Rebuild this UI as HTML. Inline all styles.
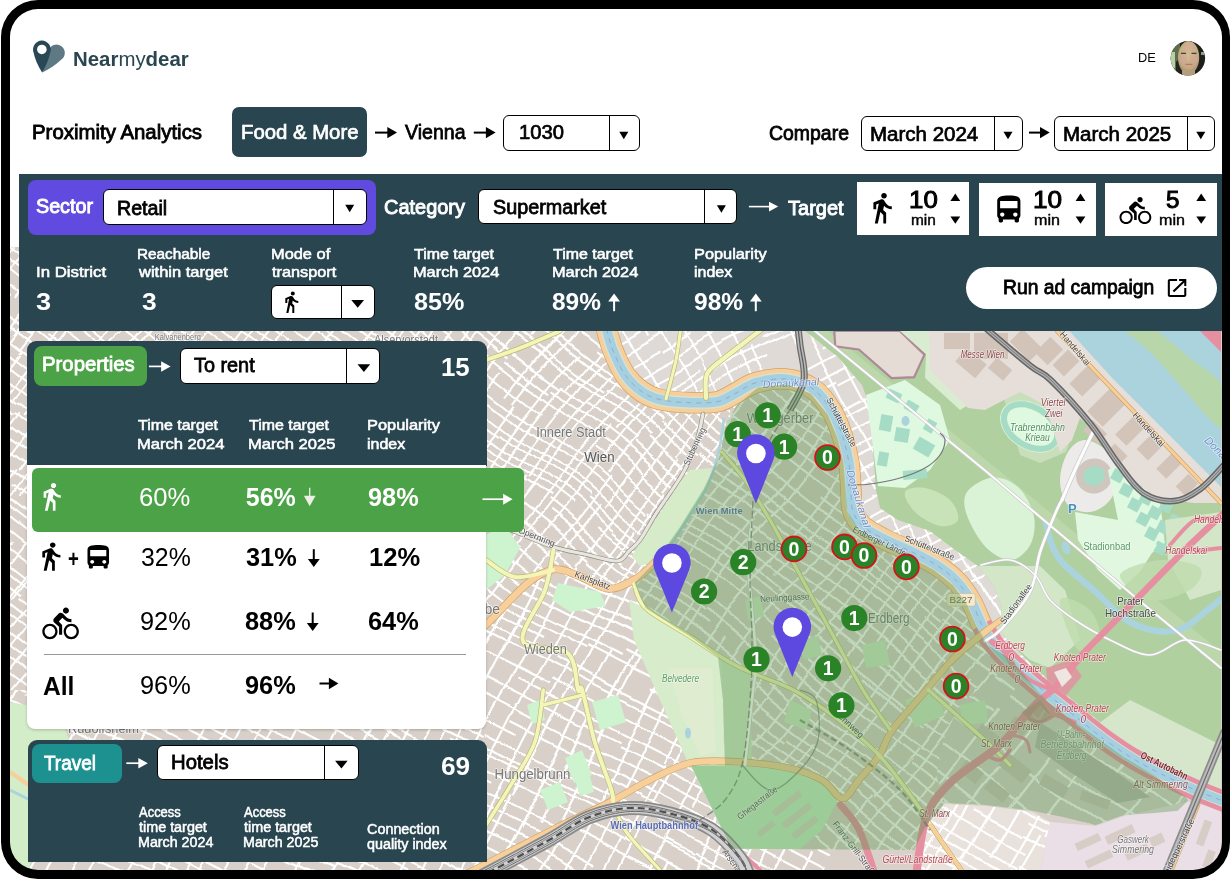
<!DOCTYPE html>
<html lang="en"><head><meta charset="utf-8"><title>Nearmydear – Proximity Analytics</title>
<style>
html,body{margin:0;padding:0;background:#fff}
body{width:1231px;height:879px;overflow:hidden;position:relative;font-family:"Liberation Sans",sans-serif}
#frame{position:absolute;left:0;top:0;width:1231px;height:879px;overflow:hidden;background:#fff}
#bezel{position:absolute;left:1.2px;top:-0.3px;width:1228.7px;height:879.1px;box-sizing:border-box;border:solid #000;border-width:9.1px 8.8px 9.3px 9.1px;border-radius:37px;box-shadow:0 0 0 60px #fff;pointer-events:none}
#map{position:absolute;left:10px;top:247px;width:1215px;height:626px;overflow:hidden;background:#e6e1dc}
#map svg{position:absolute;left:0;top:0}
.t{position:absolute;line-height:1;white-space:nowrap;transform-origin:0 0;margin:0;padding:0}
.b{position:absolute;box-sizing:border-box}
.sel{position:absolute;box-sizing:border-box;background:#fff;border:1px solid #000;border-radius:6px}
.sel i{position:absolute;top:0;bottom:0;width:1px;background:#000}
svg.ic{position:absolute;overflow:visible}
#txt{position:absolute;left:0;top:0;width:1231px;height:879px;will-change:transform}
#map svg{will-change:transform}

</style></head>
<body>
<div id="frame">
<div id="map">
<svg width="1215" height="626" viewBox="10 247 1215 626" font-family="'Liberation Sans', sans-serif">
<defs><filter id="warp" x="-5%" y="-5%" width="110%" height="110%"><feTurbulence type="fractalNoise" baseFrequency="0.009" numOctaves="1" seed="4" result="n"/><feDisplacementMap in="SourceGraphic" in2="n" scale="30" xChannelSelector="R" yChannelSelector="G"/></filter>
<filter id="soft" x="0" y="0" width="100%" height="100%"><feGaussianBlur stdDeviation="0.45"/></filter>
<clipPath id="c1"><path d="M10 247L1225 247L1225 873L10 873Z"/></clipPath>
<clipPath id="c2"><path d="M10 247L612 247L606.8 330L613 350.5L625.2 375L641.6 391.4L660 399.6L690.7 402.7L717.4 401.7L736 393L728 418L722 452L704 489L680 526L656 561L637.5 577.6L608.9 588.8L578 575.5L553.6 569.4L527 583.7L486 624.7L420 690L10 690Z"/></clipPath>
<clipPath id="c3"><path d="M598 300L606.8 330L613 350.5L625.2 375L641.6 391.4L660 399.6L690.7 402.7L717.4 401.7L736 393L756.5 382.5L787.2 379.1L813.8 389.4L832.2 411.9L842.5 436.5L848.6 461L850.7 485.6L852.5 510L863 526.4L883.4 538.7L910 551L936.7 565.3L957.1 581.7L971.5 602L981.7 624.7L992 642L1010 661.7L1042.4 690L1073.1 714.6L1103.9 739.1L1134.6 759.6L1165.3 776L1196 790.3L1228 803L1221 803L1221 247L598 247Z"/></clipPath>
<clipPath id="c4"><path d="M634.5 583L656 561.2L680 527L703.6 489L720 455L726 424L737 405L757.9 387.5L786.6 384.3L810.7 393.6L827.8 414.6L837.6 438.1L843.5 461.9L845.5 486L847.5 511.5L859.5 530.2L881 543.3L907.7 555.7L933.9 569.7L953.3 585.3L967 604.6L977.1 627.1L987.9 645.2L1012 660L1036.3 690L1048.6 702.3L1073.1 720.7L1095.7 737.1L1124.3 757.6L1155 776L1185.7 796.5L1187.8 801L1177.6 810.8L1155 812.9L1124.3 814.9L1095.7 825.1L1062.9 817L1032.2 810.8L986 805L944.8 803L926.4 825L914 850L731.7 848.7L691 765.4L725 765.4L723 700L718 657L690.7 637L645.7 608.3Z"/></clipPath>
<clipPath id="c5"><path d="M962 702L1012 664L1036.3 690L1073 720.7L1124 757.6L1185.7 796.5L1177 810.8L1124 814.9L1095.7 825.1L1032 810.8L986 805L944.8 803L936 775L945 735Z"/></clipPath>
<clipPath id="c6"><path d="M926 826L944.8 804L986 806L1032.2 811.8L1050 822L1040 870L916 870Z"/></clipPath></defs>
<g filter="url(#soft)">
<rect x="5" y="242" width="1225" height="636" fill="#d9d1c9"/>
<g clip-path="url(#c1)"><path filter="url(#warp)" d="M798.2 239.8L870.1 276.5M748.8 223.9L807.9 254M733.6 230.7L781.5 255.1M714.6 232.9L752.4 252.2M751.7 253.5L779.4 267.6M779.4 267.6L817.9 287.3M705.7 243.1L779.3 280.6M779.3 280.6L860.8 322.2M740.6 279.9L812.8 316.7M585.8 213.5L667.8 255.3M725.2 283.8L780 311.7M780.5 310.8L827 334.4M599.1 234.5L644.4 257.6M644.4 257.6L687.4 279.5M687.4 279.5L748.9 310.8M750.8 307L790.5 327.2M790.5 327.2L831 347.8M581.7 235.1L659.9 275M701.3 298.2L770.5 333.5M770.5 333.5L837.6 367.7M551.2 231.7L599 256.1M599 256.1L638.1 276M638.1 276L696.3 305.7M696.3 305.7L742.5 329.2M741.8 330.5L816 368.3M609.4 280.4L686.8 319.8M687.9 317.6L718.5 333.2M718.5 333.2L791.9 370.6M791.9 370.6L835.6 392.9M515.8 250.6L562.9 274.6M562.9 274.6L651.2 319.6M652.8 316.6L710.6 346M710.6 346L751.9 367.1M751.9 367.1L820.7 402.2M466.5 235.6L516.5 261.1M516.5 261.1L559.4 283M559.4 283L592.8 299.9M592.8 299.9L633.1 320.5M633 320.6L675.6 342.3M715.1 362.4L784.1 397.6M784.1 397.6L823.5 417.6M459.1 244.8L491.4 261.2M491.4 261.2L549.6 290.9M549.6 290.9L608.8 321M607.2 324.2L684.2 363.4M685.4 361L770.9 404.6M770.9 404.6L801 419.9M389.3 226.2L430.7 247.3M430.7 247.3L486.1 275.5M486.1 275.5L519.5 292.5M519.5 292.5L551.9 309.1M551.9 309.1L581.2 324M580.7 324.9L656 363.2M656.7 361.7L707 387.3M705.8 389.7L794.7 434.9M794.7 434.9L833.5 454.7M367.5 226.9L450 269M450 269L483.9 286.3M483.9 286.3L533.1 311.3M533.1 311.3L596 343.4M593.3 348.8L659.3 382.4M659.3 382.4L702.5 404.4M702.5 404.4L751.7 429.5M751.7 429.5L789.5 448.7M790.1 447.6L832.6 469.3M347.3 228L395.9 252.7M395.9 252.7L481.1 296.1M478.5 301.2L508 316.2M549.6 337.4L577.1 351.4M577.1 351.4L612.7 369.5M612.7 369.5L671 399.3M671 399.3L708.6 418.4M708.6 418.4L738.4 433.6M297.5 220.4L383.1 264.1M383.1 264.1L464.8 305.7M464.2 306.8L530.3 340.4M530.3 340.4L618.1 385.2M618.1 385.2L688.3 420.9M688.3 420.9L760.2 457.6M760.2 457.6L800.2 477.9M282.1 220.6L348.3 254.4M390.8 281.4L430.3 301.6M430.3 301.6L458.4 315.9M458.4 315.9L529.7 352.2M529.7 352.2L616.6 396.5M681.9 429.7L735.8 457.2M735.8 457.2L806.5 493.2M264.9 228.4L340.7 267M340.7 267L392.5 293.4M392.5 293.4L424.6 309.8M425.6 307.8L468.8 329.8M468.8 329.8L519.1 355.4M518.3 357.1L578.2 387.7M578.2 387.7L645.2 421.8M645.2 421.8L681.6 440.4M681.6 440.4L754.6 477.6M754.6 477.6L829.6 515.8M254.4 234.8L308.2 262.2M308.2 262.2L341.6 279.2M341.6 279.2L370.4 293.9M370.4 293.9L440.4 329.6M440.4 329.6L496.1 357.9M496.1 357.9L548 384.4M548 384.4L601.6 411.7M601.6 411.7L654.6 438.7M654.6 438.7L736.2 480.3M736.2 480.3L816.1 521M327.9 288.2L364.6 306.9M423.7 337L484.2 367.8M484.2 367.8L550.8 401.8M550.8 401.8L603.1 428.4M603 428.6L654.2 454.7M753.8 507.9L806.7 534.9M209 241.9L264.9 270.4M264.9 270.4L299.5 288M299.5 288L379.3 328.6M379.3 328.6L421.8 350.3M423.5 347L495.2 383.6M494.2 385.5L550.9 414.4M550.9 414.4L618.7 449M698.7 489.8L782 532.2M176.8 241.1L259.3 283.1M259.3 283.1L298.3 303M298.3 303L371.3 340.2M371.3 340.2L432.7 371.4M492.7 395.7L528.5 413.9M528.5 413.9L588.9 444.7M586.5 449.4L642.4 477.9M642.4 477.9L721.5 518.2M156.9 243.6L196.8 264M196.8 264L258.1 295.2M258.1 295.2L336.4 335.1M336.4 335.1L380.1 357.4M380.1 357.4L447.6 391.8M447.6 391.8L494.1 415.5M494.1 415.5L560.5 449.3M559.7 450.8L641.7 492.5M643.1 489.7L670.2 503.5M670.2 503.5L734.9 536.5M734.9 536.5L818.4 579M94.2 221.6L169.2 259.8M169.2 259.8L218.9 285.2M218.9 285.2L280.7 316.7M280.7 316.7L333.8 343.7M333.8 343.7L400.5 377.7M427.9 396.1L490.5 428M490.5 428L518.1 442.1M518.1 442.1L603.3 485.5M655.8 512.2L695.8 532.6M697.7 528.8L767.1 564.2M767.1 564.2L799.3 580.6M799.2 580.7L870.8 617.2M79.4 229.9L164.3 273.2M312.9 350.2L385.2 387M442.2 416L504.8 447.9M504.8 447.9L540.6 466.2M540.6 466.2L607.5 500.3M607.5 500.3L658.3 526.2M658.3 526.2L734 564.7M734 564.7L764.5 580.3M764.5 580.3L842.8 620.2M61.6 233.9L131.1 269.3M131.1 269.3L208.2 308.6M209 307L262.1 334M344.1 375.9L421.5 415.3M421.5 415.3L465.3 437.6M465.3 437.6L534.7 473M534.7 473L566.8 489.3M566.8 489.3L606 509.3M606 509.3L647.3 530.4M647.3 530.4L703.1 558.8M703.1 558.8L776.7 596.3M776.7 596.3L808.9 612.7M40.2 239.2L89.5 264.3M89.5 264.3L148.5 294.4M197.6 321.8L273.4 360.5M273.4 360.5L321.6 385.1M324.9 378.6L413.4 423.7M413.4 423.7L475.5 455.4M475.5 455.4L528.8 482.5M528.8 482.5L606.6 522.2M606.6 522.2L635.7 537M635.5 537.3L665.5 552.6M665.5 552.6L720.8 580.7M720.8 580.7L751.5 596.4M751.5 596.4L785.7 613.8M785.7 613.8L847.7 645.4M26.4 243L109.4 285.4M109.4 285.4L139 300.5M139 300.5L206.1 334.6M207.3 332.3L281.1 369.9M281.1 369.9L326.5 393M326.5 393L359.8 410M359.8 410L394.3 427.5M394 428.2L429.6 446.3M466.9 469.3L507.4 490M507.4 490L589.5 531.8M589.5 531.8L622.3 548.5M622.3 548.5L688.2 582.1M688.2 582.1L766.3 621.9M766.3 621.9L801.9 640.1M75 280.9L105.2 296.4M105.2 296.4L145.1 316.7M145.1 316.7L188 338.5M188 338.5L276.5 383.6M276.5 383.6L309.3 400.3M309.3 400.3L339.6 415.8M427.4 460.5L475.4 485M474.3 487.2L533.8 517.5M533.8 517.5L617.4 560.1M617.4 560.1L652.8 578.1M652.8 578.1L723.9 614.4M726.4 609.4L791.1 642.4M791.1 642.4L830.7 662.5M-12.9 248L64.4 287.3M64.4 287.3L145.1 328.4M143.7 331.2L200.1 359.9M200.1 359.9L238.5 379.5M238.5 379.5L275.4 398.3M275.4 398.3L302.4 412.1M302.4 412.1L361.3 442.1M361.3 442.1L439 481.6M439 481.6L510.1 517.9M510.1 517.9L540.6 533.4M540.6 533.4L598.2 562.8M658.4 593.5L699.1 614.2M-17.6 257.3L16.8 274.8M16.8 274.8L61 297.3M61 297.3L96.2 315.3M96.2 315.3L132.2 333.6M132.2 333.6L169.1 352.4M169.1 352.4L220.1 378.4M220.1 378.4L279.6 408.7M279.6 408.7L354.8 447M355.4 445.9L409.3 473.4M409.3 473.4L492.9 516M492.9 516L523 531.3M523 531.3L608 574.6M608 574.6L674.2 608.4M674.2 608.4L705.2 624.2M705.2 624.2L733.3 638.5M733.3 638.5L808.4 676.8M-23.6 269.1L20.1 291.4M20.1 291.4L85.6 324.8M85.6 324.8L139.4 352.2M139.4 352.2L185.2 375.5M184.9 376.2L271.2 420.2M271.2 420.2L327 448.6M328.6 445.5L363.6 463.3M363.6 463.3L408.3 486M406.8 488.9L485.9 529.2M485.9 529.2L553.2 563.5M553.2 563.5L608.7 591.7M608.7 591.7L664.7 620.2M665.8 618.1L724.5 648M724.5 648L752 662M752 662L793.6 683.2M793.6 683.2L838.1 705.8M72.4 335.7L145.2 372.8M145.2 372.8L193.9 397.6M193.9 397.6L273.7 438.2M273.7 438.2L346.5 475.3M346.5 475.3L402.9 504M402.9 504L486.7 546.7M486.7 546.7L513.7 560.5M513.7 560.5L571.4 589.9M571.4 589.9L624.2 616.8M624.2 616.8L688.8 649.7M688.8 649.7L744.1 677.9M744.1 677.9L795.2 704M795.2 704L842 727.8M-34.1 289.7L28.5 321.6M27 324.5L74 348.4M74 348.4L160.5 392.5M245.2 432.6L303 462.1M303 462.1L363.3 492.8M363.3 492.8L422.3 522.9M422.3 522.9L471.3 547.8M471.3 547.8L557.2 591.6M557.2 591.6L590.1 608.3M590.1 608.3L651.8 639.8M651.8 639.8L738.7 684.1M738.7 684.1L804.4 717.5M-39 299.3L43.5 341.4M43.5 341.4L132 386.5M132 386.5L168.5 405M168.5 405L226.7 434.7M226.3 435.6L290.6 468.4M357 502.2L432.9 540.9M432.9 540.9L459.9 554.6M459.9 554.6L523.1 586.9M523.6 586L584.8 617.2M584.8 617.2L644.7 647.7M644.7 647.7L697.1 674.4M730.4 691.5L808.5 731.3M-0.7 331.2L62.4 363.3M113.2 389.2L176.2 421.4M176.2 421.4L241.6 454.7M240.2 457.6L320.2 498.3M320.2 498.3L397.8 537.9M397.8 537.9L484.4 582M484.4 582L526.3 603.4M526.3 603.4L566.9 624M566.9 624L623.8 653M626.4 648L675.5 673M675.5 673L720.3 695.8M719.1 698.2L769.9 724.1M771.3 721.4L849.5 761.2M-12.1 336.7L66.7 376.8M66.7 376.8L145.6 417M145.3 417.6L217.1 454.2M217.1 454.2L256.8 474.4M256.8 474.4L297.7 495.2M296.5 497.6L339.5 519.5M339.5 519.5L389.2 544.8M389.2 544.8L429.1 565.2M429.8 563.9L490.4 594.8M490.4 594.8L541.1 620.6M541.1 620.6L587.2 644.1M588.4 641.9L668.2 682.5M668.2 682.5L701.7 699.6M701.7 699.6L759.6 729.1M759.2 730L800 750.8M-10.3 351.7L57.8 386.4M57.8 386.4L125.6 421M124.5 423.3L173.1 448.1M175.6 443.2L259.3 485.8M288.3 501.3L333.9 524.5M333.5 525.3L400.1 559.2M400.1 559.2L462.3 590.9M462.3 590.9L516.2 618.4M516.2 618.4L543 632M652.9 686.3L729 725.1M-59.8 340.1L24.9 383.3M24.9 383.3L103.4 423.3M103.4 423.3L133.5 438.6M133.5 438.6L192.2 468.5M191.3 470.3L220.8 485.3M220.8 485.3L263.8 507.2M263.8 507.2L330.3 541.1M332.7 536.4L381.7 561.4M380.9 563.1L416.1 581M416.1 581L457.7 602.2M457.7 602.2L512.2 630M512.2 630L557.6 653.1M556.7 654.8L604.2 679M604.2 679L678.4 716.8M678.4 716.8L742.5 749.4M6.2 384.8L62.2 413.3M63 411.6L90.4 425.6M90.4 425.6L122.4 441.9M184.3 473.4L238.1 500.8M238.1 500.8L265.4 514.7M265.4 514.7L331.2 548.3M331.2 548.3L373.6 569.9M373.8 569.6L448.8 607.8M448.8 607.8L487.1 627.3M487.1 627.3L571.7 670.4M571.7 670.4L650.2 710.4M650.2 710.4L688.4 729.9M688.4 729.9L738.2 755.2M738.2 755.2L816.7 795.3M-71.4 362.8L14.3 406.5M14.3 406.5L50.8 425.1M50.8 425.1L82.6 441.3M170 485.3L208.6 505M207.3 507.7L287.3 548.5M287.3 548.5L331.7 571.1M331.7 571.1L384.7 598.1M384.7 598.1L453 632.9M453 632.9L490 651.7M490 651.7L551.9 683.2M554.4 678.2L601.4 702.1M601.4 702.1L684.8 744.6M684.8 744.6L771.5 788.8M771.5 788.8L802 804.3M126.1 478.8L176 504.3M176 504.3L235.8 534.7M235.8 534.7L269.6 552M373.1 604.7L415.5 626.3M415.5 626.3L456.4 647.1M520.4 678.4L551.7 694.3M551.7 694.3L612.7 725.4M612.7 725.4L646.6 742.7M646.6 742.7L679.7 759.6M679.7 759.6L717.1 778.6M717.1 778.6L792.2 816.9M792.2 816.9L822.5 832.3M-29.8 413L51.3 454.3M51.3 454.3L132.4 495.6M132.4 495.6L180.4 520.1M180.4 520.1L258.6 560M258.6 560L331.3 597M331.3 597L360.8 612M437.4 651.5L506.2 686.5M506.6 685.9L585.6 726.1M587.1 723.3L620.7 740.4M618.9 744L663.7 766.8M663.7 766.8L699.4 785M699.4 785L769.1 820.5M769.1 820.5L796.7 834.6M796.9 834.2L832.8 852.5M-20.3 433.5L16.3 452.1M16.3 452.1L97.5 493.5M98 492.3L138.3 512.8M138.3 512.8L167.7 527.8M167.7 527.8L223.6 556.3M407 652.7L450.8 674.9M450.8 674.9L493.9 696.9M493.9 696.9L580.3 740.9M580.6 740.2L655.5 778.3M655.5 778.3L721.7 812M721.7 812L766 834.6M766 834.6L826.3 865.3M-22.8 447.6L25.8 472.3M25.8 472.3L56.3 487.9M56.3 487.9L144.7 532.9M144.7 532.9L186.6 554.3M221.8 572.2L276.8 600.2M276.8 600.2L322.4 623.4M323 622.1L369 645.5M369 645.5L454.2 688.9M516.4 723L604.7 768M604.7 768L658.1 795.2M658.5 794.5L741.3 836.7M741.3 836.7L769.4 851.1M769.4 851.1L820.3 877M66.8 505.8L148.2 547.2M149.2 545.1L209.5 575.8M209.5 575.8L293.7 618.7M293.7 618.7L367.2 656.2M367.2 656.2L436.3 691.4M435.5 692.9L465.1 707.9M465.1 707.9L522.6 737.3M578.3 765.6L640.2 797.2M639.5 798.5L711.4 835.1M713 832.1L748.6 850.2M746.4 854.6L799.5 881.7M-33.1 468L41.2 505.9M41.2 505.9L116.2 544.1M116.2 544.1L160.3 566.5M195.2 584.3L262.8 618.8M262.8 618.8L351.3 663.8M385.1 677.4L443.1 707M440.1 712.8L489.7 738.1M490.4 736.7L574.6 779.6M574.4 779.9L616.3 801.2M616.3 801.2L682.7 835.1M682.7 835.1L738.1 863.3M738.1 863.3L771.6 880.3M-27.5 484.4L13.2 505.2M13.2 505.2L67 532.6M66.1 534.3L133 568.4M133 568.4L173.2 588.9M172.8 589.6L253.8 630.8M253.8 630.8L331.8 670.6M331.8 670.6L388.8 699.6M389.5 698.4L453.5 731M453.5 731L535.3 772.7M535.3 772.7L584.5 797.8M584.5 797.8L622.6 817.2M666.9 842.2L694.2 856.1M695 854.6L727.8 871.3M727.8 871.3L760.2 887.8M-12.3 503.3L34.2 526.9M34 527.3L69.2 545.3M68.5 546.6L104.5 564.9M104.5 564.9L138.2 582.1M138.2 582.1L222.2 624.9M221.3 626.8L303.1 668.5M303.1 668.5L340.9 687.7M344 681.6L402.5 711.3M451.8 736.5L519.3 770.9M519.3 770.9L589.1 806.4M589.1 806.4L660.6 842.9M660.6 842.9L713.4 869.8M713.4 869.8L764.2 895.7M-7.3 520.7L39.6 544.7M39.6 544.7L86 568.3M85.9 568.7L165.8 609.4M165.8 609.4L254.6 654.6M254.6 654.6L327.7 691.9M327.7 691.9L379 718M379 718L447.9 753.1M447.9 753.1L508.5 784M508.5 784L551.8 806.1M551.8 806.1L623.5 842.6M623.5 842.6L664.1 863.3M664.1 863.3L723.8 893.7M20.5 547.1L99.2 587.2M142.8 606.5L219.6 645.6M219.6 645.6L251.8 662.1M251.8 662.1L321.9 697.8M321.9 697.8L398.4 736.8M396.6 740.3L446.2 765.5M447.3 763.5L495.2 787.9M556.4 822L600.2 844.3M599.8 845.1L632.2 861.6M632.2 861.6L671.6 881.7M7 553.5L38.2 569.4M38.2 569.4L97.7 599.7M171.7 637.4L227.2 665.7M227.2 665.7L279.8 692.5M279.8 692.5L334 720.1M334 720.1L412.2 760M463.9 786.3L525.2 817.6M525.2 817.6L559.3 834.9M-67.9 529.5L12.4 570.4M65.4 597.4L146.2 638.5M146.2 638.5L188.9 660.3M188.8 660.6L238.8 686.1M238.8 686.1L302 718.2M302 718.2L341.2 738.2M341.2 738.2L371.1 753.5M371.1 753.5L423.4 780.1M423.4 780.1L467.1 802.4M467.1 802.4L538.2 838.6M538.2 838.6L593.3 866.7M-5.4 572.9L47.2 599.6M47.2 599.6L130.4 642.1M200.7 677.5L245.7 700.4M245.7 700.4L292.3 724.2M289.4 729.9L336.4 753.8M336.8 753.1L424.6 797.8M426 795L492.7 829M492.7 829L525.3 845.6M525.3 845.6L578.8 872.9M-2.3 594.5L84.8 638.9M152.4 673.3L207.2 701.3M207.2 701.3L245.1 720.6M245.1 720.6L276.2 736.4M276.3 736.1L352.2 774.7M352.2 774.7L381 789.4M380.7 790.1L415.7 807.9M415.7 807.9L465.8 833.4M467.4 830.2L552.8 873.8M68.9 639.2L126.1 668.3M126.1 668.3L195.8 703.8M195.8 703.8L232.1 722.3M231.2 724.1L290.3 754.2M290.3 754.2L322.2 770.5M321.6 771.8L397.2 810.4M398.4 808L462.5 840.7M461.2 843.2L531.1 878.8M-15.5 615.7L58.1 653.2M57.7 654.1L137.2 694.6M136.9 695.2L185.4 719.9M185.4 719.9L254.1 754.9M253.7 755.6L338.9 799M338.9 799L417.5 839.1M417.5 839.1L471.4 866.6M471.4 866.6L552.4 907.9M-20.9 627.9L57.3 667.8M56.8 668.8L135.7 709M135.7 709L214.5 749.2M242.9 762.2L295.7 789.1M295.7 789.1L343.3 813.4M343.3 813.4L422.7 853.9M422.7 853.9L455 870.3M455 870.3L509.3 898M-5.9 652.3L74.6 693.3M74.6 693.3L159.3 736.4M159.3 736.4L190.7 752.5M190.7 752.5L277.2 796.5M277.2 796.5L343.3 830.2M343.3 830.2L412.3 865.4M412.3 865.4L461.7 890.5M-23.5 654.8L43.7 689.1M43.7 689.1L94.1 714.8M94.1 714.8L164 750.4M163.7 750.9L241.9 790.7M241.9 790.7L277.4 808.8M277.4 808.8L314.2 827.6M315.1 825.8L345.2 841.1M345.2 841.1L432.2 885.5M-20 670.5L22.9 692.4M21.8 694.5L83.9 726.2M83.9 726.2L127.1 748.2M128.1 746.4L201.8 783.9M278.9 823.2L345.9 857.3M345.9 857.3L415.8 893M-23.6 683.1L34.4 712.6M34.4 712.6L107.4 749.8M107.4 749.8L189 791.4M189 791.4L259.6 827.4M259.6 827.4L290.5 843.1M290.5 843.1L334.3 865.4M335.7 862.7L404.5 897.8M-8.3 705.6L80.6 750.9M80.6 750.9L127.9 775M129.2 772.4L164.3 790.3M164.3 790.3L235.2 826.4M235.2 826.4L273.7 846.1M273.7 846.1L312.6 865.8M312.6 865.8L366.7 893.4M-41.7 704.3L14.4 732.9M14.4 732.9L90.7 771.8M125.4 789.5L183.8 819.3M183.8 819.3L211.9 833.6M211.9 833.6L297.6 877.2M33.7 755.2L63.8 770.5M63.8 770.5L132.5 805.5M132 806.5L201.9 842.1M-19.2 740.7L42.2 772M42.2 772L107.6 805.3M139.2 821.4L184 844.2M183.2 845.9L211.4 860.3M211.4 860.3L266.7 888.4M8 769.7L45.9 789M45.9 789L116.7 825.1M116.7 825.1L165.2 849.8M165.4 849.4L253.3 894.2M34 797.8L105.4 834.1M105.6 833.7L175.2 869.2M175.2 869.2L248.9 906.7M-10 787.9L73.2 830.3M73.2 830.3L136.5 862.6M136.7 862.3L169.5 879M81.4 847.9L140.9 878.2M-22.7 811.5L40.4 843.6M70.2 869.1L115 891.9M-21.4 841.2L65.3 885.4M-29.6 845.4L13.6 867.4M-46.1 853L20.6 887M814.2 849.3L784.2 908.3M804.2 813.4L759.8 900.4M821.5 743.4L779.4 826M779.4 826L736.3 910.7M815.5 726.3L779.4 797.2M777.9 796.5L758.6 834.5M758.6 834.5L714.1 921.7M822.4 645.6L795.7 698.1M795.7 698.1L758.9 770.3M758.9 770.3L714.9 856.6M714.9 856.6L691.2 903.1M809.5 643.1L772.9 714.9M772.9 714.9L750.5 758.9M750.5 758.9L706.9 844.5M706.9 844.5L675.1 906.9M805.6 594.8L763 678.5M763 678.5L729.9 743.4M729.9 743.4L696.2 809.5M668.5 863.9L629.3 940.9M806.5 567.2L762.8 653M762.8 653L719 739M719 739L678 819.5M678 819.5L645.1 884M742.3 630.1L720.1 673.7M720.1 673.7L685.4 741.7M685.4 741.7L640.2 830.4M640.2 830.4L621.5 867.2M621.5 867.2L596.5 916.3M840.8 405.4L797.8 489.7M803.9 492.9L787.7 524.7M781.8 521.7L754.7 574.9M754.7 574.9L711.3 660M714.8 661.8L690.9 708.7M690.9 708.7L663.6 762.2M665.5 763.2L624.9 842.8M619.8 840.2L604.4 870.5M604.4 870.5L587.5 903.6M812.4 420.9L783.3 478.1M783.3 478.1L753.9 535.7M753.9 535.7L710.6 620.7M710.6 620.7L692.5 656.2M690.6 655.3L654.8 725.5M654.8 725.5L639.8 755.1M639.8 755.1L622.6 788.9M623.6 789.4L587 861.2M587 861.2L561.7 910.8M802.4 393L758 480.2M758 480.2L726.4 542.2M726.4 542.2L697.4 599.1M697.4 599.1L667.6 657.7M669.9 658.8L640.3 716.9M640.3 716.9L605.5 785.1M605.5 785.1L583.1 829M583.1 829L544.7 904.4M833.2 286.4L797.6 356.4M799 357.1L784.3 385.9M784.3 385.9L749.4 454.4M749.4 454.4L728.5 495.5M724.1 493.2L687.1 565.9M687.1 565.9L664.9 609.5M664.9 609.5L622.8 692M622.8 692L595.2 746.2M595.2 746.2L550.6 833.7M555.9 836.3L512.9 920.6M828.3 261.7L793.1 330.8M797.9 333.3L762.9 402.1M762.9 402.1L742.9 441.3M742.9 441.3L721.9 482.6M698 529.4L663.9 596.3M663.9 596.3L646.4 630.7M646.4 630.7L619.5 683.4M619.5 683.4L602.2 717.3M593.7 713L572.4 754.9M572.4 754.9L557.6 784M557.6 784L535.4 827.6M815.1 262.1L798.6 294.5M798.6 294.5L768.8 352.9M768.8 352.9L738.8 411.8M734.6 409.6L705.3 467.1M705.3 467.1L685 506.9M685 506.9L660.7 554.6M612.7 648.8L582.2 708.7M582.2 708.7L541.7 788.2M541.7 788.2L497.7 874.6M802.6 234.9L766.9 304.9M766.9 304.9L749 340.2M748.9 340.1L725.3 386.4M725.6 386.6L692.4 451.7M692.4 451.7L657.2 520.8M657.2 520.8L618.8 596.2M619.2 596.4L579.2 674.9M579.2 674.9L554 724.3M554 724.3L514.2 802.3M512.5 801.5L497.8 830.3M497.8 830.3L461.1 902.4M796.5 218.3L763 284M760.8 282.8L738.3 327M738.3 327L697 408M697 408L658.1 484.3M658.1 484.3L618.7 561.6M620.8 562.7L577.7 647.1M577.7 647.1L536.7 727.6M536.7 727.6L508.4 783.2M508.4 783.2L488.5 822.2M488.5 822.2L451.2 895.4M753.7 246.2L735.2 282.5M735.2 282.5L705.4 340.9M703.2 339.7L678.3 388.5M682.9 390.8L649.1 457.2M649.1 457.2L617 520M617 520L603.4 546.8M603.4 546.8L563.3 625.4M563.3 625.4L529.8 691.1M529.8 691.1L506.9 736.1M506.9 736.1L471.8 805.1M471.8 805.1L436.7 873.8M759.8 198.9L721.8 273.5M721.8 273.5L701.2 313.8M701.2 313.8L664.5 385.9M664.5 385.9L630.3 453M630.3 453L614.6 483.8M614.6 483.8L596.1 520.1M596.1 520.1L579.3 553.2M579.3 553.2L564 583M561.9 581.9L545.5 614M545.5 614L522.3 659.5M522.3 659.5L483.7 735.4M484 735.6L470.1 762.8M465.3 760.3L426.9 835.7M433.6 839.2L395.9 913.1M727.7 213.2L693.1 281.1M693.1 281.1L661.2 343.7M620.1 424.4L578.5 506M577.2 505.4L543.5 571.5M543.5 571.5L525.7 606.4M525.7 606.4L489 678.6M489 678.6L454.5 746.3M456.4 747.2L432.4 794.2M432.4 794.2L414.7 829M414.7 829L376 905M694.2 240.2L673.3 281.1M673.3 281.1L639.2 348.2M639.2 348.2L601.6 422M606.2 424.4L578.3 479.1M574.3 477L536.4 551.3M535.6 550.9L508.5 604.2M508.5 604.2L487.3 645.8M487.3 645.8L472.6 674.6M472.6 674.6L449.3 720.2M449.3 720.2L433.7 750.9M399.6 823.4L381.9 858M708.4 176.4L671.9 248.1M671.9 248.1L652.3 286.5M652.3 286.5L620.1 349.8M586.1 416.6L556.7 474.2M556.6 474.2L527 532.3M527 532.3L500.2 584.8M500.2 584.8L455.4 672.7M455.4 672.7L411.8 758.3M411.8 758.3L378.8 823.2M378.8 823.2L344.6 890.3M665 217.1L629.2 287.2M629.2 287.2L602.8 339M602.8 339L583.2 377.5M583.2 377.5L544.9 452.7M544.9 452.7L504.6 531.8M504.6 531.8L468.3 603.1M468.3 603.1L426.7 684.7M426.7 684.7L398 741M398 741L359 817.6M359 817.6L324.1 886.1M650.3 212.1L618.1 275.1M617.8 274.9L573.3 362.1M573.3 362.1L531.6 444.2M531.6 444.2L517.3 472.2M517.3 472.2L481.5 542.3M481.5 542.3L463 578.7M463 578.7L436.7 630.3M436.7 630.3L404.9 692.8M404.9 692.8L372.2 756.9M372.2 756.9L340.6 819M315.2 868.8L279.1 939.6M617.7 230.7L593.4 278.3M593.4 278.3L565.7 332.8M565.7 332.8L546.5 370.3M522.8 427.5L496.1 479.9M496.1 479.9L455.5 559.6M455.5 559.6L434.3 601.2M434.3 601.2L408.1 652.6M408.1 652.6L384.3 699.5M384.3 699.5L364.2 738.8M364 738.7L348.6 768.9M348.6 768.9L312.8 839.2M312.8 839.2L280.6 902.4M606 196.7L571.2 264.9M571.2 264.9L531.3 343.2M534.4 344.7L508.7 395.1M508.7 395.1L475.5 460.3M475.5 460.3L432.4 544.9M432.4 544.9L400.8 607M402 607.6L370.8 668.7M370.8 668.7L337.4 734.3M337.4 734.3L306.8 794.3M306.8 794.3L292.8 821.9M292.8 821.9L277.2 852.4M275.3 851.4L236.3 928.1M570.7 226.4L551.5 264.1M508.1 349.1L478.8 406.6M475.5 404.9L449.3 456.4M449.3 456.4L433.6 487.2M440.8 490.8L417.6 536.5M417.6 536.5L400.1 570.8M400.1 570.8L381.9 606.5M381.9 606.5L361.4 646.7M300.6 766L262.4 841M262.4 841L217.5 929.1M552.4 215.2L517.4 283.9M517.4 283.9L479.4 358.5M485.3 361.4L447.1 436.3M428.4 473L386.8 554.6M382.1 552.2L365.5 584.6M370.7 587.2L336 655.3M308.1 710.1L286.8 751.9M286.8 751.9L248.2 827.6M248.2 827.6L230.5 862.2M230.5 862.2L208 906.6M540.6 200.1L495.5 288.6M495.5 288.6L455.2 367.7M455.2 367.7L437.6 402.1M437.6 402.1L394.7 486.4M394.7 486.4L364.7 545.3M364.7 545.3L336.2 601.2M336.2 601.2L293.1 685.7M293.1 685.7L275.1 721.1M275.1 721.1L233.7 802.3M233.7 802.3L219.3 830.5M219.3 830.5L193.8 880.6M492.3 256.8L460.1 319.9M460.1 319.9L433.4 372.4M433.4 372.4L414.3 409.8M414.3 409.8L383.4 470.4M383.4 470.4L359.8 516.8M359.8 516.8L315 604.6M319.7 607L301.1 643.7M301.1 643.7L259.2 725.9M259.2 725.9L231.5 780.2M216.6 809.6L181 879.3M509.5 196.6L469.9 274.2M469.9 274.2L445.3 322.6M445.3 322.6L410.9 390.2M410.9 390.2L391.2 428.8M391.2 428.8L360.7 488.7M359.1 487.9L338.2 529M337 528.5L295.8 609.4M295.8 609.4L272.6 654.9M272.6 654.9L249.5 700.3M249.5 700.3L211.7 774.4M211.7 774.4L166.8 862.6M166.8 862.6L152.8 890M464.8 238.8L444.6 278.4M444.6 278.4L407.8 350.6M383.3 398.7L346.5 470.9M344.1 469.7L326.8 503.7M333.3 507L311.6 549.4M311.6 549.4L269.9 631.3M269.9 631.3L232.5 704.8M232.5 704.8L210.8 747.4M210.8 747.4L196.7 775M196.7 775L176.8 814.1M176.8 814.1L162.4 842.3M162.4 842.3L148.4 869.9M457.8 210.3L429 266.7M350.3 411.4L329.2 453M329.2 453L304.4 501.6M304.4 501.6L284.7 540.3M284.7 540.3L239.8 628.3M239.8 628.3L224.9 657.6M232.4 661.5L202 721.1M202 721.1L185.3 753.9M185.3 753.9L167.6 788.5M167.6 788.5L139.1 844.6M139.1 844.6L112.8 896.1M381.7 299.7L355.8 350.4M355.8 350.4L316.4 427.8M316.4 427.8L302 456.1M303 456.6L267.8 525.5M267.8 525.5L224.1 611.3M225.7 612.1L189 684.2M186.7 683.1L159.2 737.2M113.9 824.3L76.7 897.2M402.6 221.3L363.4 298M363.4 298L336.5 350.9M337 351.2L302.8 418.3M302.8 418.3L272.9 476.9M252.5 517.1L228.9 563.4M228.9 563.4L214.2 592.3M214.2 592.3L172.6 673.8M172.6 673.8L134.9 747.8M134.9 747.8L114.8 787.4M114.8 787.4L76.5 862.5M76.5 862.5L36.7 940.7M380.9 218.5L343.2 292.4M344 292.8L317 345.8M317 345.8L291.9 395.1M291.9 395.1L266.4 445M270.6 447.1L234 518.9M234 518.9L201.6 582.5M201.6 582.5L160.2 663.7M160.2 663.7L131.8 719.5M122.9 715L82.7 793.9M82.7 793.9L46.9 864.1M46.9 864.1L21 915M357.7 226L314.4 310.9M309 308.2L282 361.2M282 361.2L245.2 433.4M247.7 434.7L215.9 497.2M215.9 497.2L176.4 574.6M176.4 574.6L152.3 622M152.3 622L128.3 669.1M127.6 668.8L94.1 734.4M94.1 734.4L79.4 763.2M79.4 763.2L60.4 800.6M60.4 800.6L18.1 883.6M357.8 185.2L319.6 260.2M319.6 260.2L276.7 344.4M276.7 344.4L246.4 403.9M246.4 403.9L224.1 447.6M224.1 447.6L199.1 496.7M199.1 496.7L168.7 556.3M167.5 555.7L132.2 624.9M101 676.7L80.7 716.6M80.7 716.6L56.7 763.7M56.7 763.7L34.1 807.9M34.1 807.9L-4.5 883.9M312.3 225.2L287.4 274.1M287.4 274.1L270.6 307.2M270.6 307.2L225.9 394.9M225.9 394.9L203.3 439.3M199.9 437.5L184.9 467M184.9 467L165.3 505.3M165.3 505.3L143.9 547.5M143.9 547.5L109.4 615.2M110.5 615.8L93.3 649.5M97 651.3L68.2 707.8M68.2 707.8L26.2 790.3M23 788.6L8.8 816.5M11.1 817.7L-27.4 893.2M297.6 214.2L256.5 294.8M256.5 294.8L225.8 355M225.8 355L208.5 389M203.7 386.6L179.8 433.4M179.8 433.4L163 466.4M163 466.4L124.1 542.8M124.1 542.8L105.8 578.6M105.8 578.6L80.4 628.5M80.9 628.7L52.6 684.2M52.6 684.2L28.8 731M28.8 731L-12.9 812.7M282.2 201.8L255.6 254.2M248.2 250.4L231.3 283.6M231.3 283.6L197.3 350.2M161.1 438.6L122.7 513.9M122.7 513.9L84.6 588.6M84.6 588.6L42.4 671.6M42.4 671.6L13.5 728.2M13.5 728.2L-25 803.7M246 224.2L206.2 302.3M176.3 371.7L144.5 434M116.7 488.6L76.4 567.6M76.4 567.6L53 613.6M53 613.6L8.4 701.2M220.6 240.2L187.4 305.3M187.4 305.3L145.9 386.9M145.9 386.9L116.7 444.1M116.7 444.1L79.7 516.8M84.3 519.2L59.5 568M59.5 568L42.3 601.7M42.3 601.7L-0.2 685.1M201.1 224.1L186.9 252M186.9 252L165.2 294.6M165.2 294.6L144 336.1M144 336.1L127.4 368.7M129.9 370L105.2 418.5M102.2 416.9L63.1 493.5M63.1 493.5L18.7 580.8M18.7 580.8L-3.7 624.6M188.9 213.8L144.1 301.7M143 301.2L126 334.6M126 334.6L81 422.9M81 422.9L52.3 479.2M52.3 479.2L16.4 549.6M117.1 312.9L88.4 369.4M88.4 369.4L45.2 454.1M48 455.5L33.2 484.5M28.6 482.2L-5.2 548.4M144.3 227.1L120.8 273.3M65.5 381.7L23.2 464.8M19.3 462.8L2.2 496.5M104.1 244.1L72.3 306.6M38.7 372.6L1.8 444.9M107.9 209.7L65.6 292.6M59.7 289.6L17.7 371.9M83.3 223.9L66.9 256.1M47.5 246.8L16.9 306.7M16.8 306.6L0.9 337.8M40.9 206L11.8 263.1M12.2 219.5L-3.6 250.6" fill="none" stroke="#ffffff" stroke-width="2.1"/></g>
<path d="M10 247L612 247L606.8 330L613 350.5L625.2 375L641.6 391.4L660 399.6L690.7 402.7L717.4 401.7L736 393L728 418L722 452L704 489L680 526L656 561L637.5 577.6L608.9 588.8L578 575.5L553.6 569.4L527 583.7L486 624.7L420 690L10 690Z" fill="#d9d1c9" />
<g clip-path="url(#c2)"><path filter="url(#warp)" d="M700.8 237.7L722.3 254.5M722.3 254.5L756.3 281.1M676.4 238L705.4 260.7M704.4 261.9L738.4 288.5M738.4 288.5L760.1 305.4M665.5 244.7L688.4 262.5M688.4 262.5L725.5 291.5M725.5 291.5L758.7 317.5M633 232.8L672.2 263.4M672.2 263.4L707.1 290.7M600.6 219.2L638.9 249.1M638.9 249.1L669.7 273.1M670.4 272.2L694.3 290.9M694.3 290.9L716.6 308.3M716.6 308.3L743.8 329.6M613.4 238.9L630.2 252.1M630.2 252.1L673.3 285.8M673.3 285.8L700.8 307.2M700.8 307.2L733.7 332.9M735.7 330.5L759.8 349.3M604.5 245.9L637.2 271.4M637.2 271.4L661.8 290.7M663.7 288.3L706.2 321.5M705.3 322.7L749.5 357.3M556.3 223.6L590.5 250.3M590.5 250.3L622.3 275.1M622.3 275.1L654.3 300.2M654.3 300.2L673.8 315.4M673.8 315.4L700.8 336.4M700.8 336.4L748 373.3M564.2 242.6L588.9 262M589.1 261.7L616.9 283.4M614.4 286.7L647.3 312.4M647.3 312.4L664.4 325.7M664.4 325.7L696.1 350.5M698.1 348L720.5 365.5M720.5 365.5L741.2 381.6M529.4 235.4L563.5 262M567 257.5L605 287.2M605 287.2L628.8 305.8M628.8 305.8L664.7 333.9M662.1 337.3L678.3 349.9M678.3 349.9L696.4 364M696.4 364L739.5 397.7M739.5 397.7L780.3 429.6M531.2 243L559.5 265.1M559.5 265.1L600.9 297.4M600.9 297.4L639.1 327.3M639.1 327.3L655.3 340M693.7 371.3L712.3 385.9M712.3 385.9L747.5 413.3M487.3 226L533.3 261.9M533.3 261.9L566.8 288.1M566.8 288.1L597.9 312.3M597.9 312.3L633.3 340M633.3 340L653.2 355.5M654.4 354L701.1 390.4M700.1 391.7L717.7 405.5M718.6 404.4L754.4 432.4M462.4 218.8L506.1 252.9M506.1 252.9L523.4 266.5M525.9 263.3L549.3 281.6M549.3 281.6L569.2 297.2M566 301.2L605.6 332M605.6 332L652.2 368.4M652.2 368.4L674 385.5M674 385.5L706.1 410.5M706.1 410.5L731.7 430.6M731.7 430.6L749.1 444.1M473.2 238L520.3 274.9M520.3 274.9L560 305.9M556.5 310.4L586 333.4M586 333.4L618.4 358.7M618.4 358.7L636 372.5M636 372.5L673.7 402M673.7 402L690 414.7M691.4 412.9L723.7 438.1M459.2 242.9L495.5 271.3M495.5 271.3L527.1 296M527.1 296L543.8 309M543.8 309L562.4 323.5M593.2 346.3L629.5 374.7M629.5 374.7L653.7 393.6M653.7 393.6L685.8 418.7M685.8 418.7L704.2 433.1M704.2 433.1L743.9 464.1M408.5 214.4L452.1 248.5M450.3 250.8L488.1 280.3M489.2 278.9L505.6 291.8M531.6 312L578.8 348.9M578.8 348.9L604.9 369.3M604.9 369.3L632.2 390.6M632.2 390.6L661.4 413.5M661.4 413.5L700 443.6M700 443.6L742.7 477M430 240L467 268.9M467 268.9L512.4 304.4M512.4 304.4L539.2 325.3M539.2 325.3L556.1 338.5M556.1 338.5L573.9 352.4M573.9 352.4L621.1 389.2M621.1 389.2L660.6 420.1M658.6 422.6L702 456.5M703.4 454.7L735.4 479.7M735.4 479.7L765.6 503.3M417.6 246.8L451 272.9M451 272.9L490.8 304.1M490.8 304.1L522.3 328.7M522.3 328.7L564.9 362M564.9 362L600.9 390M603 387.4L636.8 413.8M636.8 413.8L662.9 434.2M662.9 434.2L690 455.4M717.6 476.9L750.7 502.8M389.8 231.3L416.6 252.3M416.6 252.3L456.1 283.1M456.1 283.1L488 308M488 308L516.3 330.1M516.3 330.1L544.9 352.4M544.9 352.4L571.5 373.2M571.5 373.2L593.9 390.7M593.9 390.7L615.5 407.7M615.5 407.7L649.5 434.2M648 436.2L669.6 453.1M669.6 453.1L692.4 470.9M692.4 470.9L718.5 491.3M718.5 491.3L759.2 523.1M364.4 231.5L405.9 264M405.9 264L429.7 282.5M463.8 309.2L493.7 332.5M493.7 332.5L527 358.6M527 358.6L562.4 386.2M563.8 384.5L584.7 400.8M585.9 399.3L605.9 415M605.9 415L636 438.5M634.1 441L657.8 459.5M659.3 457.6L687.7 479.8M687.7 479.8L708.6 496.2M708.6 496.2L734.6 516.5M734.6 516.5L753 530.8M360.2 236.3L384.9 255.6M384.9 255.6L431.7 292.1M431.7 292.1L476.8 327.3M476.8 327.3L515.5 357.6M513.4 360.3L553.1 391.4M555.6 388.3L588.5 414M588.5 414L617.3 436.5M617.3 436.5L646.6 459.4M646.6 459.4L681.5 486.7M707.5 507L744.9 536.2M330.8 230.6L370.2 261.3M370.2 261.3L417 297.9M417 297.9L435.2 312.1M437.3 309.5L473.8 338M473.8 338L511.2 367.3M511.2 367.3L558.5 404.2M558.5 404.2L599.5 436.2M599.5 436.2L644.8 471.6M643.8 472.9L681.8 502.5M681.4 503L701.6 518.7M700.6 520.1L723.1 537.6M723.4 537.2L759.5 565.3M312.3 234L359.5 270.9M362.3 267.4L399.2 296.3M416.7 309.9L445.3 332.2M445.3 332.2L464.8 347.5M464.8 347.5L503.8 378M503.8 378L525.3 394.7M525.3 394.7L546.5 411.3M593.7 448.2L624 471.8M624 471.8L642.7 486.5M642.7 486.5L682.3 517.4M682.3 517.4L702.9 533.5M702.9 533.5L736.4 559.7M736.4 559.7L759.9 578M298.6 237L335.9 266.1M335.9 266.1L352.4 279M352.4 279L372.4 294.6M372.4 294.6L409.4 323.5M409.4 323.5L455.5 359.6M455.5 359.6L502.4 396.2M502.4 396.2L528.6 416.6M528.6 416.6L547.4 431.4M547.4 431.4L581.9 458.3M581.9 458.3L610.4 480.6M610.4 480.6L648.7 510.5M650.6 508.1L696 543.6M696 543.6L724.5 565.9M292.4 244.1L336 278.2M337.4 276.4L380.8 310.4M380.8 310.4L408.9 332.3M408.9 332.3L442.5 358.6M442 359.3L479.5 388.6M479.5 388.6L520.1 420.4M520.1 420.4L546.2 440.8M546.2 440.8L567.9 457.7M567.9 457.7L606.1 487.5M606.1 487.5L623.9 501.5M623.9 501.5L662.3 531.5M662.3 531.5L679 544.5M679 544.5L709.3 568.2M709.3 568.2L741.9 593.6M271.1 241.5L289 255.6M289 255.6L318.5 278.6M318.5 278.6L335.5 291.9M335.5 291.9L354.8 307M354.8 307L378.9 325.7M378.9 325.7L412 351.7M412 351.7L456.9 386.7M456.9 386.7L483.3 407.3M483.3 407.3L526.3 441M526.3 441L547.7 457.6M547.7 457.6L592.2 492.4M592.2 492.4L625.9 518.7M625.9 518.7L671 554M671 554L704.6 580.2M705.1 579.5L741.1 607.6M292 270.2L315.7 288.7M315.7 288.7L350.6 315.9M370 331.1L400.5 354.9M402.1 352.9L417.8 365.3M417 366.4L447.7 390.3M446.4 391.9L482.3 420M483.7 418.3L502.7 433.1M503.7 431.8L544.9 464M544.9 464L586.3 496.3M584.2 499.1L626.7 532.4M626.7 532.4L655.9 555.2M655.9 555.2L682.8 576.1M682.8 576.1L704.4 593.1M227.3 230.8L255.9 253.2M255.9 253.2L286.4 277M285.7 277.9L312 298.4M314.9 294.5L349.3 321.4M349.3 321.4L371.4 338.6M371.4 338.6L408.8 367.8M407 370.1L425.3 384.4M425.3 384.4L470.5 419.7M470.5 419.7L512.3 452.4M512.3 452.4L530 466.2M530 466.2L565.7 494.1M565.7 494.1L610.4 529.1M609 530.9L648.8 561.9M648.8 561.9L678.3 585M678.3 585L709.5 609.4M709.5 609.4L733.1 627.9M735.7 624.6L777.6 657.3M262.3 267.7L301.7 298.5M301.6 298.7L345.6 333.1M346 332.5L369 350.5M369 350.5L398.7 373.7M398.7 373.7L428.6 397.1M428.6 397.1L461.4 422.7M461.4 422.7L497 450.5M497 450.5L530.3 476.5M530.3 476.5L568 506M594.3 526L626.6 551.2M626.6 551.2L644.4 565.2M644.4 565.2L661.5 578.5M661.5 578.5L707.7 614.6M707.7 614.6L734.3 635.4M734.3 635.4L764.6 659.1M202.3 234.1L240.6 264M280.7 295.4L313 320.6M313 320.6L346.2 346.6M347.9 344.4L371 362.4M371 362.4L410.8 393.5M410.8 393.5L445.1 420.4M445.1 420.4L481.3 448.6M481.3 448.6L501.4 464.3M501.4 464.3L546.2 499.4M543.7 502.7L578.8 530.1M578.8 530.1L618.5 561.1M617.6 562.3L662 597M662 597L709.1 633.8M711.9 630.2L743.1 654.6M191.1 236.4L235.7 271.2M237.1 269.4L273.4 297.7M273.4 297.7L311.6 327.5M311.6 327.5L340.5 350.1M340.5 350.1L362.1 367M362.1 367L391.6 390.1M391.6 390.1L429.3 419.6M429.3 419.6L456.6 440.9M454.2 444L483.6 467M483.6 467L504.2 483.1M545.3 513.6L583.2 543.2M583.2 543.2L612.7 566.3M612.7 566.3L655.9 600M655.9 600L698 632.9M698.5 632.2L740.5 665M174.4 239.5L219.1 274.4M219.1 274.4L241.8 292.1M241.8 292.1L267.2 312M267.2 312L284.3 325.4M284.3 325.4L304.7 341.3M304.7 341.3L340.2 369M340.2 369L380.3 400.3M380.3 400.3L425.3 435.5M425.3 435.5L458.4 461.4M459.4 460.2L497.6 490.1M497.6 490.1L529.7 515.1M529.7 515.1L546 527.9M546 527.9L586.2 559.3M585.2 560.5L607 577.5M607 577.5L627.1 593.1M627.1 593.1L649.9 611M652.1 608.1L686.6 635.1M686.6 635.1L731.5 670.1M729.9 672.1L755.1 691.7M133.4 222L171 251.4M170.6 251.9L197 272.5M212.8 284.9L255.9 318.5M256.6 317.7L298.6 350.5M298.6 350.5L317.2 365.1M316.5 366L362.9 402.2M362.9 402.2L389.8 423.2M389.8 423.2L414.2 442.2M414.2 442.2L436.7 459.8M436.7 459.8L470.5 486.2M470.5 486.2L500.4 509.6M500.4 509.6L543.7 543.5M543.7 543.5L584.8 575.5M584.8 575.5L600.6 587.9M600.6 587.9L646.6 623.8M646.6 623.8L691.9 659.2M691.9 659.2L736.3 693.9M131.3 231.1L166.6 258.6M165.2 260.5L211.6 296.7M211.6 296.7L258 333M258 333L286.8 355.5M289.1 352.4L319.1 375.8M345.5 396.4L388.9 430.3M388.9 430.3L423.5 457.4M423.5 457.4L458.4 484.7M458.4 484.7L492 510.9M492 510.9L530.8 541.2M530.8 541.2L558.7 563M558.7 563L581.8 581M581.8 581L602.9 597.5M602.9 597.5L630.4 619M630.4 619L662.7 644.3M662.7 644.3L695.7 670.1M695.7 670.1L727.7 695M101.4 221.9L138.6 250.9M138.6 250.9L162.7 269.7M185.5 287.6L205.1 302.8M205.1 302.8L222.4 316.4M222.4 316.4L259.6 345.5M259.6 345.5L285.4 365.6M287.4 363.2L311.6 382.1M311.6 382.1L330.5 396.9M330.5 396.9L364.8 423.6M364.6 423.9L387.2 441.5M427 476.2L455.8 498.7M455.8 498.7L492.9 527.7M492.9 527.7L528.4 555.5M528.4 555.5L560.9 580.8M560.9 580.8L591.8 605M591.8 605L626.5 632.1M626.5 632.1L657.8 656.6M657.8 656.6L691.1 682.5M691.4 682.1L720.6 704.9M133.1 261.7L178 296.8M178 296.8L202 315.5M202 315.5L241.8 346.6M242.7 345.5L280.8 375.2M280.8 375.2L324.5 409.4M324.8 409L368.6 443.2M368.3 443.6L396.5 465.7M394 468.8L426.5 494.2M427.9 492.5L473 527.8M473 527.8L516.3 561.6M517.4 560.3L551.5 586.9M552.4 585.7L595.4 619.4M595.4 619.4L626 643.3M623.8 646L646.9 664.1M646.9 664.1L692.6 699.8M69.5 225.2L114.2 260.1M114.2 260.1L141.3 281.3M142.3 280.1L164.1 297.1M164.1 297.1L211.4 334M211.4 334L250.6 364.7M250.6 364.7L282.8 389.8M282.5 390.3L309.5 411.4M309.9 410.9L353.2 444.7M353.2 444.7L393.5 476.2M393.5 476.2L435.6 509.1M467.9 538.4L504.7 567.1M504.7 567.1L537.1 592.4M537.1 592.4L577.2 623.8M577.2 623.8L619.1 656.4M61.2 234.5L82.8 251.4M82.8 251.4L122.7 282.5M122.7 282.5L160.4 312M160.4 312L194 338.3M194 338.3L235 370.2M235 370.2L272.4 399.5M272.4 399.5L310.4 429.1M310.4 429.1L349.7 459.9M349.7 459.9L366.9 473.3M395 495.3L439.1 529.7M439.1 529.7L478.8 560.7M478.8 560.7L502.4 579.2M502.4 579.2L548.7 615.3M548.7 615.3L593 649.9M593 649.9L629.2 678.3M627.7 680.2L658.1 703.9M19 214.4L65.9 251.1M65.9 251.1L112.3 287.3M112.3 287.3L140.6 309.5M140.7 309.3L176.7 337.4M176.7 337.4L197.9 354M197.9 354L234.6 382.7M234.6 382.7L262.4 404.4M261.9 405.2L303.1 437.4M303.1 437.4L347.6 472.2M347.6 472.2L384.6 501.1M384.6 501.1L423.1 531.1M423.1 531.1L456.6 557.3M456.6 557.3L481.7 576.9M481.7 576.9L519.5 606.5M519.5 606.5L556.4 635.3M578.9 652.9L616.6 682.3M616.6 682.3L643.2 703.1M12.4 222.9L59.4 259.6M59.4 259.6L83.4 278.3M83.4 278.3L102.6 293.3M101.8 294.3L119.2 308M119.2 308L151.2 333M151.2 333L191.7 364.6M191.7 364.6L219.6 386.4M219.6 386.4L242.6 404.3M242.6 404.3L264.3 421.3M264.3 421.3L297.7 447.4M297.7 447.4L318.4 463.6M318.4 463.6L360.6 496.6M396.6 524.7L434.4 554.2M434.4 554.2L475 586M475 586L501.6 606.7M501.3 607.2L519.8 621.7M519.8 621.7L537.8 635.7M537.8 635.7L560.6 653.6M593 678.9L638.5 714.5M27.8 247.7L52.6 267.1M52.6 267.1L77.4 286.4M77.4 286.4L111.4 313M111.4 313L127.2 325.3M125.3 327.7L147 344.6M147 344.6L183 372.7M183 372.7L229.5 409M229.5 409L256.3 430M302.7 466.3L328.7 486.6M328.7 486.6L367.1 516.6M395.6 541.7L414 556M414 556L430.9 569.2M430.7 569.5L460.1 592.5M460.1 592.5L478.6 607M478.6 607L519.3 638.7M519.3 638.7L539.1 654.2M539.1 654.2L556.1 667.5M557.7 665.5L581.9 684.4M581.9 684.4L617.2 712M-3.5 243.2L35 273.3M35 273.3L73.9 303.7M73.9 303.7L96.8 321.6M138.1 357.2L179.7 389.7M179.7 389.7L213.7 416.3M213.7 416.3L242.5 438.8M242.5 438.8L280.9 468.8M280.9 468.8L318.2 497.9M318.2 497.9L350.6 523.2M353.1 519.9L384.1 544.1M384.1 544.1L400.1 556.6M400.3 556.4L420.4 572.1M420.4 572.1L466.6 608.2M466.6 608.2L504 637.4M504 637.4L528.4 656.5M525.7 659.9L557.7 684.9M559.2 682.8L598.9 713.8M-9.5 250.9L33 284M33 284L49.2 296.7M49.2 296.7L72.5 314.9M71.1 316.6L112 348.5M112 348.5L132.9 364.8M132.9 364.8L148.7 377.2M151.3 373.8L175.7 392.9M173 396.4L202.3 419.3M203.6 417.6L230.4 438.5M231.1 437.7L262.8 462.4M262.8 462.4L305 495.4M304 496.8L322.3 511.2M322.7 510.7L344.1 527.3M342.7 529.2L363 545M363 545L392.9 568.4M392.9 568.4L434.5 600.9M435.2 599.9L455.4 615.7M456.3 614.6L492.7 643.1M492.7 643.1L510.2 656.7M510.2 656.7L543.3 682.7M543.3 682.7L579.2 710.7M-14.4 257.2L16.9 281.7M16.9 281.7L53.3 310.1M53.3 310.1L71 324M71 324L115.3 358.6M115.3 358.6L159.1 392.8M176.1 406.1L218.6 439.3M218.8 439L261.1 472M262 470.8L284.3 488.2M284.3 488.2L328.1 522.4M327.2 523.5L347.4 539.3M372.9 563.7L415.7 597.2M415.7 597.2L460.1 631.9M460.1 631.9L493.7 658.2M493.7 658.2L528.5 685.3M528.8 684.8L568.4 715.8M-21.5 266.3L22.2 300.5M22.2 300.5L64.5 333.5M64.5 333.5L86.3 350.5M131.9 386.2L155.2 404.4M154.1 405.7L176.1 422.8M176.1 422.8L195.8 438.2M235.4 469.2L259.3 487.8M296.1 516.6L331.9 544.5M331.9 544.5L349.5 558.3M349.5 558.3L371.6 575.6M371.6 575.6L398.4 596.5M398.4 596.5L416 610.3M418.3 607.3L457.6 638.1M457.6 638.1L482.2 657.2M482.2 657.2L518.2 685.4M515.7 688.7L560.5 723.7M44.5 334.7L60.7 347.3M61.5 346.3L81.6 362M81.6 362L122 393.6M122 393.6L143.8 410.6M143.8 410.6L170 431.1M170 431.1L205.6 458.8M205.6 458.8L230.3 478.1M230.3 478.1L272.1 510.8M273.6 509L313.5 540.2M313.5 540.2L354.7 572.4M354.7 572.4L370.6 584.9M370.6 584.9L394.6 603.6M393.7 604.7L431 633.9M458.6 657.1L500.3 689.7M500.3 689.7L537 718.4M-12.9 301L30.1 334.7M33.2 330.8L75.9 364.2M75.9 364.2L113.8 393.8M113.8 393.8L134.3 409.8M176.6 446.9L200.8 465.8M200.8 465.8L224.9 484.6M224.9 484.6L266.2 516.9M266.2 516.9L307.5 549.1M307.5 549.1L352.5 584.3M352.5 584.3L377.7 604M377.7 604L420 637M420 637L452 662M452 662L471.9 677.5M473.5 675.4L520.1 711.8M0.7 320.6L26 340.4M26 340.4L66.2 371.7M66.2 371.7L87.4 388.4M87.4 388.4L127.9 420M149 436.5L165.4 449.3M165.4 449.3L203.2 478.8M203.2 478.8L248.3 514M249.7 512.2L275.9 532.6M275.9 532.6L309.8 559.1M306.7 563L330.2 581.3M332.7 578.1L352.8 593.8M352.8 593.8L386.5 620.2M387.1 619.5L419.1 644.5M419.1 644.5L446.5 665.9M444.1 668.9L479.9 696.8M-26.7 315.4L14.1 347.3M14.1 347.3L58 381.6M58 381.6L90.3 406.8M90.3 406.8L129.4 437.3M129.4 437.3L154.5 457M154.5 457L198.3 491.2M198.3 491.2L243.9 526.8M245.2 525.2L270.5 545M332.5 593.4L376.8 628.1M376.8 628.1L419.7 661.5M420.1 661L454 687.5M454 687.5L474 703M-7.3 344.2L30.3 373.6M31.6 371.8L72.4 403.7M72.4 403.7L93.3 420M93.3 420L116.9 438.4M116.9 438.4L139.2 455.9M139.2 455.9L184.2 491M184.2 491L206.5 508.5M206.5 508.5L229.8 526.6M229.3 527.2L258.3 549.9M259 549L274.9 561.4M273.4 563.4L317.1 597.6M317.1 597.6L345.6 619.8M345.6 619.8L363 633.4M364.1 632.1L390.3 652.5M390.3 652.5L412.3 669.8M412.3 669.8L443.8 694.3M1.4 363.6L45 397.7M41.4 402.3L65.8 421.3M65.8 421.3L112.9 458.1M112.9 458.1L143.9 482.3M143.9 482.3L187.9 516.7M189.7 514.5L234.9 549.8M234.9 549.8L256.8 566.9M256.8 566.9L290.6 593.3M290.6 593.3L320.3 616.5M320.3 616.5L349.9 639.7M349.9 639.7L393.5 673.7M393.5 673.7L430.5 702.6M2 378.9L20.9 393.7M20.9 393.7L59.3 423.7M59.3 423.7L79.7 439.6M80.5 438.5L114.4 464.9M114.4 464.9L158.4 499.3M158.4 499.3L184.3 519.5M184.3 519.5L200.5 532.2M234.4 562.7L256 579.6M256 579.6L293 608.5M293 608.5L337.6 643.3M337.6 643.3L374.9 672.5M374.9 672.5L419.9 707.7M-28.8 371.3L13.2 404.1M14.1 403L32.5 417.3M79.5 454L120.2 485.8M159.1 519.9L180.3 536.4M182.5 533.6L213.5 557.8M213.5 557.8L229.4 570.2M227.6 572.5L248.6 588.9M248.6 588.9L284.8 617.2M284.8 617.2L306.9 634.5M306.9 634.5L325.5 649M325.5 649L347.6 666.3M347.6 666.3L368.6 682.7M368.6 682.7L390.8 700M-18.8 392L10.9 415.1M11.9 413.9L59.1 450.7M59.1 450.7L91.7 476.2M91.7 476.2L120.6 498.8M120.6 498.8L164.5 533.1M164.5 533.1L187.2 550.9M186.3 552.1L202.5 564.7M202.5 564.7L218.7 577.3M218.7 577.3L249.4 601.3M250 600.5L276.7 621.4M276.7 621.4L299.4 639.2M299.4 639.2L315.6 651.8M315.6 651.8L359.5 686.1M359.5 686.1L396.2 714.8M3.3 424.6L33.5 448.1M33.5 448.1L68.7 475.7M68.7 475.7L94.4 495.8M94.4 495.8L131.7 524.9M131.7 524.9L156.9 544.6M156.9 544.6L184.9 566.5M221.9 593.8L241.3 609M241.7 608.4L274.6 634.1M274.6 634.1L308.5 660.5M308.5 660.5L329.1 676.6M330.8 674.5L362.2 699M0.2 434.6L17.9 448.5M18.1 448.3L60.8 481.6M60.8 481.6L83.2 499.2M83.2 499.2L127.4 533.7M127.4 533.7L157.3 557.1M157.6 556.7L190.5 582.4M190.5 582.4L222.8 607.7M249.5 628.5L276.1 649.3M276.1 649.3L311.3 676.8M-6.6 443.8L28.2 470.9M28.2 470.9L65 499.7M65 499.7L99.8 526.9M99.8 526.9L118.9 541.8M117.1 544.2L139.8 561.9M139.8 561.9L161.6 579M161.6 579L208.7 615.7M211.3 612.5L230.6 627.5M230.6 627.5L256.3 647.6M256.3 647.6L297.9 680.1M4.6 469.9L32.6 491.8M32.6 491.8L69.1 520.3M69.1 520.3L104.4 547.9M104.4 547.9L148.5 582.3M148.5 582.3L178.7 606M180 604.3L201.6 621.2M199.5 623.9L246.7 660.7M246.7 660.7L269 678.2M269 678.2L311.7 711.6M9.8 487.7L41.9 512.9M41.9 512.9L80 542.6M80 542.6L118.9 573M118.9 573L146.7 594.7M146.7 594.7L176.6 618M176.6 618L201.5 637.5M201.5 637.5L223.4 654.6M223.4 654.6L259.2 682.6M259.2 682.6L275.3 695.2M2 497.6L35.9 524M35.9 524L59.1 542.1M59.1 542.1L84.9 562.3M86.3 560.4L118.1 585.2M118.1 585.2L140.4 602.6M138.9 604.5L164.5 624.5M167.1 621.1L187.1 636.7M187.1 636.7L214.6 658.2M214.6 658.2L232.7 672.4M232.7 672.4L258.8 692.7M-10.7 495.2L18.4 517.8M18.4 517.8L65.3 554.5M65.3 554.5L90.7 574.3M90.8 574.2L130.7 605.3M130.7 605.3L171 636.8M171 636.7L197.2 657.2M197.2 657.2L229.9 682.7M229.9 682.7L262.1 707.8M-4 509.8L28.8 535.4M28.8 535.4L49.1 551.3M49.1 551.3L68.2 566.2M67.4 567.2L83.6 579.9M83.1 580.5L104.9 597.6M104.9 597.6L150.3 633M150.7 632.4L180 655.3M-23.5 507.4L18.5 540.3M18.5 540.3L52.6 566.9M52.6 566.9L85.1 592.3M85.1 592.3L126.5 624.6M126.4 624.6L165.8 655.4M165.8 655.4L211 690.7M-19.8 526.4L21.7 558.8M21.7 558.8L42.5 575.1M73.6 599.4L102 621.6M102 621.6L126.4 640.7M126.4 640.7L158.5 665.7M158.5 665.7L190.2 690.4M-15.3 546.5L17 571.7M17 571.7L38.7 588.6M38.7 588.6L78.2 619.5M78.2 619.5L124.5 655.7M125.4 654.5L149 672.9M149 672.9L168.3 688M-12.9 556.3L21.5 583.2M21.5 583.2L42 599.2M40.6 600.9L74.6 627.5M74.6 627.5L96.3 644.4M96.3 644.4L124.8 666.7M124.8 666.7L155.3 690.5M-8.1 572.6L19.8 594.4M17.8 596.9L58.9 629M58.9 629L101 661.9M102 660.6L145.2 694.4M-14 584.7L30.1 619.1M30.1 619.1L65.2 646.6M65.3 646.5L82.5 660M82.5 660L128.9 696.2M-0 606.5L34.1 633.2M34.1 633.2L71.7 662.6M71.7 662.6L92.8 679.1M92.8 679.1L112.1 694.1M3 628.6L41.3 658.5M41.8 657.9L67.2 677.8M67.2 677.8L100.8 704M2.4 641.3L34.4 666.3M35.8 664.5L58.8 682.4M58 683.4L91.4 709.5M-10 643L36.7 679.5M36.7 679.5L64.5 701.2M2.9 669.5L37.7 696.7M-19.3 672.6L26.2 708.1M-25.8 681.9L14.4 713.3M756.3 664.5L721.9 708.5M756.9 651.5L722.8 695.2M752.9 632.6L725.4 667.9M725.4 667.9L706 692.6M765.7 587.5L732.1 630.5M732.1 630.5L702.7 668.2M702.7 668.2L678 699.8M764.2 568.4L734.9 605.9M734.9 605.9L711.4 636M690.9 668.6L668.4 697.5M758.3 550.8L733.8 582.2M735.1 583.1L704.1 622.7M674.7 660.3L661.4 677.4M661.4 677.4L636.8 708.9M771.1 510.5L739.6 550.8M739.6 550.8L710.5 588.1M708.1 586.3L683 618.5M683 618.5L665.4 641M665.4 641L652.7 657.2M652.7 657.2L629.3 687.1M629.3 687.1L614.2 706.5M749.9 510.1L723.8 543.5M723.8 543.5L702.8 570.4M705.4 572.5L690.4 591.7M690.4 591.7L661.1 629.2M657.1 626L628.9 662M628.9 662L597.9 701.7M742.5 495.7L714.5 531.5M714.5 531.5L696.1 555M696.1 555L661.2 599.7M661.2 599.7L646.8 618.2M646.8 618.2L631.9 637.2M630.4 636.1L615 655.8M615 655.8L588.9 689.2M589.3 689.5L556 732.1M742.1 479L725.9 499.7M725.9 499.7L689.3 546.6M687.1 544.9L651.6 590.2M651.6 590.2L623.8 625.8M623.8 625.8L595 662.7M595 662.7L571.5 692.9M761.1 435L735.9 467.3M735.9 467.3L719.2 488.7M719.2 488.7L705.3 506.5M705.3 506.5L678.1 541.2M659.5 559.9L629.2 598.7M629.2 598.7L597.9 638.8M597.9 638.8L584.7 655.6M584.7 655.6L561.6 685.2M563.8 686.9L551 703.4M749.4 434.2L717.6 474.9M690.1 510.1L663 544.8M657.6 540.6L637.3 566.5M637.3 566.5L600.6 613.5M602.8 615.2L573.4 652.8M576.5 655.2L552.5 685.9M552.7 686.1L539.3 703.2M744.7 418.8L712.6 460M710.5 458.4L688.9 486.1M688.9 486.1L665.8 515.7M665.8 515.7L632.1 558.8M632.1 558.8L617.3 577.8M615.6 576.5L586.8 613.4M586.8 613.4L552.9 656.7M552.9 656.7L531.6 684M531.6 684L495.3 730.5M752 379.6L722.8 417M722.8 417L701.4 444.4M701.4 444.4L668 487.2M670 488.7L637.4 530.4M634.5 528.2L597.9 575.1M597.9 575.1L568.5 612.7M573.7 616.7L540 659.9M540 659.9L506.7 702.6M753.4 360.6L736.8 381.8M736.8 381.8L701.2 427.4M701.2 427.4L678.7 456.1M680.6 457.6L660.6 483.2M660.6 483.2L634.2 516.9M634.2 516.9L598 563.3M598 563.3L572.7 595.7M572.7 595.7L552.7 621.2M552.7 621.2L529.5 651M529.5 651L492.9 697.9M757.6 330.2L739.3 353.6M739.3 353.6L717.9 381M717.9 381L686.8 420.8M686.8 420.8L658.4 457.2M658.4 457.2L630.6 492.8M630.6 492.8L609.7 519.6M609.7 519.6L575.2 563.6M576.7 564.7L558.6 587.9M558.6 587.9L542.2 608.9M542.2 608.9L509.8 650.4M509.8 650.4L491 674.3M489.6 673.2L469.8 698.6M760.3 304.8L724.7 350.4M724.7 350.4L691.2 393.3M691.2 393.3L678.7 409.3M678.7 409.3L646.7 450.2M646.7 450.2L615.9 489.7M615.9 489.7L601.4 508.3M596.9 504.8L570.6 538.4M570.8 538.5L539.8 578.2M539.8 578.2L517.3 607.1M503.8 632.7L478.8 664.7M473.9 660.9L445.9 696.7M751.4 293.5L735.2 314.2M732 311.7L713 336.1M715.1 337.7L687.4 373.1M686.4 372.3L667.2 397M665.5 395.7L636.6 432.7M637.3 433.2L622.3 452.4M622.3 452.4L605.7 473.7M608.9 476.2L595.8 493M595.8 493L576.8 517.3M576.8 517.3L548.9 553M548.9 553L520.5 589.3M488.2 622.5L455 665M455 665L418.7 711.5M721.6 303L703.8 325.8M670.3 368.7L649.6 395.2M649.6 395.2L616.8 437.2M616.8 437.2L601.6 456.7M601.6 456.7L586.2 476.4M586.2 476.4L560.3 509.5M560.3 509.5L538.4 537.6M536.8 536.3L502.3 580.4M502.3 580.4L474.7 615.8M473.7 615L445.5 651M445.5 651L413.6 691.9M744.8 261.3L719.5 293.7M719.5 293.7L691.5 329.5M691.5 329.5L657.3 373.3M657.3 373.3L626.8 412.3M626.8 412.3L613.3 429.6M608.4 425.7L577.9 464.8M577.9 464.8L553 496.7M553 496.7L526.7 530.3M526.7 530.3L505.4 557.6M505.4 557.6L472.9 599.2M472.9 599.2L450.9 627.3M456 631.2L425.4 670.4M425.4 670.4L400.5 702.2M762 216.4L731.4 255.5M731.4 255.5L700 295.7M700 295.7L669.3 335M669.3 335L642.1 369.9M642.1 369.9L620.4 397.7M620.4 397.7L585.2 442.7M585.2 442.7L553.4 483.5M553.4 483.5L534.3 507.9M534.3 507.9L510.6 538.2M508.6 536.7L491.6 558.5M491.6 558.5L477.9 575.9M477.6 575.7L451.6 608.9M451.6 608.9L438.9 625.3M438.9 625.3L426.4 641.3M426.4 641.3L393.2 683.7M393.2 683.7L359.1 727.4M727.1 239.2L700.4 273.3M700.4 273.3L684.1 294.2M682.4 292.9L647.5 337.6M651.6 340.7L620.3 380.8M614.7 376.5L583.9 416M583.9 416L552.3 456.5M552.3 456.5L536 477.3M536 477.3L508 513.1M508 513.1L476.7 553.2M476.7 553.2L441.4 598.4M441.4 598.4L424.4 620.1M424.4 620.1L392.1 661.5M394.1 663L381.2 679.6M382.2 680.4L366.8 700.2M710.5 245.4L687.7 274.7M687.7 274.7L657.5 313.4M654.8 311.3L622 353.3M622 353.3L600.7 380.5M600.7 380.5L584.1 401.8M584.1 401.8L562.2 429.7M562.2 429.7L538.1 460.7M538.1 460.7L525.2 477.2M522.9 475.5L510.4 491.4M510.4 491.4L481.2 528.8M481.2 528.8L448.7 570.4M453 573.7L428.8 604.8M428.8 604.8L411.4 627.1M411.4 627.1L397.1 645.3M397.1 645.3L364 687.6M364 687.6L348.8 707.1M712.2 219.4L675.3 266.6M673.6 265.3L643.3 304M643.3 304L611 345.5M611 345.5L581.6 383.1M581.6 383.1L557.9 413.5M557.9 413.5L530.6 448.4M530.6 448.4L504.6 481.7M504.9 482L492.5 497.9M495.9 500.6L465.2 539.9M465.2 539.9L440.9 571M440.9 571L419.7 598.1M420.1 598.5L389.8 637.4M389.8 637.4L367.7 665.7M366.6 664.8L331 710.3M683.7 239.1L654.8 276.2M654.8 276.2L634.9 301.6M634.9 301.6L616.3 325.3M616.3 325.3L587.7 362M587.7 362L568.5 386.5M565.4 384.1L549.5 404.4M549.5 404.4L514.8 448.9M514.8 448.9L489.9 480.7M489.9 480.7L471.9 503.8M471.9 503.8L439 545.8M439 545.8L410.1 582.9M410.1 582.9L377.1 625M377.1 625L341.2 671.1M343.6 673L317.8 705.9M661.1 245.4L626.8 289.4M626.8 289.4L610.6 310.1M577.9 351.9L561.8 372.5M561.8 372.5L528.5 415.2M528.5 415.2L502.9 447.9M502.9 447.9L471.2 488.6M471.2 488.6L453.2 511.6M453.2 511.6L422.7 550.6M422.9 550.8L403.5 575.7M376.4 610.4L357 635.1M357 635.1L340 657M340 657L305.9 700.5M642.9 246.4L612.6 285.2M612.6 285.2L580.9 325.7M578.9 324.2L547.5 364.4M547.5 364.4L519.6 400.1M521.7 401.7L500 429.4M500 429.4L466.8 472M468.3 473.1L435.4 515.3M435.4 515.3L401.5 558.6M401.5 558.6L385.8 578.8M381.8 575.7L352 613.8M352 613.8L318.8 656.3M321.4 658.4L293.2 694.5M630.4 243.2L598.1 284.6M598.1 284.6L580.4 307.2M580.4 307.2L558.2 335.7M558.2 335.7L544.9 352.7M544.9 352.7L513 393.5M485.3 429L456.6 465.7M455.8 465.1L436.1 490.2M436.1 490.2L419.9 511M421.7 512.4L395.6 545.8M395.6 545.8L382.1 563M382.1 563L362 588.8M362 588.8L348.9 605.6M347.5 604.5L310.8 651.6M310.8 651.6L282.6 687.6M282.6 687.6L249.8 729.6M627.1 218.5L599.7 253.5M599.7 253.5L568.3 293.7M568.3 293.7L535 336.3M508.7 370L494.4 388.4M494.4 388.4L479.1 408M479.1 408L453.4 440.9M453.4 440.9L435.5 463.7M419.3 488.4L398.2 515.4M398.2 515.4L368.6 553.3M368.6 553.3L337.5 593.1M336.4 592.3L320.9 612.1M320.9 612.1L297.9 641.6M297.9 641.6L278.8 666.1M278.8 666.1L258.6 691.9M608.7 223.2L581.8 257.7M581.8 257.7L561.4 283.8M561.4 283.8L529.9 324.1M529.9 324.1L495.6 368M474.7 394.7L457.6 416.7M455.8 415.3L426.1 453.2M426.1 453.2L405 480.2M408.2 482.7L372.3 528.7M372.3 528.7L344.7 563.9M344.7 563.9L315.3 601.6M315.3 601.6L295.5 626.9M295.5 626.9L263.8 667.5M262.7 666.6L228.3 710.6M592 219.5L560.9 259.3M562.1 260.3L539.4 289.3M539.4 289.3L515.5 319.9M515.5 319.9L479.8 365.7M479.8 365.7L460 391M460 391L424.7 436.2M421.2 433.4L408.6 449.6M382.2 483.4L351.4 522.8M353.9 524.7L329.7 555.7M330.7 556.4L308.5 584.8M258.2 649.1L228.8 686.8M228.8 686.8L198.5 725.5M573.7 212.2L540.2 255M503.4 302.2L487.2 322.9M487.2 322.9L468.4 346.9M468.4 346.9L444.3 377.8M445.8 379.1L409 426.1M409 426.1L376.3 468M376.3 468L354.5 495.9M354.5 495.9L321 538.8M321 538.8L302.2 562.9M302.2 562.9L269.9 604.3M269.9 604.3L247.9 632.4M247.9 632.4L216.2 673M216.2 673L185 712.9M569.9 204.9L534.5 250.2M534.5 250.2L504.9 288.1M504.9 288.1L482.5 316.8M482.5 316.8L446.4 362.9M446.4 362.9L423.2 392.6M423.2 392.6L393.1 431.2M393.1 431.2L367.1 464.4M367.1 464.4L334.4 506.2M332.4 504.6L300.5 545.3M300.5 545.3L281.7 569.4M281.7 569.4L252.9 606.3M253.1 606.4L219.8 649.1M219.3 648.7L200.6 672.7M200.6 672.7L183.5 694.6M518.3 246.6L504.8 263.7M504.8 263.7L474.1 303.1M474.1 303.1L453.2 329.8M453.2 329.8L427.8 362.4M429 363.3L405.5 393.4M405.5 393.4L375 432.4M373.6 431.3L358.8 450.3M358.8 450.3L326.1 492.2M326.1 492.2L297.5 528.7M297.6 528.8L281.7 549.1M281.7 549.1L263.7 572.1M263.7 572.1L241.8 600.2M241.8 600.2L221.1 626.6M221.1 626.6L187.8 669.3M187.8 669.3L167.7 695M519.9 218.7L485.2 263.1M485.2 263.1L471.5 280.6M471.7 280.8L444.6 315.5M444.4 315.4L415.3 352.6M415.3 352.6L378.4 399.8M378.4 399.8L355.1 429.7M352.2 427.5L321 467.5M321 467.5L296.3 499.1M300.7 502.5L272.2 538.9M271.7 538.6L246.8 570.4M246.8 570.4L230.3 591.5M230.6 591.8L216.8 609.6M216.8 609.6L192.2 641M192.2 641L171.5 667.5M171.5 667.5L153.4 690.7M494.4 232.9L459.8 277.2M459.8 277.2L424 323.1M424 323.1L396.5 358.3M396.5 358.3L381 378.1M381.2 378.2L347.1 421.9M347.1 421.9L323.4 452.1M323.4 452.1L302.2 479.3M302.1 479.2L284.4 501.8M284.4 501.8L269.1 521.4M269.1 521.4L243.3 554.4M225 577.9L203.2 605.7M203.2 605.7L169.4 649M169.4 649L152.7 670.4M150.4 668.5L125.6 700.2M456.6 258.7L423.4 301.1M423.5 301.2L396.1 336.2M396.1 336.2L360.8 381.4M360.8 381.4L344.2 402.6M344.2 402.6L309.6 446.9M309.6 446.9L295.1 465.4M295.1 465.4L277.2 488.4M274.9 486.7L256.8 509.9M256.8 509.9L227.9 546.9M227.2 546.4L206.4 572.9M206.4 572.9L184.6 600.9M184.6 600.9L165.9 624.8M169.1 627.3L133.9 672.4M133.9 672.4L114.1 697.7M464 233.5L443.1 260.3M443.1 260.3L416.6 294.2M419 296L404.3 314.9M404.3 314.9L383.3 341.7M383.3 341.7L353.9 379.4M353.9 379.4L340.8 396.1M340.8 396.1L320.4 422.2M320.4 422.2L296.3 453.1M296.3 453.1L274 481.7M274 481.7L239.9 525.3M227 541.8L203.4 572M203 571.6L168.7 615.4M168.7 615.4L142.4 649.1M142.4 649.1L128.3 667.2M128.3 667.2L98.1 705.8M441.4 238.3L421.2 264.1M424.2 266.5L406.5 289.2M406.5 289.2L389.2 311.3M386 308.8L362.4 339.1M362.4 339.1L344.6 361.9M344.6 361.9L321.9 390.9M321.9 390.9L305.1 412.4M307.3 414.2L293.1 432.3M292.3 431.6L273.6 455.5M273.6 455.5L252.6 482.5M255.3 484.6L222.8 526.2M222.8 526.2L204.6 549.4M203.6 548.6L168.3 593.8M168.3 593.8L150.1 617.1M150.1 617.1L125.2 648.9M125.2 648.9L90.8 692.9M433.7 231L399.5 274.8M398.5 274L384.9 291.3M384.9 291.3L362.9 319.4M332.9 357.9L319.9 374.5M319.9 374.5L287.5 416M287 415.5L255.1 456.3M255.1 456.3L239.5 476.2M239.5 476.2L215.1 507.5M215.1 507.5L185.8 545.1M156.8 578.9L133.9 608.2M135.1 609.2L116.6 632.9M116.6 632.9L101.8 651.8M101.8 651.8L71.3 690.9M69 689L45.5 719M413.6 234.6L384.5 271.8M384.5 271.8L364.5 297.5M361.2 294.9L344.7 315.9M344.7 315.9L312.4 357.3M311.8 356.9L299.2 373M299.2 373L270.2 410.2M272.1 411.7L252.7 436.5M250.1 434.5L230.4 459.7M230.4 459.7L200.2 498.4M200.2 498.4L176.7 528.5M176.7 528.5L152.2 559.8M152.2 559.8L129.1 589.4M74 660L61.5 676M66.1 679.6L32.5 722.6M397.4 225.1L370.9 259M370.9 259L346.2 290.7M346.2 290.7L325.4 317.3M327.4 319L306.5 345.7M306.5 345.7L284.4 374.1M280.4 371L266.2 389.1M266.2 389.1L239 423.9M239 423.9L220.1 448M220.1 448L205.4 466.9M176.5 503.8L152.1 535.1M154.5 536.9L133.6 563.7M133.6 563.7L113.4 589.5M113.4 589.5L100.1 606.6M100.1 606.6L81 631.1M81 631.1L59.6 658.4M56.3 655.8L42 674M42 674L13.6 710.4M370.4 235.4L350 261.5M350 261.5L328.8 288.6M326.1 286.5L302 317.3M301.9 317.2L280 345.3M280 345.3L259.8 371.1M259.8 371.1L237 400.3M237 400.3L214.9 428.6M218.5 431.5L201.7 453M201.7 453L173.5 489.1M173.5 489.1L141.3 530.3M141 530L123.7 552.1M123.7 552.1L109.9 569.9M107.1 567.7L84.2 597M84.2 597L64.9 621.8M64.9 621.8L42.6 650.3M41.1 649.1L14.3 683.5M14.3 683.5L-6.6 710.2M349.6 237.4L325 268.8M325 268.8L309.4 288.8M309.4 288.8L292.3 310.8M292.3 310.8L256.2 356.9M253.1 354.5L218.6 398.6M218.6 398.6L186.4 439.8M186.4 439.8L156.6 478M156.6 478L130.6 511.3M131.9 512.3L97.4 556.6M97.4 556.6L72 589.1M73.2 590.1L56.8 611.1M56.8 611.1L39.8 632.9M37.7 631.3L8 669.4M331.3 241.5L298.6 283.3M299.2 283.7L267 325M264.1 322.7L234.6 360.4M234.6 360.4L207.6 395M207.6 395L188.7 419.2M188.8 419.2L159.5 456.6M159.5 456.6L146.1 473.8M144.9 472.9L117.4 508.1M117.4 508.1L86.4 547.9M86.4 547.9L59.6 582.1M59.6 582.1L26.5 624.5M26.5 624.5L-0.9 659.5M326.3 218.6L301 251M306.6 255.4L281.3 287.8M279.9 286.7L262.9 308.4M262.9 308.4L243.8 332.9M243.8 332.9L230.9 349.3M230.9 349.3L210.9 375M210.9 375L192.1 399.1M192.1 399.1L172.2 424.5M172.2 424.5L135.8 471.1M133.1 469L112.3 495.6M112.3 495.6L96.1 516.4M96.1 516.4L78 539.6M49.9 576.3L14.6 621.6M14.6 621.6L-5.4 647.1M298.4 241.4L285.5 257.9M285.5 257.9L267.2 281.2M267.2 281.2L251.5 301.4M247.3 298.1L233.7 315.4M204.4 352.8L182.6 380.8M146.4 427.2L125.7 453.7M125.7 453.7L99 487.8M99 487.8L75.7 517.6M75.7 517.6L55.4 543.6M53.9 542.4L23.3 581.6M23.3 581.6L10 598.6M286.8 236.1L263.4 266M259.1 262.7L226.1 305M226.1 305L202 335.9M202 335.9L166.3 381.5M166.3 381.5L131.2 426.4M131.2 426.4L104.9 460.1M104.9 460.1L78.2 494.3M78.2 494.3L55.9 522.9M61.9 527.6L48.9 544.2M48.9 544.2L17.9 583.8M17.9 583.8L1.9 604.3M282.3 209.2L251.9 248.1M253.5 249.3L217.6 295.2M217.6 295.2L202.6 314.4M202.6 314.4L177 347.1M178.2 348L159.8 371.6M160.4 372L123.9 418.8M122.7 417.8L96.7 451.1M61.8 495.8L44.1 518.5M44.1 518.5L28.8 538M28.8 538L6.4 566.7M244.2 233.3L215.3 270.3M215.3 270.3L192.2 299.9M192.2 299.9L169.8 328.6M169.8 328.6L155.2 347.3M155.2 347.3L126 384.6M127.3 385.5L107.1 411.4M105.5 410.1L80.8 441.7M60.3 473.1L35.4 504.9M11.3 543.1L-10.6 571.1M217.1 243L192.6 274.3M192.6 274.3L165.8 308.6M165.8 308.6L141.3 340.1M141.3 340.1L106.5 384.8M106.5 384.8L73.5 427M73.5 427L41.8 467.5M41.8 467.5L16.5 499.9M217.8 226.4L195.9 254.4M195.9 254.4L166.9 291.5M168.7 292.9L139.5 330.3M139.5 330.3L114.4 362.4M114.4 362.4L85.5 399.4M65.2 425.4L36.2 462.6M36.2 462.6L12.5 493M12.9 493.3L-19.3 534.5M193.1 237.9L159.7 280.7M141 304.6L118.8 333M117.7 332.1L93.3 363.3M93.3 363.3L75.3 386.4M75.3 386.4L54.8 412.6M60.4 417L44.5 437.4M44.5 437.4L15.8 474.1M13.9 472.6L-21.8 518.4M175.5 243.5L146.2 281M146.2 281L115.8 319.9M115.8 319.9L93.7 348.2M93.7 348.2L80.7 364.9M80.7 364.9L65.7 384.1M65.7 384.1L31.6 427.7M31.6 427.7L-1.8 470.5M157.5 238.5L142.1 258.2M142.1 258.2L110.4 298.8M110.4 298.8L94.4 319.3M69.3 355.4L36.9 396.8M36.9 396.8L21.3 416.8M17 413.4L-10.2 448.2M105.3 277.9L78.3 312.5M78.3 312.5L56.7 340.1M56.7 340.1L33.7 369.4M33.7 369.4L9.9 399.9M129.8 232.6L101.7 268.5M102.4 269L81.4 295.9M81.4 295.9L56.8 327.4M56.8 327.4L25.3 367.7M25.3 367.7L-0.4 400.6M104.1 242.3L77.4 276.5M77.4 276.5L47.3 315M45.4 313.5L17.5 349.2M19.1 350.4L-15.5 394.7M85.5 243.5L72.7 259.9M72.7 259.9L43.6 297.1M43.6 297.1L29.1 315.8M29.1 315.8L13.4 335.8M13.4 335.8L-10.2 366.1M86.4 219.3L58.1 255.6M63.9 260.1L39.4 291.6M39.4 291.6L21.2 314.7M21.2 314.7L7.7 332M72.6 229L40.7 269.8M40.7 269.8L14.8 302.9M10.5 299.5L-22.1 341.1M39.9 235.9L27 252.4M27 252.4L-2.7 290.4M31 228.5L12.4 252.3M12.4 252.3L0 268.1M19.9 223.7L-7.5 258.8" fill="none" stroke="#ffffff" stroke-width="2.0"/></g>
<path d="M598 300L606.8 330L613 350.5L625.2 375L641.6 391.4L660 399.6L690.7 402.7L717.4 401.7L736 393L756.5 382.5L787.2 379.1L813.8 389.4L832.2 411.9L842.5 436.5L848.6 461L850.7 485.6L852.5 510L863 526.4L883.4 538.7L910 551L936.7 565.3L957.1 581.7L971.5 602L981.7 624.7L992 642L1010 661.7L1042.4 690L1073.1 714.6L1103.9 739.1L1134.6 759.6L1165.3 776L1196 790.3L1228 803L1221 803L1221 247L598 247Z" fill="#dfdad5" />
<g clip-path="url(#c3)"><path filter="url(#warp)" d="M570.8 262.4L600.3 246.7M505.7 326.6L601.7 275.6M601.6 275.4L650.6 249.3M640.8 268L728 221.6M579.2 320.2L622.1 297.5M665.8 274.2L705.4 253.1M705.4 253.1L747.6 230.7M549.4 353.3L611.3 320.3M610.7 319.2L649.2 298.7M649.2 298.7L724 258.9M724 258.9L807.6 214.5M587.7 342L622.3 323.6M622.3 323.6L664.1 301.4M664.1 301.4L714.7 274.5M714.7 274.5L779.1 240.3M543.5 380.5L609.3 345.5M608.6 344.2L668.1 312.6M668.1 312.6L744.5 272M576.6 375.8L664.1 329.2M665 330.9L693.4 315.8M693.4 315.8L757.5 281.7M757.5 281.7L825 245.8M582.6 389.1L657.4 349.4M658.8 352.1L691.5 334.7M689.4 330.8L778.3 283.6M778.3 283.6L808.3 267.6M556.4 415.1L617.5 382.6M619.6 386.5L651.6 369.5M651.6 369.5L704.4 341.4M704.4 341.4L780.7 300.8M779.5 298.6L827.1 273.3M827.1 273.3L908.8 229.9M594.2 414.7L638 391.4M638 391.4L696.5 360.3M696.5 360.3L752.5 330.5M754.1 333.6L786.1 316.6M786.1 316.6L819.6 298.8M819.6 298.8L856.6 279.1M856.6 279.1L937 236.4M595.4 428.4L621.9 414.3M621.9 414.3L669.5 389.1M669.5 389.1L699.1 373.3M764.5 338.5L817.7 310.2M817.7 310.2L878.1 278.1M879.5 280.7L963.2 236.2M542.9 464.5L609.6 429M609.6 429L640.7 412.5M640.7 412.5L735.4 362.2M735.4 362.2L769.2 344.2M769.2 344.2L821 316.6M822.4 319.1L865.2 296.4M865.2 296.4L948.3 252.2M569.2 464.1L644.1 424.3M644.1 424.3L687.9 401M687.9 401L724.8 381.4M724.8 381.4L771.1 356.8M854.8 315L949.9 264.5M949.9 264.5L1031.6 221M564.5 485.4L626.3 452.5M625.8 451.7L675.3 425.4M675.3 425.4L757.5 381.7M824.7 346.8L890.9 311.7M970.9 269.1L1016.6 244.8M566.4 497.9L634.9 461.5M669.6 443L753.6 398.4M753.6 398.4L829.1 358.2M829.1 358.2L911.2 314.6M954.5 297.6L1050.9 246.4M538.7 531.4L615.3 490.7M615.3 490.7L679.3 456.7M679.3 456.7L727.9 430.8M729.4 433.6L780.1 406.7M778.5 403.7L809.9 387M809.9 387L845.6 368M845.6 368L875.4 352.2M875.4 352.2L955.8 309.4M955.8 309.4L1022.2 274.1M1022.2 274.1L1086.7 239.8M584.2 517L644.3 485M644.3 485L693.1 459.1M757.8 424.7L841 380.5M842.6 383.6L878.9 364.3M877.3 361.1L940.1 327.7M940.1 327.7L1018 286.3M1018 286.3L1106.5 239.3M620.1 519.3L714.7 469.1M714.7 469.1L795.3 426.2M884.3 378.3L938.3 349.6M938.9 350.7L1031.8 301.3M1031.8 301.3L1105.6 262M1105.6 262L1166 229.9M562.8 561.1L609.2 536.3M609.2 536.3L665.5 506.4M665.5 506.4L743.9 464.7M743.9 464.7L829.1 419.4M829.1 419.4L916.2 373.2M916.2 373.2L973.6 342.6M973.1 341.6L1043.9 304M1043.9 304L1120 263.5M579.7 565.1L665.3 519.5M665.3 519.5L733.3 483.4M731.3 479.6L805.9 440M805.9 440L884.8 398M884.8 398L978.3 348.3M1041.4 314.7L1111.3 277.6M1111.3 277.6L1169.6 246.6M593.6 569.8L639.9 545.3M639.9 545.3L680.8 523.5M680.8 523.5L747.4 488M747.4 488L838.6 439.5M838.6 439.5L866.4 424.8M866.4 424.8L900.7 406.5M900.1 405.5L960.3 373.5M960.3 373.5L987.8 358.9M987.8 358.9L1069.7 315.3M1121.2 294.2L1173.4 266.4M1173.4 266.4L1238.6 231.8M589.5 589.7L648 558.6M648 558.6L705.8 527.9M705.8 527.9L765.2 496.3M765.2 496.3L852.7 449.7M852.7 449.7L883.3 433.5M883.3 433.5L911.7 418.4M981.1 381.5L1054.2 342.6M1054.2 342.6L1136.7 298.7M1134.7 294.9L1198.4 261M1198.4 261L1241.8 237.9M671.6 554.2L768.6 502.7M769.4 504.2L866.1 452.8M866.1 452.8L910.5 429.2M910.5 429.2L983.5 390.3M983.5 390.3L1073.4 342.6M1073.4 342.6L1108.6 323.9M1108.1 323L1145.4 303.2M1145.4 303.2L1173.3 288.3M1173.3 288.3L1235.7 255.2M597.9 611.6L693.6 560.7M693.4 560.3L759.7 525M759.7 525L801.3 502.9M801.3 502.9L875 463.7M875 463.7L924 437.7M923.7 437.1L954.2 420.8M956 424.2L1024.9 387.5M1024.9 387.5L1064.2 366.6M1064.2 366.6L1121.5 336.1M1121.5 336.1L1154.7 318.5M1153 315.3L1244.9 266.4M581.1 631.5L644.9 597.5M644.9 597.5L674 582.1M715.9 558.4L775.1 526.9M805.4 512.7L874.1 476.2M874.1 476.2L929.8 446.6M929.8 446.6L968.4 426M968.4 426L1055.7 379.6M1123.5 343.6L1195.9 305M556.6 660.7L626.5 623.6M627.4 625.3L704.2 584.5M704.2 584.5L739.4 565.8M739.4 565.8L825.6 520M825.6 520L872.1 495.2M872.1 495.2L918 470.8M918 470.8L985.8 434.8M985.8 434.8L1030.3 411.1M1029.3 409.2L1099.3 372M1173.1 336.9L1209.4 317.6M550.3 680.7L638 634.1M636.3 630.9L703 595.5M703.3 596.1L762.7 564.5M765.5 569.7L831 534.9M831 534.9L884.1 506.6M884.1 506.6L962.7 464.8M960.9 461.3L991.8 444.9M992.1 445.3L1070.3 403.7M1069.5 402.1L1125.1 372.5M1125.1 372.5L1166.9 350.2M1166.9 350.2L1209.7 327.5M1209.7 327.5L1247.7 307.3M564.6 688.2L645.2 645.3M683.6 626.2L737.5 597.5M820.3 549.1L903.8 504.7M903.8 504.7L949.6 480.4M952.6 486L1045.7 436.5M1045.7 436.5L1104.5 405.2M1104.5 405.2L1193.7 357.7M1193.7 357.7L1233.8 336.5M561.5 705.8L657.8 654.6M657.8 654.6L717.5 622.9M717.5 622.9L773.6 593.1M773.6 593.1L818 569.5M818 569.5L883.4 534.7M883.4 534.7L974.9 486M534 737.9L623.7 690.1M623.2 689.2L703.4 646.6M703.4 646.6L778 606.9M779.4 609.5L839.1 577.8M839.1 577.8L904 543.3M904 543.3L980.1 502.8M980.1 502.8L1060.8 459.9M1061.4 461.2L1119.8 430.2M1119.8 430.2L1158.5 409.6M1157.6 407.8L1239.2 364.4M652.6 689.8L730.5 648.4M730.5 648.4L796.5 613.3M796.5 613.3L890.1 563.5M890.1 563.5L975.1 518.4M975.1 518.4L1008.8 500.4M1089 461.2L1165.1 420.7M1163 416.8L1217.3 387.9M546.3 761L618.2 722.8M679.1 691.3L712.1 673.7M712.1 673.7L756.5 650.1M756.5 650.1L808.2 622.6M808.2 622.6L855.2 597.6M854.8 596.9L910.1 567.5M945 549L998.2 520.7M998.2 520.7L1049.2 493.6M1047.4 490.2L1103.4 460.5M552.7 773.1L620.2 737.2M620.7 738.1L689.9 701.3M689.9 701.3L751.1 668.8M751.1 668.8L794.3 645.8M794.3 645.8L841.8 620.5M841.8 620.5L931.5 572.8M931.5 572.8L983 545.4M983 545.4L1073.7 497.2M1073.7 497.2L1143.5 460.1M1143.1 459.5L1173.9 443.1M587.4 772.9L627.5 751.6M627.5 751.6L659.5 734.6M738.7 689.8L833 639.7M833 639.8L866.9 621.7M866.9 621.7L942.5 581.6M942.5 581.6L1021.4 539.6M1021.4 539.6L1054.1 522.2M1054.1 522.2L1081.6 507.6M1081.6 507.6L1154.2 469M1154.2 469L1226.7 430.4M565.4 796.9L659.9 746.6M658.4 743.8L724.8 708.5M726.4 711.3L818.5 662.3M818.5 662.3L868.6 635.7M868.6 635.7L936.5 599.6M936.5 599.6L1001 565.3M1001 565.3L1034.2 547.6M1034.2 547.6L1065.4 531.1M1066.1 532.5L1094.2 517.6M1094.2 517.6L1127.9 499.6M1127.9 499.6L1196.5 463.2M1195.1 460.6L1263.2 424.4M571.2 807.9L601 792.1M599.7 789.8L647.9 764.2M647.9 764.2L703.6 734.5M703.6 734.5L782.2 692.7M782.2 692.7L811.3 677.3M811.3 677.3L871.5 645.3M871.5 645.3L953.8 601.5M1001.8 581.1L1091.2 533.5M1157.9 498.1L1204.5 473.3M1202.5 469.5L1247.7 445.5M578.2 821L631.1 792.9M631.1 792.9L717 747.2M758.8 725L796 705.2M795.8 704.9L868 666.5M868 666.5L936 630.3M993.5 597.6L1022 582.4M1022 582.4L1051.7 566.6M1051.7 566.6L1141.8 518.7M1141.8 518.7L1234.4 469.4M795.1 720.2L885.5 672.2M885.5 672.2L961.9 631.6M1022.9 599.1L1050.7 584.3M1090.2 566.7L1156.6 531.4M1156.6 531.4L1210.1 503M1210.1 503L1275.2 468.3M636.9 820L716.6 777.6M716.6 777.6L767.7 750.5M767.7 750.5L807.6 729.3M807.6 729.3L861.8 700.4M861.8 700.4L913.1 673.2M913.1 673.2L957.9 649.3M958.5 650.4L989.9 633.7M990.6 635L1072.3 591.6M1072.3 591.6L1125.4 563.4M1125.4 563.4L1151.9 549.3M1151.9 549.3L1200.1 523.7M631.2 835.2L722.7 786.6M722.7 786.6L809.1 740.6M879.8 699.5L961 656.3M963.9 661.7L1000.9 642M1000.9 642L1082.6 598.6M1082.6 598.6L1161.2 556.7M1161.2 556.7L1240.4 514.7M675.3 828.2L731.2 798.5M777.4 772.6L833.5 742.8M835.7 746.9L921.3 701.4M996.2 655.2L1061.1 620.7M1113.2 594.2L1146.2 576.6M1146.2 576.6L1206.7 544.5M1206.7 544.5L1292.5 498.9M703.9 826.5L797.2 776.9M797.2 776.9L827.8 760.6M827.8 760.6L922.1 710.5M922.1 710.5L990.6 674M990.6 674L1050.2 642.4M1050.2 642.4L1110 610.6M1168 579.7L1210.5 557.1M1211.4 558.8L1264.3 530.7M682.1 853.3L772.5 805.2M772.5 805.2L818.2 780.9M818.2 780.9L878.9 748.6M877.2 745.3L966.9 697.6M966.9 697.6L1050.2 653.3M1050.9 654.5L1127.5 613.7M1127.5 613.7L1182.6 584.5M1182.6 584.5L1234.2 557M780.5 815.8L820.2 794.7M820.2 794.7L846.9 780.4M846.9 780.4L892.5 756.2M892.5 756.2L952 724.6M952 724.6L1041 677.3M1041 677.3L1131.6 629.1M1133.1 631.8L1183.1 605.2M1183.1 605.2L1265.5 561.4M802.7 819.3L845.4 796.6M846.1 798L905.4 766.5M905.4 766.5L1000.9 715.7M999.5 713.1L1036.2 693.6M1036.2 693.6L1067 677.2M1067.7 678.6L1153.3 633.1M1153.3 633.1L1208 604M1208 604L1300.7 554.8M825.5 819.4L916.7 770.9M916.7 770.9L974.2 740.3M974.2 740.3L1036.9 706.9M1036.9 706.9L1116.8 664.5M1116.8 664.5L1184.4 628.5M1184.4 628.5L1273.2 581.3M874 810.3L900.9 796M900.9 796L982.3 752.7M1078.6 701.5L1148.3 664.4M1148.3 664.4L1229.8 621.1M962.6 773.5L1014.3 746M1014.3 746L1089.2 706.2M1089.2 706.2L1168.6 664M1199.7 647.4L1249.9 620.8M908.2 815.7L956.2 790.2M956.2 790.2L1024.2 754.1M1024.2 754.1L1055 737.7M1055 737.7L1121 702.6M1121 702.6L1205.9 657.4M1205.9 657.4L1244.6 636.8M918.5 828.8L974.7 799M974.7 799L1046.9 760.6M1046.9 760.6L1114.8 724.4M1114.8 724.4L1171.7 694.2M1171.7 694.2L1205.7 676.1M1205.7 676.1L1294 629.2M934.4 834.2L1015 791.3M1045.6 779.2L1078.6 761.6M1078.6 761.6L1108.7 745.6M1108.7 745.6L1194.7 699.9M1194.7 699.9L1264.2 662.9M996.7 819.2L1054.7 788.3M1054.7 788.3L1087.6 770.8M1087.6 770.8L1119.8 753.7M1119.8 753.7L1196.3 713M1036.1 814.8L1114.9 772.9M1114.9 772.9L1173.5 741.7M1173 740.8L1228.5 711.3M1008.2 841L1102.3 791M1155 761.1L1214.3 729.6M1215.5 731.8L1303.9 684.8M1088.9 814.5L1127.6 793.9M1127.6 793.9L1222.4 743.5M1119.9 811L1204.9 765.8M1204.9 765.8L1277.9 727M1134.9 822.5L1186 795.3M1186 795.3L1231.1 771.3M1203.3 816.7L1252.8 790.4M1193.5 186.6L1244.6 282.7M1196.4 226.7L1219.5 270.2M1219.5 270.2L1255.7 338.1M1157.9 192.6L1201 273.7M1201 273.7L1225.4 319.6M1157 218.7L1177.4 257M1177.4 257L1199.9 299.4M1199.9 299.4L1221 338.9M1221 338.9L1255.3 403.4M1145.7 242.1L1167.3 282.7M1166.5 283.1L1204.8 355.3M1204.8 355.3L1256 451.5M1127.5 238.7L1166.2 311.4M1166.2 311.4L1213 399.4M1209.4 401.3L1230.2 440.5M1097.4 239.3L1142.1 323.3M1142.1 323.3L1169 374M1169 374L1187.9 409.6M1187.9 409.6L1204 439.8M1204 439.8L1226.2 481.6M1038.7 168.1L1084.8 254.9M1084.8 254.9L1122.3 325.2M1122.3 325.2L1163.2 402.3M1163.2 402.3L1179.2 432.3M1179.2 432.3L1227.8 523.8M1024.7 179L1072.1 268.1M1070.3 269L1100.8 326.3M1100.8 326.3L1140 400M1137.7 401.2L1171.5 464.7M1171.5 464.7L1210.6 538.2M1210.6 538.2L1251.8 615.8M993.5 154.5L1045.2 251.6M1040.3 254.1L1064.4 299.4M1064.4 299.4L1114.3 393.4M1114.3 393.4L1157.9 475.3M1166.2 471L1193.8 522.9M1188.9 525.5L1236.7 615.3M1008 224.1L1045 293.7M1045 293.7L1079.1 357.8M1079.1 357.8L1128.3 450.4M1124.8 452.3L1139.7 480.2M1139.7 480.2L1171.4 539.9M1171.4 539.9L1216.5 624.7M1216.5 624.7L1268.1 721.7M963.6 174.7L1003.1 249M1003.1 249L1035.9 310.7M1035.9 310.7L1063.3 362.2M1063.3 362.2L1085.8 404.5M1089.3 402.7L1120.5 461.3M1166.8 546.5L1181.4 574M1181.4 574L1223.5 653.2M1219.3 655.5L1268.8 748.7M971.2 228.8L1000.6 284.2M1000.6 284.2L1015 311.1M1015 311.1L1057.8 391.7M1057.8 391.7L1098.4 468.1M1098.4 468.1L1138.3 543.1M1138.3 543.1L1188.1 636.7M1188.1 636.7L1211.4 680.5M938.2 192.1L984.5 279.1M977.4 282.8L1009.4 342.9M1009.6 342.8L1027.6 376.9M1027.6 376.9L1050.8 420.4M1050.8 420.4L1094.3 502.3M1094.3 502.3L1113.7 538.6M1113.7 538.6L1149.6 606.1M1149.6 606.1L1183.2 669.4M1183.2 669.4L1222.6 743.5M911.6 197.1L955.7 280.1M955.7 280.1L974.4 315.2M974.4 315.2L1003.7 370.3M1003.7 370.3L1031.1 421.8M1031.1 421.8L1058.6 473.5M1058.6 473.5L1096.4 544.6M1096.4 544.6L1122.1 593M1128.9 589.4L1151.2 631.3M1151.2 631.3L1173.7 673.6M1208.9 739.8L1225 770.1M919.3 242.3L964 326.3M964 326.3L988.9 373.3M988.9 373.3L1033.7 457.5M1033.7 457.5L1051.4 490.7M1051.4 490.7L1090.1 563.4M1090.1 563.4L1132.9 643.9M1134.7 642.9L1181.3 730.6M1209.6 783.8L1239.4 839.9M888.9 229.4L927.2 301.5M929.6 300.2L980.3 395.5M996.3 433.7L1028.2 493.7M1028.2 493.7L1076.3 584.1M1080.3 582L1109.6 637M1110.5 636.5L1132.8 678.5M1132.8 678.5L1155.9 721.9M1155.9 721.9L1193.6 792.9M1190.5 794.5L1215.1 840.8M874.1 243.3L890.9 274.8M890.9 274.8L916.9 323.7M916.9 323.7L959.7 404.2M959.7 404.2L1003.6 486.8M1003.6 486.8L1047 568.3M1047 568.3L1097.1 662.7M1097.1 662.7L1114.2 694.8M1114.2 694.8L1143.8 750.4M1143.8 750.4L1160.6 782M1160.6 782L1202 859.8M842.5 229.1L877.7 295.3M875.8 296.3L924.3 387.5M924.9 387.2L945.2 425.4M945.2 425.4L973.5 478.7M973.5 478.7L987.6 505.2M987.6 505.2L1007.5 542.5M1007.5 542.5L1031.4 587.6M1031.4 587.6L1058.9 639.3M1062.4 637.4L1095 698.8M1126.3 758.2L1170.7 841.8M811.7 206.2L839 257.6M839 257.6L868.8 313.7M950 468.3L978.5 522M978.5 522L993.4 550M994.7 549.3L1023.2 602.9M1023.2 602.9L1066.8 685M1066.8 685L1083.3 716M1083.3 716L1113.5 772.8M1108 775.7L1143.1 841.7M815.7 252.3L850.9 318.4M850.9 318.4L873.1 360.2M868.4 362.6L900.5 422.8M899.3 423.5L941.2 502.3M941.2 502.3L980.3 575.8M980.3 575.8L1026 661.9M1026 661.9L1040.2 688.5M1038.9 689.2L1058.4 725.9M1061.9 724L1098.2 792.4M1098.2 792.4L1115 823.9M773.8 220.3L792.9 256.3M792.2 256.7L840.1 346.7M840.1 346.7L884 429.4M884 429.4L925.2 506.7M921.5 508.7L970.2 600.2M975 597.7L1002 648.5M1002 648.5L1039.1 718.3M1039.1 718.3L1060.8 759.2M1060.8 759.2L1084.7 804.1M757 231.1L786.7 287M786.7 287L834.2 376.3M834.2 376.3L878.4 459.4M878.4 459.4L894.7 490.1M894.7 490.1L919.6 536.9M919.6 536.9L958 609M958 609L985 659.8M985 659.8L1004.3 696.1M1004.9 695.7L1024.9 733.3M1021.6 735.1L1068.2 822.7M721.8 200.8L767.8 287.4M767.8 287.4L787.6 324.7M787.6 324.7L805.4 358.2M840.7 424.6L874.4 488M876.7 486.8L913 555.1M913 555.1L955.5 635M955.5 635L988.1 696.3M988.1 696.3L1037.9 790M1037.9 790L1086.2 880.8M719.4 238.3L749.1 294.2M805.2 409L855.4 503.5M855.4 503.5L888.3 565.3M888.3 565.3L927.8 639.5M932.5 636.9L965.6 699.1M986.4 752L1003 783.1M1009.5 779.7L1038.6 834.3M754.4 348.6L776.8 390.7M776.8 390.7L826.9 484.8M862.7 550.8L905.8 631.9M905.8 631.9L934.7 686.2M934.7 686.2L956.7 727.6M956.7 727.6L979.9 771.2M979.9 771.2L1018.5 843.9M679.4 232L706.6 283.2M706.6 283.2L756.1 376.3M756.1 376.3L788.3 436.8M788.3 436.8L834.1 523M834.1 523L851.4 555.4M851.4 555.4L902.6 651.9M897.7 654.5L914.9 686.8M914.9 686.8L956.3 764.6M956.3 764.6L996.4 840.2M654.6 231.6L698.9 314.9M698.9 314.9L747.5 406.2M790 486.2L836.5 573.7M875.4 637.7L906.4 696.1M906.4 696.1L920.8 723.3M913.1 727.4L951.6 799.7M951.6 799.7L976.1 845.9M661.3 286.5L703.2 365.2M702 365.9L734.1 426.2M767.5 489.1L803.3 556.4M809.3 553.3L843.7 617.9M843.7 617.9L866.4 660.6M865.4 661.1L883.3 694.6M883.3 694.6L919.3 762.4M919.3 762.4L936.4 794.6M595.8 208.5L631.3 275.2M631.3 275.2L680 366.8M680 366.8L726 453.4M726 453.4L751.7 501.6M754.9 499.9L778.5 544.3M778.5 544.3L824.3 630.4M817.8 633.8L838 671.9M836.7 672.6L874.8 744.3M579.3 217.2L601.5 258.9M606.3 256.4L647.3 333.5M668.4 390.3L694.7 439.7M692.4 440.9L723.7 499.7M723.8 499.6L746.6 542.5M784.4 613.7L827.9 695.5M827.9 695.5L844 725.8M844 725.8L866.9 768.8M873.7 765.1L894.4 804M595.8 282.2L646.3 377.2M646.3 377.2L670.2 422.1M670.2 422.1L700.3 478.6M700.3 478.6L747.3 567M748.6 566.3L798 659M799.1 658.4L844.9 744.4M844.9 744.4L866.1 784.3M863.6 785.6L879.8 816M590.7 310.1L613.3 352.5M609.5 354.5L652.5 435.4M652.5 435.4L678.9 485M749.4 617.6L795.6 704.4M795.6 704.4L841.7 791.2M841.7 791.2L862.6 830.5M565.9 307.8L608 387.1M608 387.1L636.3 440.3M636.3 440.3L683.7 529.4M683.7 529.4L718.6 595M718.6 595L762 676.7M762 676.7L786.8 723.3M788 722.6L837.1 815.1M578.6 364.2L610 423.3M610 423.3L651.8 502M651.8 502L683.2 560.9M683.2 560.9L720.3 630.8M720.3 630.8L760.4 706.2M760.4 706.2L797.1 775.3M797.1 775.3L846.1 867.3M560.9 382.1L611.2 476.6M614 475.1L651.7 546M651.7 546L694.4 626.3M694.4 626.3L723.7 681.4M740.5 721.2L786.6 807.9M786.6 807.9L815.8 862.9M608.2 509.8L653.2 594.5M653.2 594.5L701.4 685.2M701.4 685.2L745.5 768.1M745.5 768.1L768.4 811.2M583.5 498.4L616.8 561M635 592.7L682.4 681.9M682.4 681.9L731.5 774.3M731.5 774.3L758.3 824.6M570.9 521.1L607 589M654.6 660L706.2 757M706.2 757L735.7 812.6M573.6 558.1L622.9 650.8M622.9 650.8L668.6 736.7M700.6 785.5L748.2 875M581.4 612.1L624 692.3M624 692.3L650.9 742.8M650.9 742.8L668.7 776.3M668.6 776.4L699.4 834.2M564.6 619.7L599.3 684.9M599.3 684.9L625.2 733.7M630 731.1L672.2 810.6M567.9 671.2L608.8 748M608.8 748L651.3 828M597.1 752.9L629.2 813.3M572.5 750.1L615.7 831.4" fill="none" stroke="#ffffff" stroke-width="2.1"/></g>
<path d="M634.5 583L656 561.2L680 527L703.6 489L720 455L726 424L737 405L757.9 387.5L786.6 384.3L810.7 393.6L827.8 414.6L837.6 438.1L843.5 461.9L845.5 486L847.5 511.5L859.5 530.2L881 543.3L907.7 555.7L933.9 569.7L953.3 585.3L967 604.6L977.1 627.1L987.9 645.2L1012 660L1036.3 690L1048.6 702.3L1073.1 720.7L1095.7 737.1L1124.3 757.6L1155 776L1185.7 796.5L1187.8 801L1177.6 810.8L1155 812.9L1124.3 814.9L1095.7 825.1L1062.9 817L1032.2 810.8L986 805L944.8 803L926.4 825L914 850L731.7 848.7L691 765.4L725 765.4L723 700L718 657L690.7 637L645.7 608.3Z" fill="#d8d0c8" />
<g clip-path="url(#c4)"><path filter="url(#warp)" d="M1184.3 364.9L1252.6 418.2M1120.6 334.4L1194.1 391.8M1173.8 384.5L1235.6 432.8M1126.3 365.8L1197 421M1106 362.1L1150.6 397M1150.6 397L1176.2 417M1176.2 417L1201.1 436.4M1104.8 378.1L1130 397.8M1130 397.8L1186.2 441.7M1186.2 441.7L1246.8 489M1088.5 377.7L1125.5 406.6M1125.5 406.6L1206.6 469.9M1065.4 372L1111.9 408.4M1109.6 411.3L1153.5 445.6M1156.5 441.7L1189.3 467.3M1189.3 467.3L1275.1 534.3M1013.2 347.3L1058.2 382.4M1144.6 449.4L1170.3 469.4M1170.3 469.4L1195.5 489.1M984.4 344.4L1052.8 397.9M1083.8 421.3L1126.8 454.9M1173.3 490.2L1213.8 521.8M1060.2 419.9L1093.9 446.2M1095.6 444L1137.6 476.8M1137.6 476.8L1207.9 531.7M985.7 371.1L1014.1 393.3M1014.9 392.4L1040.1 412.1M1040.1 412.1L1092.4 452.9M1092.4 452.9L1129.1 481.7M1129.1 481.7L1177.5 519.5M1177.5 519.5L1241.3 569.3M948.8 354.9L993.1 389.5M1029.1 417.7L1113.1 483.3M1113.1 483.3L1170.1 527.8M1170.7 526.9L1232.2 575M952.4 372.5L979.2 393.5M979.2 393.5L1034.2 436.4M1062.5 458.6L1109.2 495.1M1109.2 495.1L1139.9 519.1M1139.9 519.1L1213.6 576.6M901.4 346.4L960.5 392.6M960.5 392.6L1040.5 455.1M1040.5 455.1L1095.3 497.9M1095.3 497.9L1154.2 544M1154.2 544L1218.7 594.3M962.2 411.9L1036.4 469.8M1038.1 467.6L1114.9 527.6M885.3 364.6L936.6 404.6M936.6 404.6L967.9 429.1M967.9 429.1L999.4 453.7M999.4 453.7L1063.1 503.5M1063.1 503.5L1103.1 534.8M1103.1 534.8L1167.1 584.7M873.5 369.7L900.7 391M900.7 391L939.9 421.6M963.6 440.1L1001.7 469.8M1001.7 469.8L1027.4 490M1025.9 491.9L1076.7 531.6M1076.7 531.6L1144.2 584.3M1146.5 581.4L1211.2 632M844.2 360.8L903.3 407M903.3 407L934.7 431.5M934.7 431.5L988.1 473.3M988.1 473.3L1024.4 501.6M1024.4 501.6L1074.8 541M1074.8 541L1114.5 572M1114.5 572L1141.2 592.8M1141.2 592.8L1200.7 639.4M809.9 346L891.1 409.4M891.1 409.4L961 464.1M1010.4 502.7L1051.6 534.9M1051.6 534.9L1117.4 586.3M1117.4 586.3L1185.9 639.8M1185.9 639.8L1250.4 690.2M874.2 410.8L900.7 431.5M900.7 431.5L958.7 476.8M958.7 476.8L1028.2 531.1M1028.2 531.1L1085.6 576M1085.6 576L1159.1 633.4M1161.6 630.1L1211 668.6M840.2 396.5L916.5 456.1M916.5 456.1L978.6 504.6M978.6 504.6L1058.7 567.3M1090.6 592.2L1120.1 615.3M1120.1 615.3L1203.4 680.4M848.7 418.9L883.7 446.3M881.9 448.6L966.7 514.9M968.7 512.4L1039.1 567.5M1039.1 567.5L1109.5 622.5M1109.5 622.5L1192.3 687.1M752 355.4L822.2 410.2M820.7 412.2L868.1 449.2M869.2 447.9L926.1 492.4M926.1 492.4L1008.6 556.9M1008.6 556.9L1047.4 587.1M1047.4 587.1L1084 615.8M1084 615.8L1154.8 671.1M1156.5 668.9L1214.2 713.9M761.3 377.5L787.3 397.8M787.3 397.8L869 461.6M869 461.6L921.4 502.5M921.4 502.5L945.8 521.6M945.4 522.2L1008.1 571.2M1008.1 571.2L1055.4 608.2M1055.4 608.2L1126 663.3M1126 663.3L1187 710.9M1187 710.9L1248.8 759.3M723.7 361.8L795.7 418M795.7 418L865.1 472.2M865.1 472.2L931.5 524.1M931.5 524.1L970.1 554.2M970.1 554.2L1007.5 583.5M1007.5 583.5L1090.9 648.7M1091.5 648L1120.1 670.3M1120.7 669.6L1189.8 723.6M710.4 366.2L797 433.8M797 433.8L880.7 499.2M880.7 499.2L907.8 520.4M988.9 583.8L1022.1 609.8M1066.6 643.8L1100.4 670.2M1100.4 670.2L1170.4 724.9M773.5 431.3L830.4 475.8M830.7 475.5L891.4 522.9M891.4 522.9L945.5 565.2M945.5 565.2L1009.8 615.4M1090.2 675.9L1150.1 722.7M667.8 364.7L703.7 392.8M703.7 392.8L742.5 423.1M742.5 423.1L766.5 441.8M766.5 441.8L796 464.9M796 464.9L826.5 488.7M826.5 488.7L869.9 522.7M869.3 523.5L921.5 564.2M954.8 591.5L999.1 626.1M1000.9 623.8L1063.5 672.6M1063.5 672.6L1138 730.9M1173.4 757.3L1234.1 804.7M701.8 405.4L754.3 446.4M816.7 495.2L890.8 553.1M890.8 553.1L972.2 616.7M972.2 616.7L1049.5 677.1M1049.5 677.1L1105 720.4M1105 720.4L1139.2 747.1M1141.2 744.5L1199.3 789.9M630.7 362.5L708.9 423.5M708.9 423.5L791.1 487.8M791.1 487.8L818.4 509.1M818.4 509.1L882.4 559.1M882.4 559.1L948.5 610.8M949.1 610L1000.3 650M1145.4 763.4L1223.2 824.2M624.2 370.9L709.2 437.3M708.1 438.7L769.3 486.6M769.3 486.6L814.5 521.9M814.5 521.9L871.5 566.4M871.5 566.4L895.4 585M895.4 585L943.8 622.9M946.6 619.3L1007.4 666.8M1007.4 666.8L1081.4 724.7M1081.4 724.7L1123.8 757.8M1120.4 762L1194.5 819.9M617.9 378.9L680.3 427.6M679 429.2L709.8 453.3M709.8 453.3L774.9 504.1M774.9 504.1L802.3 525.5M802.3 525.5L829.5 546.8M829.5 546.8L893.5 596.8M926.9 619.5L1008.6 683.2M1009.1 682.6L1082.8 740.1M1082.8 740.1L1137.1 782.6M1137.1 782.6L1179 815.3M1179.1 815.3L1205.6 836M611.5 387.1L649.7 417M685 444.5L762.4 505M762.4 505L788.1 525.1M788.7 524.3L818.3 547.4M818.3 547.4L888.1 602M888.1 602L942.4 644.4M1024.6 708.6L1089.7 759.5M1088.5 761L1156.7 814.3M1156.7 814.3L1202.8 850.3M605.4 394.9L652.8 431.9M653.9 430.5L711.1 475.3M711.1 475.3L788.5 535.7M788.5 535.7L837.2 573.8M837.2 573.8L879 606.4M879 606.4L918.9 637.6M918.9 637.6L952.7 664M952.7 664L995.2 697.2M995.2 697.2L1049.7 739.8M1048.6 741.2L1130.6 805.3M1130.6 805.3L1188.1 850.2M598 404.4L653.3 447.6M653.3 447.6L688.1 474.8M688.1 474.8L767.3 536.7M767.3 536.7L829.4 585.2M829.4 585.2L915 652M915 652L969.4 694.6M969.4 694.6L1022.5 736.1M1022.5 736.1L1065.5 769.7M1065.2 770.1L1100.8 797.9M1100.8 797.9L1155.9 840.9M1155.1 841.8L1188.8 868.1M590.7 413.7L635 448.4M635 448.4L668.8 474.7M668.8 474.7L705.6 503.5M705.6 503.5L788.8 568.5M788.8 568.5L851.1 617.1M851.1 617.1L900.7 655.9M900.7 655.9L975.1 714M975.1 714L1013.3 743.9M1013.3 743.9L1094.4 807.2M1094.4 807.2L1127.6 833.1M1127.6 833.1L1155.7 855.1M625.7 455.8L703.7 516.8M703.7 516.8L787.1 581.9M787.1 581.9L859.1 638.2M857.1 640.8L937.4 703.5M941.4 698.2L1017.7 757.8M1017.3 758.3L1079.5 806.9M1076.7 810.4L1114 839.5M1114 839.5L1174.3 886.6M604.8 453.2L648.7 487.5M648.7 487.5L717.5 541.2M717.5 541.2L753.9 569.7M753.6 570.1L779.6 590.4M778.8 591.6L824.6 627.3M827.1 624.1L909.7 688.6M909.7 688.6L979.6 743.2M979.6 743.2L1036.2 787.5M1035.6 788.2L1091 831.5M1090.5 832.2L1162.8 888.7M627.8 480.9L687.1 527.2M687.1 527.2L726.1 557.7M726.1 557.7L787.2 605.4M787.2 605.4L822.3 632.8M819.1 637L853.1 663.5M853.1 663.5L891.8 693.8M892.2 693.3L961.9 747.7M961.9 747.7L989.9 769.6M993.5 764.8L1076.1 829.4M1075.1 830.7L1126.1 870.5M625 493.2L694.8 547.7M694.8 547.7L752.3 592.7M752.3 592.7L828.9 652.5M863.1 676.1L924.4 723.9M975.7 764.1L1029 805.7M1064.9 833.7L1148.9 899.3M557.7 455.9L630.4 512.7M630.4 512.7L687.1 557M687.1 557L751.9 607.6M750 610.1L805 653.1M805 653.1L839.7 680.1M839.7 680.1L893.9 722.5M893.9 722.5L972.5 783.9M972.5 783.9L1025.2 825.1M582.5 491L653.2 546.1M772.7 639.5L843 694.5M843 694.5L910 746.8M910 746.8L980.5 801.9M980.5 801.9L1022.5 834.7M1022.5 834.7L1094.1 890.7M618.5 536.4L700.9 600.8M700.9 600.8L783.8 665.5M786.1 662.6L841.5 705.9M911.2 760.3L982.4 816M626.6 559.1L702 618M703.3 616.4L788.9 683.4M788.9 683.4L873.9 749.7M875.8 747.2L928 788M928 788L986.4 833.6M986.4 833.6L1061.2 892.1M597.7 546.4L646 584.1M646 584.1L705 630.2M764.4 676.6L841.3 736.7M841.3 736.7L865 755.3M865.6 754.5L948.7 819.4M948.7 819.4L1021.1 876M596.1 558.8L679.8 624.2M679.8 624.2L761.3 687.8M761.3 687.8L830.1 741.6M830.1 741.6L876.7 778M876.7 778L955 839.2M955.1 839.1L1021.5 891M613.7 587.7L672.6 633.7M672.6 633.7L704.4 658.5M704.4 658.5L736.3 683.5M736.3 683.5L764 705.1M764 705.1L821.8 750.3M821.8 750.3L864.9 783.9M864.9 783.9L949.8 850.2M616.9 602.9L642.6 622.9M642.6 622.9L668.7 643.3M668.7 643.3L752.4 708.8M750.4 711.4L784.4 738M786.4 735.4L848.9 784.2M848.9 784.2L889 815.5M889 815.5L923.8 842.7M923.8 842.7L972.2 880.5M588.8 592.9L654.2 644M758.4 728.6L801.8 762.4M801.7 762.5L853.2 802.8M853.2 802.8L880.3 824M880.3 824L909.9 847.1M909.9 847.1L985 905.7M607.8 622L685.1 682.4M685.1 682.4L762.6 742.9M762.6 742.9L835 799.5M835 799.5L902.1 851.9M613.6 643.1L688.1 701.3M688.1 701.3L746.3 746.8M746.3 746.8L819.3 803.8M844.4 823.4L912.4 876.5M638.2 676.9L686.5 714.7M686.5 714.7L717.6 739M717.6 739L752.7 766.4M752.7 766.4L791.2 796.5M791.5 796.1L877.4 863.2M615 672.5L655.6 704.2M653.7 706.6L680 727.2M680 727.2L728.6 765.1M787.7 811.3L831.1 845.2M831.1 845.2L904.4 902.4M592.9 671.3L645.1 712M643.2 714.4L699 757.9M701.5 754.6L760.2 800.5M629.2 717L699.1 771.6M699.1 771.6L727.7 794M727.7 794L813.3 860.8M625.2 727L682.1 771.4M682.1 771.4L766.1 837.1M766.1 837.1L832.2 888.7M571.5 707.3L635.8 757.6M635.8 757.6L717.9 821.7M719.7 819.4L788.6 873.2M611.7 750.7L689.2 811.2M616 769.4L654.1 799.2M654.1 799.2L723.7 853.6M623.4 787.7L692.8 841.9M692.8 841.9L770.3 902.5M617.4 797.3L668.8 837.5M668.8 837.5L747.7 899.1M575.5 778.2L631.4 821.9M630.2 823.5L660.8 847.3M660.8 847.3L693.1 872.6M602.8 815L659.3 859.2M599.9 832.1L669.5 886.4M562.7 812.1L631 865.5M1198.2 840L1174.3 870.5M1203.1 806.9L1172.9 845.6M1172.9 845.6L1113.3 921.8M1205.8 763.6L1146.6 839.3M1152.4 843.8L1117.7 888.2M1237.1 706L1182.8 775.5M1182.8 775.5L1126.7 847.3M1125.9 846.7L1104.9 873.6M1247.3 668.9L1180.1 754.9M1180.1 754.9L1158.8 782.2M1158.8 782.2L1105.1 850.8M1228.9 666.6L1175.4 735.1M1178.9 737.8L1159.1 763.2M1159.1 763.2L1131.5 798.4M1131.5 798.4L1106.3 830.8M1106.3 830.8L1042.5 912.4M1136.4 755.9L1071.5 839M1076.7 843L1017.6 918.7M1218.6 621.2L1182.8 667.1M1186.6 670.1L1126 747.7M1126 747.7L1104.6 775.2M1104.6 775.2L1043.1 853.9M1201.5 631.2L1139.7 710.2M1139.7 710.2L1080.8 785.6M1080.8 785.6L1032.2 847.9M1032.2 847.9L975.3 920.7M1220 581.8L1189.2 621.2M1189.2 621.2L1156.3 663.3M1156.3 663.3L1092 745.5M1064.3 770.9L1017.5 830.9M1017.5 830.9L961 903.1M1228.8 544.2L1182.9 603M1182.9 603L1161.9 629.9M1161.9 629.9L1123.8 678.5M1123.8 678.5L1079.7 735M1077.8 733.6L1023.8 802.7M1221.8 522.2L1179.9 575.8M1179.9 575.8L1141.5 625M1141.5 625L1080.1 703.5M1080.1 703.5L1017.9 783.2M1017.9 783.2L994.1 813.6M997.9 816.6L956.7 869.3M1194.1 531.4L1156.6 579.4M1156.6 579.4L1127.1 617.2M1082.6 667.1L1049.5 709.4M1049.5 709.4L1026.6 738.7M1026.6 738.7L978.3 800.6M978.3 800.6L925.6 868M1222.2 466L1185.5 513M1185.5 513L1134.2 578.7M1134.2 578.7L1110.2 609.3M1077.2 647.9L1029.7 708.6M1028 707.3L970.8 780.5M970.8 780.5L935.1 826.1M935.1 826.1L911.4 856.5M1203.4 467.9L1183.4 493.5M1183.4 493.5L1143.6 544.4M1143.6 544.4L1091.6 611M1091.6 611L1030.8 688.8M1030.8 688.8L990.7 740.2M990.7 740.2L963.1 775.4M963.1 775.4L896.7 860.4M1234.9 392.2L1189.5 450.3M1186.6 448L1149.3 495.7M1154.1 499.4L1098.9 570.2M1098.9 570.2L1048.4 634.8M1048.4 634.8L1020 671.1M1020 671.1L963.3 743.7M963.3 743.7L942.1 770.8M942.1 770.8L919.8 799.4M919.8 799.4L871.9 860.7M1223.6 383.4L1165 458.5M1165 458.5L1144.4 484.9M1140.7 482L1080 559.7M1080 559.7L1032.5 620.5M1032.5 620.5L968.8 702M968.8 702L938.3 741.1M938.3 741.1L906.3 782.1M906.3 782.1L841.2 865.3M1209.3 372.3L1164.1 430.2M1164.1 430.2L1134 468.8M1130.4 466L1073.5 538.9M1007 624.1L968.9 672.8M974.4 677.1L920.6 746M918.9 744.7L877.3 798M875.5 796.6L830.1 854.6M1194.9 361L1161 404.4M1161 404.4L1124.9 450.5M1122 448.2L1094 484.1M1094 484.1L1031.5 564.2M1031.5 564.2L994.7 611.3M995.4 611.9L959.6 657.7M959.6 657.7L913.3 717M913.3 717L883.6 755M883.6 755L864.8 779M864.8 779L842.6 807.5M1181.4 350.4L1152.1 387.8M1152.1 387.8L1102.6 451.3M1102.6 451.3L1049.1 519.6M1049.1 519.6L1024.6 551.1M1024.6 551.1L981.3 606.4M980.4 605.7L951.8 642.4M956.4 646L901 716.9M855.3 775.4L819 821.8M1086.8 445.7L1027.6 521.6M978.5 584.4L935 640.1M935 640.1L886.1 702.7M886.1 702.7L849.1 750M849.1 750L795.1 819.1M795.1 819.1L773.6 846.6M776.1 848.5L727.3 911M1117.9 379.5L1086.7 419.4M1086.7 419.4L1028.6 493.7M965.7 574.3L945.1 600.7M945.1 600.7L897.2 662.1M897.2 662.1L872 694.3M873 695.1L825.5 755.9M782.7 810.7L748.2 854.8M1115.3 355.8L1051.6 437.2M1051.6 437.2L1024.8 471.6M1024.8 471.6L995.4 509.2M995.4 509.2L938.4 582.2M938.4 582.2L879.4 657.7M814.3 739.8L771 795.2M768 792.8L738.4 830.6M738.4 830.6L712.7 863.6M1080.5 372.4L1034.7 431M1038.5 434L990.6 495.3M924.5 580L904.5 605.5M904.5 605.5L868.5 651.7M868.5 651.7L817.4 717M816.9 716.6L779.3 764.8M779.3 764.8L742.8 811.5M742.8 811.5L709 854.8M1064.7 378.8L1004.3 456.1M1003 455.1L952.3 520M952.3 520L925.6 554.1M925.6 554.1L901.9 584.5M901.9 584.5L847.3 654.4M846 653.5L807.7 702.5M805.8 701.1L739.3 786.2M739.3 786.2L700 836.6M700 836.6L655.9 893M1049.1 363.2L1003.7 421.3M917.9 531L860.6 604.3M860.6 604.3L835.9 635.9M835.9 635.9L802.4 678.8M802.4 678.8L765.4 726.1M765.4 726.1L709.2 798M709.2 798L687.1 826.3M1032.2 357.1L990.8 410.1M990.8 410.1L964 444.4M908.3 520.4L856.2 587.1M856.2 587.1L809.5 646.8M804.5 642.9L745.4 718.6M745.4 718.6L694.3 784M694.3 784L659.5 828.5M659.5 828.5L633.1 862.3M956.4 428.1L908.7 489.2M907.3 488.1L885.5 516.1M885.9 516.4L865.6 542.4M844.5 569.3L785.3 645.1M785.3 645.1L727 719.7M694.7 761.1L647.1 822M971.8 389.4L919.4 456.4M916.7 454.3L896.3 480.4M896.3 480.4L848.3 541.7M848.3 541.7L797.3 607.1M757.4 658.2L709.5 719.5M709.5 719.5L665.1 776.2M667.6 778.1L632.1 823.5M969.4 357.1L938.7 396.4M919.1 421.5L863.3 492.9M862.4 492.2L804.3 566.6M804.3 566.6L757.7 626.2M757.2 625.8L711 684.9M714.6 687.7L689.6 719.8M689.6 719.8L644.4 777.6M641.2 775.1L617.3 805.7M943.6 362.3L914.8 399.1M911.5 396.5L880.3 436.5M880.3 436.5L842.6 484.7M844.7 486.3L796.6 547.8M796.6 547.8L773.5 577.4M721.3 644.2L701.3 669.8M699.4 668.3L650 731.6M653.7 734.6L627.7 767.9M911.3 370.5L875.8 415.9M881 420L859.4 447.6M859.4 447.6L829.3 486.1M829.3 486.1L775.2 555.4M775.2 555.4L741.9 598M741.9 598L684.1 672M684.1 672L661.6 700.7M661.6 700.7L621.2 752.5M926.2 332.8L875.2 398.1M875.2 398.1L834 450.9M827.9 446.1L784.7 501.3M784.7 501.3L727.6 574.5M727.6 574.5L697.1 613.5M697.1 613.5L659.3 661.9M659.3 661.9L617 716.1M879 362.5L820.8 436.9M820.8 436.9L786.3 481.1M786.3 481.1L755.8 520.1M757.4 521.3L689.8 607.7M689.8 607.7L656 651M656 651L633.7 679.6M860.6 362.2L825.3 407.4M825.3 407.4L798 442.4M795.3 440.3L737.4 514.4M691.6 570.8L660.5 610.7M660.5 610.7L628.6 651.5M854.8 348L824.5 386.8M824.5 386.8L766.4 461.3M766.4 461.3L741.9 492.5M742.2 492.8L719.1 522.3M719.1 522.3L671 583.9M671 583.9L624.3 643.7M841.4 339L809.1 380.3M809.1 380.3L769.1 431.5M769.1 431.5L745.2 462.2M745.2 462.2L686.9 536.8M686.9 536.8L629.2 610.6M752.7 428L689.7 508.7M689.7 508.7L636.5 576.8M636.5 576.8L616.8 602M788 355.3L749.2 405M749.2 405L707.1 458.8M710.2 461.3L667.7 515.7M778.7 349.1L754.1 380.5M754.1 380.5L719.3 425.1M719.3 425.1L666.2 493M745.7 361.8L702.6 417M702.6 417L664.1 466.3M664.1 466.3L633.3 505.7M633.3 505.7L576.3 578.6M750.1 334.3L687 415.1M687 415.1L628.8 489.6M707.5 351.8L660.5 412M661.3 412.7L601.4 489.4M686.1 356.6L619 442.5M703.5 307.3L640.1 388.5M640.1 388.5L611.2 425.4M652.7 347.3L621.6 387.1M652.6 321.7L600.7 388.1" fill="none" stroke="#ffffff" stroke-width="2.1"/></g>
<path d="M962 702L1012 664L1036.3 690L1073 720.7L1124 757.6L1185.7 796.5L1177 810.8L1124 814.9L1095.7 825.1L1032 810.8L986 805L944.8 803L936 775L945 735Z" fill="#d9d2cb" />
<g clip-path="url(#c5)"><path filter="url(#warp)" d="M1115.2 608.8L1184.8 663.1M1184.8 663.1L1255.3 718.2M1143.5 658.6L1175.8 683.9M1177.9 681.2L1262.1 747M1080.3 641.5L1142.1 689.7M1140.7 691.6L1192.4 732M1047.2 645.3L1107.9 692.8M1109.4 690.8L1203.2 764.1M952.5 614.1L1021.9 668.3M1021.9 668.3L1060.6 698.6M1060.6 698.6L1150 768.5M1150 768.5L1196.7 804.9M939.2 631L1014.6 689.9M1010.5 695.2L1081 750.2M1085 745L1124.7 775.9M1124.7 775.9L1190 827M1190 827L1199.8 834.6M922.2 652.9L994.8 709.6M1056.9 764.8L1110.9 807M1110.9 807L1179.5 860.6M905.7 674L965.1 720.4M965.1 720.4L1036.7 776.4M1036.4 776.7L1093.6 821.4M1093.6 821.4L1166 877.9M924.1 725.9L957.8 752.2M957.8 752.2L1045.9 821M1045.9 821L1110.8 871.6M871.1 718.3L960.7 788.4M960.7 788.4L1002.4 820.9M1002.4 820.9L1055.1 862.1M915.6 775.8L988.5 832.8M927 827.4L971.1 861.8M870.2 810.8L941.8 866.7M1195.7 772.8L1164.6 812.6M1164.6 812.6L1113.9 877.5M1235.5 672.3L1172.6 752.9M1172.6 752.9L1133 803.5M1133.9 804.2L1108.1 837.1M1209.7 652.1L1173 699.2M1173 699.2L1101.8 790.3M1185.6 633.3L1147.2 682.6M1147.2 682.6L1098.9 744.3M1098.9 744.3L1045.2 813.1M1043.4 811.7L986.1 885M1159.2 612.7L1099.4 689.3M1099.4 689.3L1067 730.7M1067 730.7L1024.3 785.5M1024.3 785.5L964.2 862.3M1093.6 645.9L1026.7 731.6M1026.7 731.6L991.2 777M991.2 777L938.6 844.3M999.5 707.5L926.4 801.1M1043.2 596L973.7 684.9M973.7 684.9L905.5 772.2M984.9 611.3L922.6 691" fill="none" stroke="#ffffff" stroke-width="2.4"/></g>
<path d="M1040 722L1075 745L1120 775L1150 797L1118 803L1070 772L1035 747Z" fill="#b9b6b0" />
<rect x="975" y="730" width="26" height="14" fill="#cdc4bb" transform="rotate(38 988.0 737.0)"/>
<rect x="1000" y="760" width="30" height="16" fill="#cdc4bb" transform="rotate(38 1015.0 768.0)"/>
<rect x="960" y="765" width="22" height="14" fill="#cdc4bb" transform="rotate(38 971.0 772.0)"/>
<rect x="1040" y="780" width="28" height="12" fill="#cdc4bb" transform="rotate(30 1054.0 786.0)"/>
<rect x="1080" y="795" width="30" height="10" fill="#cdc4bb" transform="rotate(20 1095.0 800.0)"/>
<rect x="1010" y="720" width="18" height="12" fill="#cdc4bb" transform="rotate(38 1019.0 726.0)"/>
<rect x="985" y="785" width="24" height="12" fill="#cdc4bb" transform="rotate(38 997.0 791.0)"/>
<path d="M805 331L838 357L862 385L871 410L873 450L876 490L880 508L898 520L930 531L955 550L978 566L994 586L1002 608L999 629L1012 645L1035 668L1060 690L1100 722L1140 750L1180 772L1221 790L1221 503L1199 503L1157.7 499.7L1119.5 468L1094 430L1075 414L1030.6 366L1005 379L980 398L945 363L929 331Z" fill="#b0d0a0" />
<path d="M813 331L828 331L1221 652L1221 668Z" fill="#bcd8ab" />
<path d="M834.3 331L899.8 331L924.4 354.6L914.1 377.1L891.6 378.1L858.9 349.5L835.3 346.4Z" fill="#e6dcd6" stroke="#a9768f" stroke-width="2.2" stroke-opacity=".8"/>
<path d="M900 331L929 331L945 363L980 398L960 410L925 378L926 354Z" fill="#d9ecd0" />
<path d="M866 395L905 380L940 405L950 440L930 470L905 488L878 486L872 440Z" fill="#dff8e0" />
<rect x="887" y="391" width="14" height="10" fill="#a6dcc6" transform="rotate(25 894.0 396.0)"/>
<rect x="880" y="415" width="12" height="16" fill="#a6dcc6" transform="rotate(10 886.0 423.0)"/>
<rect x="895" y="428" width="14" height="14" fill="#a6dcc6" transform="rotate(10 902.0 435.0)"/>
<rect x="905" y="402" width="13" height="10" fill="#a6dcc6" transform="rotate(30 911.5 407.0)"/>
<rect x="915" y="440" width="18" height="14" fill="#a6dcc6" transform="rotate(30 924.0 447.0)"/>
<rect x="878" y="452" width="10" height="14" fill="#a6dcc6" transform="rotate(10 883.0 459.0)"/>
<rect x="903" y="470" width="24" height="9" fill="#a6dcc6" transform="rotate(-5 915.0 474.5)"/>
<rect x="925" y="420" width="10" height="12" fill="#a6dcc6" transform="rotate(30 930.0 426.0)"/>
<path d="M967 492C971.2 485.6 984 478.3 992.5 477.5C1001 476.7 1011.1 480.6 1018 487C1024.9 493.4 1031.7 506.1 1033.8 515.6C1035.9 525.1 1034.3 536.8 1030.6 544.2C1026.9 551.6 1018.9 559.5 1011.5 560C1004.1 560.5 993.4 554.8 986 547.4C978.6 540 970.2 524.8 967 515.6C963.8 506.4 962.8 498.4 967 492Z" fill="#daf2d5" />
<path d="M905 492C906.7 488 917.5 486.7 925 488C932.5 489.3 944.5 494.7 950 500C955.5 505.3 959.7 515.7 958 520C956.3 524.3 947.2 527.3 940 526C932.8 524.7 920.8 517.7 915 512C909.2 506.3 903.3 496 905 492Z" fill="#c9e3b8" />
<g transform="rotate(32 1030.6 426.6)"><ellipse cx="1030.6" cy="426.6" rx="33" ry="23" fill="#dff8e0"/><ellipse cx="1030.6" cy="426.6" rx="29" ry="19" fill="none" stroke="#a6dcc6" stroke-width="6"/></g>
<path d="M1003 395L1030 375L1062 410L1075 425L1066 452L1040 463L1020 455Z" fill="#dbe9cf" opacity=".6"/>
<g transform="rotate(32 1030.6 426.6)"><ellipse cx="1030.6" cy="426.6" rx="29" ry="19" fill="#dff8e0" stroke="#a6dcc6" stroke-width="6"/></g>
<path d="M1068 452C1072.2 445.3 1078.3 440 1085 440C1091.7 440 1102.5 446.2 1108 452C1113.5 457.8 1117.7 467 1118 475C1118.3 483 1114.7 493.8 1110 500C1105.3 506.2 1097 511.2 1090 512C1083 512.8 1073 510.3 1068 505C1063 499.7 1060 488.8 1060 480C1060 471.2 1063.8 458.7 1068 452Z" fill="#ecebea" />
<ellipse cx="1094" cy="476" rx="18" ry="17.5" fill="#cfc6be" transform="rotate(-15 1094 476)"/><ellipse cx="1094" cy="476" rx="11" ry="9.5" fill="#a6dcc6" transform="rotate(-15 1094 476)"/>
<path d="M1108 470L1135 455L1160 500L1165 545L1140 560L1118 520Z" fill="#dff8e0" />
<rect x="1112" y="470" width="11.5" height="11.500" fill="#a6dcc6" transform="rotate(28 1117.7 475.7)"/>
<rect x="1123.5" y="463.5" width="11.5" height="11.500" fill="#a6dcc6" transform="rotate(28 1129.2 469.2)"/>
<rect x="1120.5" y="484.5" width="11.5" height="11.500" fill="#a6dcc6" transform="rotate(28 1126.2 490.2)"/>
<rect x="1132" y="478" width="11.5" height="11.500" fill="#a6dcc6" transform="rotate(28 1137.7 483.7)"/>
<rect x="1143.5" y="471.5" width="11.5" height="11.500" fill="#a6dcc6" transform="rotate(28 1149.2 477.2)"/>
<rect x="1129" y="499" width="11.5" height="11.500" fill="#a6dcc6" transform="rotate(28 1134.7 504.7)"/>
<rect x="1140.5" y="492.5" width="11.5" height="11.500" fill="#a6dcc6" transform="rotate(28 1146.2 498.2)"/>
<rect x="1152" y="486" width="11.5" height="11.500" fill="#a6dcc6" transform="rotate(28 1157.7 491.7)"/>
<rect x="1137.5" y="513.5" width="11.5" height="11.500" fill="#a6dcc6" transform="rotate(28 1143.2 519.2)"/>
<rect x="1149" y="507" width="11.5" height="11.500" fill="#a6dcc6" transform="rotate(28 1154.7 512.7)"/>
<rect x="1160.5" y="500.5" width="11.5" height="11.500" fill="#a6dcc6" transform="rotate(28 1166.2 506.2)"/>
<rect x="1146" y="528" width="11.5" height="11.500" fill="#a6dcc6" transform="rotate(28 1151.7 533.7)"/>
<rect x="1157.5" y="521.5" width="11.5" height="11.500" fill="#a6dcc6" transform="rotate(28 1163.2 527.2)"/>
<rect x="1169" y="515" width="11.5" height="11.500" fill="#a6dcc6" transform="rotate(28 1174.7 520.7)"/>
<rect x="1154.5" y="542.5" width="11.5" height="11.500" fill="#a6dcc6" transform="rotate(28 1160.2 548.2)"/>
<rect x="1166" y="536" width="11.5" height="11.500" fill="#a6dcc6" transform="rotate(28 1171.7 541.7)"/>
<rect x="1177.5" y="529.5" width="11.5" height="11.500" fill="#a6dcc6" transform="rotate(28 1183.2 535.2)"/>
<path d="M1075 512L1118 520L1157 545L1140 572L1120 590L1098 570L1078 540Z" fill="#e1f7e0" />
<path d="M978 566L1040 566L1065 590L1080 640L1050 668L1030 660L1008 640L999 629L1002 608L994 586Z" fill="#d3e6c8" />
<path d="M1165 520L1221 512L1221 590L1190 600L1168 560Z" fill="#d3e6c8" />
<path d="M1090 730L1130 700L1221 745L1221 790L1180 772L1140 750Z" fill="#d5e6cb" />
<path d="M1120 575C1121.7 568.3 1146.7 561.2 1160 560C1173.3 558.8 1195 563 1200 568C1205 573 1198.3 584.7 1190 590C1181.7 595.3 1161.7 602.5 1150 600C1138.3 597.5 1118.3 581.7 1120 575Z" fill="#bfdcae" opacity=".8"/>
<path d="M1060 600C1062 593.3 1083.3 603.3 1090 610C1096.7 616.7 1102 633.3 1100 640C1098 646.7 1084.7 656.7 1078 650C1071.3 643.3 1058 606.7 1060 600Z" fill="#bfdcae" opacity=".8"/>
<path d="M1046 524C1047 527.5 1049.2 538.5 1052 545C1054.8 551.5 1055.6 555.4 1062.9 563.2C1070.2 571 1085.5 582.7 1095.7 591.9C1105.9 601.1 1114.4 612 1124.3 618.5C1134.2 625 1145.4 629.1 1155 630.8C1164.6 632.5 1173.4 631.9 1181.7 628.8C1190 625.7 1198 617.3 1205 612C1212 606.7 1220.8 599.5 1224 597" fill="none" stroke="#abd3de" stroke-width="6.5" stroke-linecap="round"/>
<ellipse cx="1066" cy="548" rx="4" ry="7" fill="#abd3de" transform="rotate(-20 1066 548)"/>
<ellipse cx="905.5" cy="421" rx="4" ry="5" fill="#abd3de"/>
<path d="M929 331L1073 331L1221 486L1221 503L1199 503L1157.7 499.7L1119.5 468L1094 430L1080 418L1072 440L1060 452L1045 405L1020 392L1000 402L985 410L968 408L945 385L930 370Z" fill="#e6dfd9" />
<rect x="944" y="333" width="26" height="16" fill="#d2c4b9" transform="rotate(0 957.0 341.0)"/>
<rect x="974" y="333" width="34" height="26" fill="#d2c4b9" transform="rotate(0 991.0 346.0)"/>
<rect x="958" y="354" width="26" height="18" fill="#d2c4b9" transform="rotate(40 971.0 363.0)"/>
<rect x="990" y="362" width="20" height="14" fill="#d2c4b9" transform="rotate(40 1000.0 369.0)"/>
<rect x="1012" y="336" width="28" height="18" fill="#d2c4b9" transform="rotate(45 1026.0 345.0)"/>
<rect x="1040" y="340" width="18" height="22" fill="#d2c4b9" transform="rotate(45 1049.0 351.0)"/>
<rect x="1058" y="352" width="16" height="22" fill="#d2c4b9" transform="rotate(45 1066.0 363.0)"/>
<rect x="1076" y="368" width="18" height="26" fill="#d2c4b9" transform="rotate(45 1085.0 381.0)"/>
<rect x="1096" y="390" width="22" height="34" fill="#d2c4b9" transform="rotate(45 1107.0 407.0)"/>
<rect x="1122" y="418" width="16" height="26" fill="#d2c4b9" transform="rotate(45 1130.0 431.0)"/>
<rect x="1142" y="436" width="16" height="22" fill="#d2c4b9" transform="rotate(45 1150.0 447.0)"/>
<rect x="1162" y="455" width="14" height="22" fill="#d2c4b9" transform="rotate(45 1169.0 466.0)"/>
<rect x="1085" y="425" width="20" height="14" fill="#d2c4b9" transform="rotate(45 1095.0 432.0)"/>
<rect x="1108" y="448" width="18" height="12" fill="#d2c4b9" transform="rotate(45 1117.0 454.0)"/>
<rect x="1180" y="476" width="14" height="18" fill="#d2c4b9" transform="rotate(45 1187.0 485.0)"/>
<path d="M1069.4 331L1112.4 378.2L1165.7 431.5L1206.6 472.5L1221 486.8L1221 331Z" fill="#abd3de" />
<path d="M1124.7 331C1128.9 334.5 1140.8 343 1150 352C1159.2 361 1168.2 372.3 1180 385C1191.8 397.7 1214.2 428 1221 428C1227.8 428 1226.2 396.7 1221 385C1215.8 373.3 1200.6 367 1190 358C1179.4 349 1162.9 335.5 1157.5 331" fill="#b7d6a9" />
<path d="M1200 331L1221 331L1221 352Z" fill="#e58fa0" />
<path d="M690 470L712 468L706 490L690 515L672 545L656 561L640 566L632 556L645 535L662 510L680 482Z" fill="#d6ecc9" />
<path d="M724 418C723.2 423.3 721.7 438.8 719 450C716.3 461.2 712.5 474.7 708 485C703.5 495.3 697.7 502.8 692 512C686.3 521.2 679.3 532.3 674 540C668.7 547.7 662.3 555 660 558" fill="none" stroke="#abd3de" stroke-width="2.5" />
<path d="M486 535L505 525L520 548L505 575L486 590Z" fill="#cdf3cf" />
<path d="M10 702L40 708L62 722L70 742L40 746L30 760L30 870L10 870Z" fill="#d3edc8" />
<path d="M10 772L30 786" fill="none" stroke="#f6cf9b" stroke-width="4" />
<path d="M10 790L30 800" fill="none" stroke="#abd3de" stroke-width="3" />
<path d="M558 583L600 592L606 606L570 612L552 600Z" fill="#cdf3cf" />
<path d="M629 600L645.7 609L690 638L722 660L724 762L689 765L660 700L634 640Z" fill="#d6eccb" />
<path d="M668 668L712 668L716 752L700 756L682 715Z" fill="#e0ecd0" />
<ellipse cx="688" cy="733" rx="3" ry="5.5" fill="#abd3de"/>
<path d="M722 660L750 674L752 760L724 762Z" fill="#cfe8c4" />
<path d="M691 766L736 763L790 770L822 782L838 800L822 830L800 849L731.7 849Z" fill="#c5efc6" />
<rect x="770" y="800" width="34" height="7" fill="#d8cfc6" opacity=".8" transform="rotate(-38 787.0 803.5)"/>
<rect x="780" y="812" width="34" height="7" fill="#d8cfc6" opacity=".8" transform="rotate(-38 797.0 815.5)"/>
<rect x="790" y="824" width="30" height="7" fill="#d8cfc6" opacity=".8" transform="rotate(-38 805.0 827.5)"/>
<rect x="756" y="826" width="20" height="6" fill="#d8cfc6" opacity=".8" transform="rotate(-38 766.0 829.0)"/>
<path d="M592 702L618 695L626 722L600 730Z" fill="#cdf3cf" />
<path d="M565 758L582 750L592 775L574 783Z" fill="#cdf3cf" />
<path d="M540 790L560 782L568 802L548 810Z" fill="#cdf3cf" />
<path d="M527 705L540 700L545 720L532 724Z" fill="#cdf3cf" />
<path d="M575 780L590 776L594 792L580 796Z" fill="#cdf3cf" />
<path d="M745 600L760 596L764 616L748 620Z" fill="#cfe9c6" />
<path d="M800 640L818 636L822 655L804 660Z" fill="#cfe9c6" />
<path d="M862 645L885 640L890 665L866 668Z" fill="#cfe9c6" />
<path d="M790 700L812 710L806 730L784 722Z" fill="#cfe9c6" />
<path d="M905 700L935 690L945 715L915 728Z" fill="#cfe9c6" />
<path d="M960 705L985 700L988 722L962 726Z" fill="#cfe9c6" />
<path d="M1050 822L1095.7 826L1124.3 815.9L1187.8 801.6L1221 808L1221 870L1040 870Z" fill="#eadfe6" />
<rect x="1075" y="838" width="26" height="8" fill="#d8cdc6" transform="rotate(-25 1088.0 842.0)"/>
<rect x="1105" y="830" width="30" height="9" fill="#d8cdc6" transform="rotate(-25 1120.0 834.5)"/>
<rect x="1085" y="855" width="28" height="8" fill="#d8cdc6" transform="rotate(-25 1099.0 859.0)"/>
<rect x="1125" y="848" width="24" height="8" fill="#d8cdc6" transform="rotate(-25 1137.0 852.0)"/>
<rect x="1200" y="820" width="8" height="26" fill="#d8cdc6" transform="rotate(20 1204.0 833.0)"/>
<rect x="1205" y="850" width="8" height="18" fill="#d8cdc6" transform="rotate(20 1209.0 859.0)"/>
<rect x="1150" y="835" width="14" height="10" fill="#d8cdc6" transform="rotate(-25 1157.0 840.0)"/>
<path d="M926 826L944.8 804L986 806L1032.2 811.8L1050 822L1040 870L916 870Z" fill="#e9e2dc" />
<g clip-path="url(#c6)"><path filter="url(#warp)" d="M1043.9 802.6L1065.3 815M993.3 789.6L1037.4 815.1M1037.4 815.1L1061.2 828.8M1026.5 818.4L1064.5 840.3M976.8 808.3L998.8 821M998.8 821L1020.1 833.3M1021.1 831.6L1041.8 843.5M1041.8 843.5L1068.2 858.8M913.6 787.9L960.7 815.1M960.7 815.1L998.5 836.9M998.5 836.9L1023.2 851.1M906.8 799.7L937 817.1M935.3 820L977.5 844.4M977.5 844.4L1015.4 866.2M1017 863.4L1053.4 884.4M899.9 811.5L921.8 824.2M921.8 824.2L961.4 847M961.4 847L983.9 860M983.9 860L1005.1 872.3M894.3 821.2L922.2 837.3M922.2 837.3L952.2 854.7M952.2 854.7L992.1 877.7M888.4 831.5L933.1 857.3M934.3 855.2L981.5 882.5M881.6 843.3L929.9 871.2M875.3 854.1L923.3 881.8M1053.3 852.1L1034.8 884M1053.9 815.1L1043.1 833.9M1038.5 831.3L1016.4 869.5M1016.4 869.5L1003.2 892.5M1055.1 780.9L1040.7 805.8M1040.7 805.8L1022.5 837.3M1022.5 837.3L1007 864.3M1010.3 866.2L998.1 887.3M1038.4 771.2L1010.7 819.1M1010.7 819.1L989.9 855.2M1000.4 796.7L973.2 843.6M973.2 843.6L951.7 881M981.3 786.3L969.3 807.1M969.3 807.1L946.2 847.2M946.2 847.2L934.7 867M934.7 867L917.4 896.9M969 789.5L953.3 816.7M953.3 816.7L942.7 835M940.4 833.6L922.9 863.9M922.9 863.9L907.2 891M940.4 790.7L922.4 822M923.8 822.8L909.4 847.8M916.1 801.1L895.1 837.4" fill="none" stroke="#ffffff" stroke-width="2.2"/></g>
<path d="M598 300C599.5 305 604.3 321.6 606.8 330C609.3 338.4 609.9 343 613 350.5C616.1 358 620.4 368.2 625.2 375C630 381.8 635.8 387.3 641.6 391.4C647.4 395.5 651.8 397.7 660 399.6C668.2 401.5 681.1 402.4 690.7 402.7C700.3 403 709.9 403.3 717.4 401.7C724.9 400.1 729.5 396.2 736 393C742.5 389.8 748 384.8 756.5 382.5C765 380.2 777.7 378 787.2 379.1C796.8 380.2 806.3 383.9 813.8 389.4C821.3 394.9 827.4 404 832.2 411.9C837 419.8 839.8 428.3 842.5 436.5C845.2 444.7 847.2 452.8 848.6 461C850 469.2 850.1 477.4 850.7 485.6C851.4 493.8 850.5 503.2 852.5 510C854.5 516.8 857.9 521.6 863 526.4C868.1 531.2 875.6 534.6 883.4 538.7C891.2 542.8 901.1 546.6 910 551C918.9 555.4 928.9 560.2 936.7 565.3C944.6 570.4 951.3 575.6 957.1 581.7C962.9 587.8 967.4 594.8 971.5 602C975.6 609.2 978.3 618 981.7 624.7C985.1 631.4 990.3 639.1 992 642" fill="none" stroke="#d3a263" stroke-width="21.5" />
<path d="M598 300C599.5 305 604.3 321.6 606.8 330C609.3 338.4 609.9 343 613 350.5C616.1 358 620.4 368.2 625.2 375C630 381.8 635.8 387.3 641.6 391.4C647.4 395.5 651.8 397.7 660 399.6C668.2 401.5 681.1 402.4 690.7 402.7C700.3 403 709.9 403.3 717.4 401.7C724.9 400.1 729.5 396.2 736 393C742.5 389.8 748 384.8 756.5 382.5C765 380.2 777.7 378 787.2 379.1C796.8 380.2 806.3 383.9 813.8 389.4C821.3 394.9 827.4 404 832.2 411.9C837 419.8 839.8 428.3 842.5 436.5C845.2 444.7 847.2 452.8 848.6 461C850 469.2 850.1 477.4 850.7 485.6C851.4 493.8 850.5 503.2 852.5 510C854.5 516.8 857.9 521.6 863 526.4C868.1 531.2 875.6 534.6 883.4 538.7C891.2 542.8 901.1 546.6 910 551C918.9 555.4 928.9 560.2 936.7 565.3C944.6 570.4 951.3 575.6 957.1 581.7C962.9 587.8 967.4 594.8 971.5 602C975.6 609.2 978.3 618 981.7 624.7C985.1 631.4 990.3 639.1 992 642" fill="none" stroke="#f6cf9b" stroke-width="20" />
<path d="M598 300C599.5 305 604.3 321.6 606.8 330C609.3 338.4 609.9 343 613 350.5C616.1 358 620.4 368.2 625.2 375C630 381.8 635.8 387.3 641.6 391.4C647.4 395.5 651.8 397.7 660 399.6C668.2 401.5 681.1 402.4 690.7 402.7C700.3 403 709.9 403.3 717.4 401.7C724.9 400.1 729.5 396.2 736 393C742.5 389.8 748 384.8 756.5 382.5C765 380.2 777.7 378 787.2 379.1C796.8 380.2 806.3 383.9 813.8 389.4C821.3 394.9 827.4 404 832.2 411.9C837 419.8 839.8 428.3 842.5 436.5C845.2 444.7 847.2 452.8 848.6 461C850 469.2 850.1 477.4 850.7 485.6C851.4 493.8 850.5 503.2 852.5 510C854.5 516.8 857.9 521.6 863 526.4C868.1 531.2 875.6 534.6 883.4 538.7C891.2 542.8 901.1 546.6 910 551C918.9 555.4 928.9 560.2 936.7 565.3C944.6 570.4 951.3 575.6 957.1 581.7C962.9 587.8 967.4 594.8 971.5 602C975.6 609.2 978.3 618 981.7 624.7C985.1 631.4 990.3 639.1 992 642" fill="none" stroke="#d9e0cf" stroke-width="12.5" />
<path d="M981.7 624.7C983.4 627.6 987.3 635.8 992 642C996.7 648.2 1001.6 653.7 1010 661.7C1018.4 669.7 1031.9 681.2 1042.4 690C1052.9 698.8 1062.8 706.4 1073.1 714.6C1083.3 722.8 1093.7 731.6 1103.9 739.1C1114.2 746.6 1124.4 753.5 1134.6 759.6C1144.8 765.8 1155.1 770.9 1165.3 776C1175.5 781.1 1185.5 785.8 1196 790.3C1206.5 794.8 1222.7 800.9 1228 803" fill="none" stroke="#e58fa0" stroke-width="21" />
<path d="M981.7 624.7C983.4 627.6 987.3 635.8 992 642C996.7 648.2 1001.6 653.7 1010 661.7C1018.4 669.7 1031.9 681.2 1042.4 690C1052.9 698.8 1062.8 706.4 1073.1 714.6C1083.3 722.8 1093.7 731.6 1103.9 739.1C1114.2 746.6 1124.4 753.5 1134.6 759.6C1144.8 765.8 1155.1 770.9 1165.3 776C1175.5 781.1 1185.5 785.8 1196 790.3C1206.5 794.8 1222.7 800.9 1228 803" fill="none" stroke="#d9e0cf" stroke-width="11.5" />
<path d="M598 300C599.5 305 604.3 321.6 606.8 330C609.3 338.4 609.9 343 613 350.5C616.1 358 620.4 368.2 625.2 375C630 381.8 635.8 387.3 641.6 391.4C647.4 395.5 651.8 397.7 660 399.6C668.2 401.5 681.1 402.4 690.7 402.7C700.3 403 709.9 403.3 717.4 401.7C724.9 400.1 729.5 396.2 736 393C742.5 389.8 748 384.8 756.5 382.5C765 380.2 777.7 378 787.2 379.1C796.8 380.2 806.3 383.9 813.8 389.4C821.3 394.9 827.4 404 832.2 411.9C837 419.8 839.8 428.3 842.5 436.5C845.2 444.7 847.2 452.8 848.6 461C850 469.2 850.1 477.4 850.7 485.6C851.4 493.8 850.5 503.2 852.5 510C854.5 516.8 857.9 521.6 863 526.4C868.1 531.2 875.6 534.6 883.4 538.7C891.2 542.8 901.1 546.6 910 551C918.9 555.4 928.9 560.2 936.7 565.3C944.6 570.4 951.3 575.6 957.1 581.7C962.9 587.8 967.4 594.8 971.5 602C975.6 609.2 978.3 618 981.7 624.7C985.1 631.4 987.3 635.8 992 642C996.7 648.2 1001.6 653.7 1010 661.7C1018.4 669.7 1031.9 681.2 1042.4 690C1052.9 698.8 1062.8 706.4 1073.1 714.6C1083.3 722.8 1093.7 731.6 1103.9 739.1C1114.2 746.6 1124.4 753.5 1134.6 759.6C1144.8 765.8 1155.1 770.9 1165.3 776C1175.5 781.1 1185.5 785.8 1196 790.3C1206.5 794.8 1222.7 800.9 1228 803" fill="none" stroke="#a6cfe0" stroke-width="9.5" />
<path d="M598 300C599.5 305 604.3 321.6 606.8 330C609.3 338.4 609.9 343 613 350.5C616.1 358 620.4 368.2 625.2 375C630 381.8 635.8 387.3 641.6 391.4C647.4 395.5 651.8 397.7 660 399.6C668.2 401.5 681.1 402.4 690.7 402.7C700.3 403 709.9 403.3 717.4 401.7C724.9 400.1 729.5 396.2 736 393C742.5 389.8 748 384.8 756.5 382.5C765 380.2 777.7 378 787.2 379.1C796.8 380.2 806.3 383.9 813.8 389.4C821.3 394.9 827.4 404 832.2 411.9C837 419.8 839.8 428.3 842.5 436.5C845.2 444.7 847.2 452.8 848.6 461C850 469.2 850.1 477.4 850.7 485.6C851.4 493.8 850.5 503.2 852.5 510C854.5 516.8 857.9 521.6 863 526.4C868.1 531.2 875.6 534.6 883.4 538.7C891.2 542.8 901.1 546.6 910 551C918.9 555.4 928.9 560.2 936.7 565.3C944.6 570.4 951.3 575.6 957.1 581.7C962.9 587.8 967.4 594.8 971.5 602C975.6 609.2 978.3 618 981.7 624.7C985.1 631.4 987.3 635.8 992 642C996.7 648.2 1001.6 653.7 1010 661.7C1018.4 669.7 1031.9 681.2 1042.4 690C1052.9 698.8 1062.8 706.4 1073.1 714.6C1083.3 722.8 1093.7 731.6 1103.9 739.1C1114.2 746.6 1124.4 753.5 1134.6 759.6C1144.8 765.8 1155.1 770.9 1165.3 776C1175.5 781.1 1185.5 785.8 1196 790.3C1206.5 794.8 1222.7 800.9 1228 803" fill="none" stroke="#7f9fd8" stroke-width="0.9" stroke-dasharray="5 5" stroke-opacity=".8"/>
<path d="M400 700C406.7 694.2 425.7 677.5 440 665C454.3 652.5 471.5 638.2 486 624.7C500.5 611.2 515.7 592.9 527 583.7C538.3 574.5 545.1 570.8 553.6 569.4C562.1 568 568.9 572.3 578.1 575.5C587.3 578.7 599 588.4 608.9 588.8C618.8 589.1 629.6 582.2 637.5 577.6C645.4 573 652.9 563.9 656 561.2" fill="none" stroke="#d3a263" stroke-width="7.8" stroke-linecap="round" stroke-linejoin="round"/>
<path d="M440 887C447.7 883.2 466.4 874 486 864C505.6 854 537.2 837.4 557.7 827.2C578.2 817 593.5 810.5 608.9 802.6C624.2 794.7 636.2 786.6 649.8 780C663.4 773.4 676.3 765.8 690.7 762.7C705.1 759.7 719.9 760.9 736 761.7C752.1 762.6 772.9 764.8 787.2 767.8C801.5 770.8 812.8 774.9 822 780C831.2 785.1 836.4 798.5 842.5 798.5C848.6 798.5 852.8 787.2 858.9 780C865 772.8 873.8 763.7 879.3 755.5C884.8 747.3 883.8 741.9 891.6 731C899.5 720.1 916.3 701.8 926.4 690C936.5 678.2 943.9 668.3 952 660C960.1 651.7 968.7 645.3 975 640C981.3 634.7 987.5 630 990 628" fill="none" stroke="#d3a263" stroke-width="7.3" stroke-linecap="round" stroke-linejoin="round"/>
<path d="M634 584C636 588 636.2 599.5 645.7 608.3C655.2 617.1 675.7 627.3 690.7 636.9C705.8 646.5 718.9 656.8 736 665.6C753.1 674.5 776.9 681.5 793.3 690C809.7 698.5 820 705.7 834.3 716.6C848.6 727.5 865 740.1 879.3 755.5C893.6 770.9 911.8 797.2 920.3 808.8C928.8 820.4 923.7 814.9 930.5 825.1C937.3 835.3 956.1 862.5 961.2 870" fill="none" stroke="#b9ba72" stroke-width="4.9" stroke-linecap="round" stroke-linejoin="round"/>
<path d="M722 452C725.8 456.7 737 468.7 745 480C753 491.3 760.8 504.2 770 520C779.2 535.8 790 556.7 800 575C810 593.3 819.5 610.8 830 630C840.5 649.2 853.1 673.5 863 690C872.9 706.5 885.2 722.4 889.6 728.9" fill="none" stroke="#b9ba72" stroke-width="4.7" stroke-linecap="round" stroke-linejoin="round"/>
<path d="M928.5 690C933.8 694.7 950.4 709.5 960 718C969.6 726.5 977.7 733.4 986 741.2C994.3 749 1006 761 1010 765" fill="none" stroke="#b9ba72" stroke-width="4.7" stroke-linecap="round" stroke-linejoin="round"/>
<path d="M553.6 549C552.2 555.8 550.1 574.7 545 590C539.9 605.3 519.1 630.5 522.9 641C526.7 651.5 558.7 645.1 567.9 653.3C577.1 661.5 575.7 683.9 578.1 690C580.5 696.1 579.5 681.5 582.2 690C584.9 698.5 589.7 724.8 594.5 741.2C599.3 757.6 607.8 778.4 610.9 788.3C614 798.2 612.6 798.5 613 800.6" fill="none" stroke="#b9ba72" stroke-width="5.3" stroke-linecap="round" stroke-linejoin="round"/>
<path d="M486 560C490.8 562.8 503.8 575.3 515 577C526.2 578.7 546.7 571.2 553 570" fill="none" stroke="#b9ba72" stroke-width="5.3" stroke-linecap="round" stroke-linejoin="round"/>
<path d="M543.3 690C541.9 698.5 540.2 725.9 535.1 741.2C530 756.6 520.8 768.1 512.6 782.1C504.4 796.1 493.1 813.7 486 825C478.9 836.3 472.7 845.8 470 850" fill="none" stroke="#b9ba72" stroke-width="4.9" stroke-linecap="round" stroke-linejoin="round"/>
<path d="M543 705L583 695" fill="none" stroke="#b9ba72" stroke-width="4.7" stroke-linecap="round" stroke-linejoin="round"/>
<path d="M613 800C615 805 617.2 818.3 625 830C632.8 841.7 654.2 863.3 660 870" fill="none" stroke="#b9ba72" stroke-width="4.5" stroke-linecap="round" stroke-linejoin="round"/>
<path d="M486 360C491.7 358 507.7 352.8 520 348C532.3 343.2 553.3 333.8 560 331" fill="none" stroke="#b9ba72" stroke-width="5.3" stroke-linecap="round" stroke-linejoin="round"/>
<path d="M681 326C680.2 331.7 678.5 347.8 676 360C673.5 372.2 667.7 392.5 666 399" fill="none" stroke="#b9ba72" stroke-width="4.3" stroke-linecap="round" stroke-linejoin="round"/>
<path d="M766 326C761 329.8 745 342 736 349C727 356 717 363.2 712 368C707 372.8 707 373 706 378C705 383 706 394.7 706 398" fill="none" stroke="#b9ba72" stroke-width="5.5" stroke-linecap="round" stroke-linejoin="round"/>
<path d="M703 414C702 418.3 700.3 430.2 697 440C693.7 449.8 689.7 461 683 473C676.3 485 664.2 500.8 657 512C649.8 523.2 644.7 533.5 640 540C635.3 546.5 632.8 547.5 629 551C625.2 554.5 624.5 560.5 617 561C609.5 561.5 594.6 556.3 584 554C573.4 551.7 564.8 550.6 553.6 547C542.4 543.4 528.3 537 517 532.5C505.7 528 498.8 525.4 486 520C473.2 514.6 447.7 503.3 440 500" fill="none" stroke="#8d8d80" stroke-width="4.5" stroke-linecap="round" stroke-linejoin="round"/>
<path d="M752 520C751.3 526.7 748 545 748 560C748 575 750.7 593.3 752 610C753.3 626.7 756 645 756 660C756 675 753.8 682.5 752 700C750.2 717.5 746.2 754.2 745 765" fill="none" stroke="#cfc8c0" stroke-width="3.9000000000000004" stroke-linecap="round" stroke-linejoin="round"/>
<path d="M813.8 330L986 471.3L1138.6 600L1221 668" fill="none" stroke="#c9c9c9" stroke-width="3.3" stroke-linecap="round" stroke-linejoin="round"/>
<path d="M1062 500C1061.1 501.7 1060.4 501.5 1056.8 510C1053.2 518.5 1044.9 537.3 1040.4 551C1035.9 564.7 1036.5 579 1030 592C1023.5 605 1009 620.6 1001.5 628.8C994 637 987.8 639 985 641" fill="none" stroke="#c9c9c9" stroke-width="3.9000000000000004" stroke-linecap="round" stroke-linejoin="round"/>
<path d="M1094 430C1090.8 436.7 1080.3 458.3 1075 470C1069.7 481.7 1064.2 495 1062 500" fill="none" stroke="#c9c9c9" stroke-width="4.5" stroke-linecap="round" stroke-linejoin="round"/>
<path d="M981 565C985.8 564.2 1001 558.3 1010 560C1019 561.7 1028.3 568.3 1035 575C1041.7 581.7 1043.3 592.5 1050 600C1056.7 607.5 1065 613.3 1075 620C1085 626.7 1097.5 634.2 1110 640C1122.5 645.8 1137.5 655 1150 655C1162.5 655 1173.2 640.8 1185 640C1196.8 639.2 1215 648.3 1221 650" fill="none" stroke="#c9c9c9" stroke-width="2.9000000000000004" stroke-linecap="round" stroke-linejoin="round"/>
<path d="M1057 331L1221 503" fill="none" stroke="#d3a263" stroke-width="4.5" stroke-linecap="round" stroke-linejoin="round"/>
<path d="M1198 804.7L1171.4 870" fill="none" stroke="#d3a263" stroke-width="4.7" stroke-linecap="round" stroke-linejoin="round"/>
<path d="M930.5 825.1L961.2 870" fill="none" stroke="#d3a263" stroke-width="4.7" stroke-linecap="round" stroke-linejoin="round"/>
<path d="M975 640C977.5 638 985.7 631.3 990 628C994.3 624.7 999.2 621.3 1001 620" fill="none" stroke="#d3a263" stroke-width="6.3" stroke-linecap="round" stroke-linejoin="round"/>
<path d="M400 700C406.7 694.2 425.7 677.5 440 665C454.3 652.5 471.5 638.2 486 624.7C500.5 611.2 515.7 592.9 527 583.7C538.3 574.5 545.1 570.8 553.6 569.4C562.1 568 568.9 572.3 578.1 575.5C587.3 578.7 599 588.4 608.9 588.8C618.8 589.1 629.6 582.2 637.5 577.6C645.4 573 652.9 563.9 656 561.2" fill="none" stroke="#f6cf9b" stroke-width="6.5" stroke-linecap="round" stroke-linejoin="round"/>
<path d="M440 887C447.7 883.2 466.4 874 486 864C505.6 854 537.2 837.4 557.7 827.2C578.2 817 593.5 810.5 608.9 802.6C624.2 794.7 636.2 786.6 649.8 780C663.4 773.4 676.3 765.8 690.7 762.7C705.1 759.7 719.9 760.9 736 761.7C752.1 762.6 772.9 764.8 787.2 767.8C801.5 770.8 812.8 774.9 822 780C831.2 785.1 836.4 798.5 842.5 798.5C848.6 798.5 852.8 787.2 858.9 780C865 772.8 873.8 763.7 879.3 755.5C884.8 747.3 883.8 741.9 891.6 731C899.5 720.1 916.3 701.8 926.4 690C936.5 678.2 943.9 668.3 952 660C960.1 651.7 968.7 645.3 975 640C981.3 634.7 987.5 630 990 628" fill="none" stroke="#f6cf9b" stroke-width="6" stroke-linecap="round" stroke-linejoin="round"/>
<path d="M634 584C636 588 636.2 599.5 645.7 608.3C655.2 617.1 675.7 627.3 690.7 636.9C705.8 646.5 718.9 656.8 736 665.6C753.1 674.5 776.9 681.5 793.3 690C809.7 698.5 820 705.7 834.3 716.6C848.6 727.5 865 740.1 879.3 755.5C893.6 770.9 911.8 797.2 920.3 808.8C928.8 820.4 923.7 814.9 930.5 825.1C937.3 835.3 956.1 862.5 961.2 870" fill="none" stroke="#f4f5b8" stroke-width="3.6" stroke-linecap="round" stroke-linejoin="round"/>
<path d="M722 452C725.8 456.7 737 468.7 745 480C753 491.3 760.8 504.2 770 520C779.2 535.8 790 556.7 800 575C810 593.3 819.5 610.8 830 630C840.5 649.2 853.1 673.5 863 690C872.9 706.5 885.2 722.4 889.6 728.9" fill="none" stroke="#f4f5b8" stroke-width="3.4" stroke-linecap="round" stroke-linejoin="round"/>
<path d="M928.5 690C933.8 694.7 950.4 709.5 960 718C969.6 726.5 977.7 733.4 986 741.2C994.3 749 1006 761 1010 765" fill="none" stroke="#f4f5b8" stroke-width="3.4" stroke-linecap="round" stroke-linejoin="round"/>
<path d="M553.6 549C552.2 555.8 550.1 574.7 545 590C539.9 605.3 519.1 630.5 522.9 641C526.7 651.5 558.7 645.1 567.9 653.3C577.1 661.5 575.7 683.9 578.1 690C580.5 696.1 579.5 681.5 582.2 690C584.9 698.5 589.7 724.8 594.5 741.2C599.3 757.6 607.8 778.4 610.9 788.3C614 798.2 612.6 798.5 613 800.6" fill="none" stroke="#f4f5b8" stroke-width="4" stroke-linecap="round" stroke-linejoin="round"/>
<path d="M486 560C490.8 562.8 503.8 575.3 515 577C526.2 578.7 546.7 571.2 553 570" fill="none" stroke="#f4f5b8" stroke-width="4" stroke-linecap="round" stroke-linejoin="round"/>
<path d="M543.3 690C541.9 698.5 540.2 725.9 535.1 741.2C530 756.6 520.8 768.1 512.6 782.1C504.4 796.1 493.1 813.7 486 825C478.9 836.3 472.7 845.8 470 850" fill="none" stroke="#f4f5b8" stroke-width="3.6" stroke-linecap="round" stroke-linejoin="round"/>
<path d="M543 705L583 695" fill="none" stroke="#f4f5b8" stroke-width="3.4" stroke-linecap="round" stroke-linejoin="round"/>
<path d="M613 800C615 805 617.2 818.3 625 830C632.8 841.7 654.2 863.3 660 870" fill="none" stroke="#f4f5b8" stroke-width="3.2" stroke-linecap="round" stroke-linejoin="round"/>
<path d="M486 360C491.7 358 507.7 352.8 520 348C532.3 343.2 553.3 333.8 560 331" fill="none" stroke="#f4f5b8" stroke-width="4" stroke-linecap="round" stroke-linejoin="round"/>
<path d="M681 326C680.2 331.7 678.5 347.8 676 360C673.5 372.2 667.7 392.5 666 399" fill="none" stroke="#f4f5b8" stroke-width="3.0" stroke-linecap="round" stroke-linejoin="round"/>
<path d="M766 326C761 329.8 745 342 736 349C727 356 717 363.2 712 368C707 372.8 707 373 706 378C705 383 706 394.7 706 398" fill="none" stroke="#f4f5b8" stroke-width="4.2" stroke-linecap="round" stroke-linejoin="round"/>
<path d="M703 414C702 418.3 700.3 430.2 697 440C693.7 449.8 689.7 461 683 473C676.3 485 664.2 500.8 657 512C649.8 523.2 644.7 533.5 640 540C635.3 546.5 632.8 547.5 629 551C625.2 554.5 624.5 560.5 617 561C609.5 561.5 594.6 556.3 584 554C573.4 551.7 564.8 550.6 553.6 547C542.4 543.4 528.3 537 517 532.5C505.7 528 498.8 525.4 486 520C473.2 514.6 447.7 503.3 440 500" fill="none" stroke="#e9e6df" stroke-width="3.2" stroke-linecap="round" stroke-linejoin="round"/>
<path d="M752 520C751.3 526.7 748 545 748 560C748 575 750.7 593.3 752 610C753.3 626.7 756 645 756 660C756 675 753.8 682.5 752 700C750.2 717.5 746.2 754.2 745 765" fill="none" stroke="#fff" stroke-width="2.6" stroke-linecap="round" stroke-linejoin="round"/>
<path d="M813.8 330L986 471.3L1138.6 600L1221 668" fill="none" stroke="#fdfdfd" stroke-width="2.0" stroke-linecap="round" stroke-linejoin="round"/>
<path d="M1062 500C1061.1 501.7 1060.4 501.5 1056.8 510C1053.2 518.5 1044.9 537.3 1040.4 551C1035.9 564.7 1036.5 579 1030 592C1023.5 605 1009 620.6 1001.5 628.8C994 637 987.8 639 985 641" fill="none" stroke="#fdfdfd" stroke-width="2.6" stroke-linecap="round" stroke-linejoin="round"/>
<path d="M1094 430C1090.8 436.7 1080.3 458.3 1075 470C1069.7 481.7 1064.2 495 1062 500" fill="none" stroke="#fdfdfd" stroke-width="3.2" stroke-linecap="round" stroke-linejoin="round"/>
<path d="M981 565C985.8 564.2 1001 558.3 1010 560C1019 561.7 1028.3 568.3 1035 575C1041.7 581.7 1043.3 592.5 1050 600C1056.7 607.5 1065 613.3 1075 620C1085 626.7 1097.5 634.2 1110 640C1122.5 645.8 1137.5 655 1150 655C1162.5 655 1173.2 640.8 1185 640C1196.8 639.2 1215 648.3 1221 650" fill="none" stroke="#fdfdfd" stroke-width="1.6" stroke-linecap="round" stroke-linejoin="round"/>
<path d="M1057 331L1221 503" fill="none" stroke="#f6cf9b" stroke-width="3.2" stroke-linecap="round" stroke-linejoin="round"/>
<path d="M1198 804.7L1171.4 870" fill="none" stroke="#f6cf9b" stroke-width="3.4" stroke-linecap="round" stroke-linejoin="round"/>
<path d="M930.5 825.1L961.2 870" fill="none" stroke="#f6cf9b" stroke-width="3.4" stroke-linecap="round" stroke-linejoin="round"/>
<path d="M975 640C977.5 638 985.7 631.3 990 628C994.3 624.7 999.2 621.3 1001 620" fill="none" stroke="#f6cf9b" stroke-width="5" stroke-linecap="round" stroke-linejoin="round"/>
<path d="M1225 512L1189.8 544.8L1083.4 653.3L1052.7 690L1040 700" fill="none" stroke="#e58fa0" stroke-width="6.5" stroke-linecap="round" stroke-linejoin="round"/>
<path d="M1221 520C1216.7 520 1203.5 515.8 1195 520C1186.5 524.2 1174.2 540.8 1170 545" fill="none" stroke="#e58fa0" stroke-width="4" stroke-linecap="round" stroke-linejoin="round"/>
<path d="M1221 548C1217.5 548.3 1206 550 1200 550C1194 550 1187.5 548.3 1185 548" fill="none" stroke="#e58fa0" stroke-width="4" stroke-linecap="round" stroke-linejoin="round"/>
<path d="M1040 700C1037.5 702.7 1031.7 708.5 1025 716C1018.3 723.5 1012.3 734 1000 745C987.7 756 963.3 770.1 951 782.1C938.7 794.1 932.2 801.5 926.4 817C920.6 832.5 917.9 865.3 916.2 875" fill="none" stroke="#e58fa0" stroke-width="8" stroke-linecap="round" stroke-linejoin="round"/>
<path d="M1052 690C1048.3 688.3 1036.7 684.3 1030 680C1023.3 675.7 1015 666.7 1012 664" fill="none" stroke="#e58fa0" stroke-width="4" stroke-linecap="round" stroke-linejoin="round"/>
<path d="M1040 700C1041.7 702 1044.2 708.3 1050 712C1055.8 715.7 1070.8 720.3 1075 722" fill="none" stroke="#e58fa0" stroke-width="4" stroke-linecap="round" stroke-linejoin="round"/>
<path d="M1023 716C1025.8 717 1033.8 722.7 1040 722C1046.2 721.3 1056.7 713.7 1060 712" fill="none" stroke="#e58fa0" stroke-width="3.5" stroke-linecap="round" stroke-linejoin="round"/>
<path d="M1046 668L1070 660L1082 676L1064 698L1048 690Z" fill="#e58fa0" opacity=".8"/>
<path d="M1054 672L1066 668L1072 677L1062 687Z" fill="#efe6e2" />
<path d="M1022 712L1040 700L1052 716L1036 728Z" fill="#b98a86" opacity=".7"/>
<path d="M992 642C994 643.3 1000.7 646.3 1004 650C1007.3 653.7 1010.7 661.7 1012 664" fill="none" stroke="#e58fa0" stroke-width="6" stroke-linecap="round" stroke-linejoin="round"/>
<path d="M1000 745C1002 743.5 1007.7 736.8 1012 736C1016.3 735.2 1023 737.3 1026 740C1029 742.7 1029.3 750 1030 752" fill="none" stroke="#e58fa0" stroke-width="3" stroke-linecap="round" stroke-linejoin="round"/>
<path d="M986 755C988.3 755.8 996 760.8 1000 760C1004 759.2 1008.3 751.7 1010 750" fill="none" stroke="#e58fa0" stroke-width="3.5" stroke-linecap="round" stroke-linejoin="round"/>
<path d="M840.4 804.7C843.5 808.8 853.1 817.5 858.9 829.2C864.7 840.9 872.5 867.4 875.2 875" fill="none" stroke="#e58fa0" stroke-width="7" stroke-linecap="round" stroke-linejoin="round"/>
<path d="M736 848L760 870" fill="none" stroke="#e58fa0" stroke-width="4" stroke-linecap="round" stroke-linejoin="round"/>
<path d="M975 318C977.3 320.2 979.7 323 989 331C998.3 339 1020.3 357.8 1030.6 366C1040.9 374.2 1041.1 370.8 1051 380.3C1060.9 389.9 1078.7 409.3 1090 423.3C1101.3 437.3 1109.7 452.7 1118.6 464.3C1127.5 475.9 1134 486.9 1143.2 493C1152.4 499.1 1164.4 501.8 1173.9 501.1C1183.5 500.4 1192 495 1200.5 488.8C1209 482.6 1220.9 468.1 1225 464" fill="none" stroke="#666666" stroke-width="6.5" />
<path d="M975 318C977.3 320.2 979.7 323 989 331C998.3 339 1020.3 357.8 1030.6 366C1040.9 374.2 1041.1 370.8 1051 380.3C1060.9 389.9 1078.7 409.3 1090 423.3C1101.3 437.3 1109.7 452.7 1118.6 464.3C1127.5 475.9 1134 486.9 1143.2 493C1152.4 499.1 1164.4 501.8 1173.9 501.1C1183.5 500.4 1192 495 1200.5 488.8C1209 482.6 1220.9 468.1 1225 464" fill="none" stroke="#b0b0b0" stroke-width="3.3" />
<path d="M975 318C977.3 320.2 979.7 323 989 331C998.3 339 1020.3 357.8 1030.6 366C1040.9 374.2 1041.1 370.8 1051 380.3C1060.9 389.9 1078.7 409.3 1090 423.3C1101.3 437.3 1109.7 452.7 1118.6 464.3C1127.5 475.9 1134 486.9 1143.2 493C1152.4 499.1 1164.4 501.8 1173.9 501.1C1183.5 500.4 1192 495 1200.5 488.8C1209 482.6 1220.9 468.1 1225 464" fill="none" stroke="#666666" stroke-width="0.8" />
<path d="M440 899C447.7 894.8 468.1 883.7 486 874C503.9 864.3 530.3 850.4 547.4 841C564.5 831.6 574.8 823 588.4 817.5C602 812 615.6 808.7 629.3 808C642.9 807.3 656.6 810 670.3 813.5C683.9 817 699.6 821.8 711.2 829.2C722.8 836.6 733.5 849.5 740 858C746.5 866.5 748.3 876.3 750 880" fill="none" stroke="#8a8a8a" stroke-width="14" />
<path d="M440 899C447.7 894.8 468.1 883.7 486 874C503.9 864.3 530.3 850.4 547.4 841C564.5 831.6 574.8 823 588.4 817.5C602 812 615.6 808.7 629.3 808C642.9 807.3 656.6 810 670.3 813.5C683.9 817 699.6 821.8 711.2 829.2C722.8 836.6 733.5 849.5 740 858C746.5 866.5 748.3 876.3 750 880" fill="none" stroke="#d2d2d2" stroke-width="10.5" />
<path d="M440 899C447.7 894.8 468.1 883.7 486 874C503.9 864.3 530.3 850.4 547.4 841C564.5 831.6 574.8 823 588.4 817.5C602 812 615.6 808.7 629.3 808C642.9 807.3 656.6 810 670.3 813.5C683.9 817 699.6 821.8 711.2 829.2C722.8 836.6 733.5 849.5 740 858C746.5 866.5 748.3 876.3 750 880" fill="none" stroke="#4d4d4d" stroke-width="2.2" stroke-dasharray="7 4"/>
<path d="M439.2 897C446.9 892.8 467.3 881.7 485.2 872C503.1 862.3 529.5 848.4 546.6 839C563.7 829.6 574 821 587.6 815.5C601.2 810 614.9 806.7 628.5 806C642.1 805.3 655.9 808 669.5 811.5C683.1 815 698.8 819.8 710.4 827.2C722 834.6 732.7 847.5 739.2 856C745.7 864.5 747.5 874.3 749.2 878" fill="none" stroke="#7a7a7a" stroke-width="0.8" />
<path d="M440.8 901C448.5 896.8 468.9 885.7 486.8 876C504.7 866.3 531.1 852.4 548.2 843C565.3 833.6 575.5 825 589.2 819.5C602.8 814 616.4 810.7 630.1 810C643.7 809.3 657.4 812 671.1 815.5C684.7 819 700.4 823.8 712 831.2C723.6 838.6 734.3 851.5 740.8 860C747.3 868.5 749.1 878.3 750.8 882" fill="none" stroke="#7a7a7a" stroke-width="0.8" />
<path d="M438.5 895.5C446.2 891.3 466.6 880.2 484.5 870.5C502.4 860.8 528.8 846.9 545.9 837.5C563 828.1 573.2 819.5 586.9 814C600.5 808.5 614.1 805.2 627.8 804.5C641.4 803.8 655.1 806.5 668.8 810C682.4 813.5 698.1 818.3 709.7 825.7C721.3 833.1 732 846 738.5 854.5C745 863 746.8 872.8 748.5 876.5" fill="none" stroke="#6a6a6a" stroke-width="1" />
<path d="M441.5 902.5C449.2 898.3 469.6 887.2 487.5 877.5C505.4 867.8 531.8 853.9 548.9 844.5C566 835.1 576.2 826.5 589.9 821C603.5 815.5 617.1 812.2 630.8 811.5C644.4 810.8 658.1 813.5 671.8 817C685.4 820.5 701.1 825.3 712.7 832.7C724.3 840.1 735 853 741.5 861.5C748 870 749.8 879.8 751.5 883.5" fill="none" stroke="#6a6a6a" stroke-width="1" />
<path d="M797 318C797.5 322.5 798.8 334.7 800 345C801.2 355.3 805.7 369.2 804 380C802.3 390.8 792.3 405 790 410" fill="none" stroke="#6b6b6b" stroke-width="7" />
<path d="M797 318C797.5 322.5 798.8 334.7 800 345C801.2 355.3 805.7 369.2 804 380C802.3 390.8 792.3 405 790 410" fill="none" stroke="#b5b5b5" stroke-width="4.5" />
<path d="M797 318C797.5 322.5 798.8 334.7 800 345C801.2 355.3 805.7 369.2 804 380C802.3 390.8 792.3 405 790 410" fill="none" stroke="#5b5b5b" stroke-width="1.2" />
<path d="M790 410C786.7 415 775.7 428.3 770 440C764.3 451.7 759 466.7 756 480C753 493.3 753 503.3 752 520C751 536.7 750 560 750 580C750 600 752 620 752 640C752 660 751.7 679.2 750 700C748.3 720.8 746.2 748.3 742 765C737.8 781.7 732 790.8 725 800C718 809.2 704.2 816.7 700 820" fill="none" stroke="#60705c" stroke-width="1.4" stroke-dasharray="7 3" stroke-opacity=".7"/>
<path d="M742 765C746.7 769.2 760.3 789.2 770 790C779.7 790.8 792 778.3 800 770C808 761.7 815.3 751.7 818 740C820.7 728.3 819 708.3 816 700C813 691.7 802.7 691.7 800 690" fill="none" stroke="#6f7f6a" stroke-width="1.2" stroke-opacity=".7"/>
<path d="M800 720C808.3 725 833.3 738.3 850 750C866.7 761.7 886.7 776.7 900 790C913.3 803.3 925 823.3 930 830" fill="none" stroke="#586a55" stroke-width="2.2" stroke-dasharray="6 3" stroke-opacity=".6"/>
<path d="M1225 731L1220.6 741.2L1196 800.6L1165.3 875" fill="none" stroke="#8c8c8c" stroke-width="8.5" />
<path d="M1225 731L1220.6 741.2L1196 800.6L1165.3 875" fill="none" stroke="#bdbdbd" stroke-width="5" />
<path d="M1225 731L1220.6 741.2L1196 800.6L1165.3 875" fill="none" stroke="#6a6a6a" stroke-width="1.2" />
<path d="M848 485C851.7 484.8 861.3 485.2 870 484C878.7 482.8 890.8 480.7 900 478C909.2 475.3 918.3 471.8 925 468C931.7 464.2 936.7 459.7 940 455C943.3 450.3 945 443.7 945 440C945 436.3 940.8 434.2 940 433" fill="none" stroke="#777" stroke-width="1.2" />
<text x="536.2" y="436.9" font-size="14" fill="#777777" text-anchor="start" textLength="69.6" lengthAdjust="spacingAndGlyphs" stroke="#fff" stroke-width="1.6" stroke-opacity=".55" paint-order="stroke" stroke-linejoin="round">Innere Stadt</text>
<text x="584.3" y="462" font-size="14.5" fill="#555" text-anchor="start" textLength="30.3" lengthAdjust="spacingAndGlyphs" stroke="#fff" stroke-width="1.6" stroke-opacity=".55" paint-order="stroke" stroke-linejoin="round">Wien</text>
<text x="523.9" y="654.3" font-size="14" fill="#777777" text-anchor="start" textLength="43" lengthAdjust="spacingAndGlyphs" stroke="#fff" stroke-width="1.6" stroke-opacity=".55" paint-order="stroke" stroke-linejoin="round">Wieden</text>
<text x="494.6" y="779" font-size="14" fill="#777777" text-anchor="start" textLength="75.8" lengthAdjust="spacingAndGlyphs" stroke="#fff" stroke-width="1.6" stroke-opacity=".55" paint-order="stroke" stroke-linejoin="round">Hungelbrunn</text>
<text x="746.8" y="422.5" font-size="14" fill="#777777" text-anchor="start" textLength="66.7" lengthAdjust="spacingAndGlyphs" stroke="#fff" stroke-width="1.6" stroke-opacity=".55" paint-order="stroke" stroke-linejoin="round">Weißgerber</text>
<text x="747.3" y="551" font-size="14" fill="#777777" text-anchor="start" textLength="64.5" lengthAdjust="spacingAndGlyphs" stroke="#fff" stroke-width="1.6" stroke-opacity=".55" paint-order="stroke" stroke-linejoin="round">Landstraße</text>
<text x="868" y="622.6" font-size="14" fill="#777777" text-anchor="start" textLength="41.6" lengthAdjust="spacingAndGlyphs" stroke="#fff" stroke-width="1.6" stroke-opacity=".55" paint-order="stroke" stroke-linejoin="round">Erdberg</text>
<text x="500" y="614" font-size="14" fill="#777777" text-anchor="end" stroke="#fff" stroke-width="1.6" stroke-opacity=".55" paint-order="stroke" stroke-linejoin="round">Laimgrube</text>
<text x="68" y="732.5" font-size="12" fill="#777777" text-anchor="start" textLength="71" lengthAdjust="spacingAndGlyphs" stroke="#fff" stroke-width="1.6" stroke-opacity=".55" paint-order="stroke" stroke-linejoin="round">Rudolfsheim</text>
<text x="154.8" y="340" font-size="8.5" fill="#777" text-anchor="start" textLength="46" lengthAdjust="spacingAndGlyphs" stroke="#fff" stroke-width="1.6" stroke-opacity=".55" paint-order="stroke" stroke-linejoin="round">Kalvarienberg</text>
<text x="374" y="343.5" font-size="12" fill="#777777" text-anchor="start" textLength="64" lengthAdjust="spacingAndGlyphs" stroke="#fff" stroke-width="1.6" stroke-opacity=".55" paint-order="stroke" stroke-linejoin="round">Alservorstadt</text>
<text x="688.7" y="466.2" font-size="9" fill="#555" text-anchor="start" transform="rotate(-64.7 688.7 466.2)" textLength="40.8" lengthAdjust="spacingAndGlyphs" stroke="#fff" stroke-width="1.6" stroke-opacity=".55" paint-order="stroke" stroke-linejoin="round">Stubenring</text>
<text x="517.7" y="532.5" font-size="9" fill="#555" text-anchor="start" transform="rotate(21.8 517.7 532.5)" textLength="38.7" lengthAdjust="spacingAndGlyphs" stroke="#fff" stroke-width="1.6" stroke-opacity=".55" paint-order="stroke" stroke-linejoin="round">Opernring</text>
<text x="574" y="576.5" font-size="9" fill="#444" text-anchor="start" transform="rotate(21.0 574 576.5)" textLength="37.4" lengthAdjust="spacingAndGlyphs" stroke="#fff" stroke-width="1.6" stroke-opacity=".55" paint-order="stroke" stroke-linejoin="round">Karlsplatz</text>
<text x="760.2" y="602" font-size="9" fill="#555" text-anchor="start" transform="rotate(-3.0 760.2 602)" textLength="49.5" lengthAdjust="spacingAndGlyphs" stroke="#fff" stroke-width="1.6" stroke-opacity=".55" paint-order="stroke" stroke-linejoin="round">Neulinggasse</text>
<text x="826" y="399.6" font-size="9" fill="#444" text-anchor="start" transform="rotate(61.9 826 399.6)" textLength="54.5" lengthAdjust="spacingAndGlyphs" stroke="#fff" stroke-width="1.6" stroke-opacity=".55" paint-order="stroke" stroke-linejoin="round">Schüttelstraße</text>
<text x="903.9" y="540.7" font-size="9" fill="#444" text-anchor="start" transform="rotate(21.7 903.9 540.7)" textLength="52.8" lengthAdjust="spacingAndGlyphs" stroke="#fff" stroke-width="1.6" stroke-opacity=".55" paint-order="stroke" stroke-linejoin="round">Schüttelstraße</text>
<text x="852" y="531.5" font-size="9" fill="#444" text-anchor="start" transform="rotate(25.5 852 531.5)" textLength="58" lengthAdjust="spacingAndGlyphs" stroke="#fff" stroke-width="1.6" stroke-opacity=".55" paint-order="stroke" stroke-linejoin="round">Erdberger Lände</text>
<text x="833.5" y="713" font-size="9" fill="#444" text-anchor="start" transform="rotate(43.7 833.5 713)" textLength="37" lengthAdjust="spacingAndGlyphs" stroke="#fff" stroke-width="1.6" stroke-opacity=".55" paint-order="stroke" stroke-linejoin="round">Rennweg</text>
<text x="740.1" y="820" font-size="9" fill="#555" text-anchor="start" transform="rotate(-38.0 740.1 820)" textLength="48.2" lengthAdjust="spacingAndGlyphs" stroke="#fff" stroke-width="1.6" stroke-opacity=".55" paint-order="stroke" stroke-linejoin="round">Ghegastraße</text>
<text x="832.2" y="824.1" font-size="9" fill="#555" text-anchor="start" transform="rotate(53.0 832.2 824.1)" textLength="68" lengthAdjust="spacingAndGlyphs" stroke="#fff" stroke-width="1.6" stroke-opacity=".55" paint-order="stroke" stroke-linejoin="round">Franz-Grill-Straße</text>
<text x="722" y="852" font-size="9" fill="#555" text-anchor="start" transform="rotate(55.0 722 852)" textLength="50" lengthAdjust="spacingAndGlyphs" stroke="#fff" stroke-width="1.6" stroke-opacity=".55" paint-order="stroke" stroke-linejoin="round">Arsenalstraße</text>
<text x="1004.5" y="624.7" font-size="9" fill="#444" text-anchor="start" transform="rotate(-53.8 1004.5 624.7)" textLength="47" lengthAdjust="spacingAndGlyphs" stroke="#fff" stroke-width="1.6" stroke-opacity=".55" paint-order="stroke" stroke-linejoin="round">Stadionallee</text>
<text x="1166" y="880" font-size="9" fill="#444" text-anchor="start" transform="rotate(-64.4 1166 880)" textLength="66" lengthAdjust="spacingAndGlyphs" stroke="#fff" stroke-width="1.6" stroke-opacity=".55" paint-order="stroke" stroke-linejoin="round">Haidequerstraße</text>
<text x="1059.2" y="334.5" font-size="9" fill="#444" text-anchor="start" transform="rotate(49.7 1059.2 334.5)" textLength="41.7" lengthAdjust="spacingAndGlyphs" stroke="#fff" stroke-width="1.6" stroke-opacity=".55" paint-order="stroke" stroke-linejoin="round">Handelskai</text>
<text x="1132.2" y="415.5" font-size="9" fill="#444" text-anchor="start" transform="rotate(48.0 1132.2 415.5)" textLength="42.7" lengthAdjust="spacingAndGlyphs" stroke="#fff" stroke-width="1.6" stroke-opacity=".55" paint-order="stroke" stroke-linejoin="round">Handelskai</text>
<text x="763" y="388" font-size="10.5" fill="#6f8fd0" text-anchor="start" font-style="italic" transform="rotate(-3.0 763 388)" textLength="56.4" lengthAdjust="spacingAndGlyphs" stroke="#fff" stroke-width="1.6" stroke-opacity=".55" paint-order="stroke" stroke-linejoin="round">Donaukanal</text>
<text x="846.4" y="471.1" font-size="10.5" fill="#6f8fd0" text-anchor="start" font-style="italic" transform="rotate(73.0 846.4 471.1)" textLength="59.8" lengthAdjust="spacingAndGlyphs" stroke="#fff" stroke-width="1.6" stroke-opacity=".55" paint-order="stroke" stroke-linejoin="round">Donaukanal</text>
<text x="1203.7" y="441" font-size="11" fill="#6f8fd0" text-anchor="start" font-style="italic" transform="rotate(45.0 1203.7 441)" textLength="32" lengthAdjust="spacingAndGlyphs" stroke="#fff" stroke-width="1.6" stroke-opacity=".55" paint-order="stroke" stroke-linejoin="round">Donau</text>
<text x="695.8" y="513.6" font-size="9.5" fill="#5a6db5" text-anchor="start" font-weight="700" textLength="46.9" lengthAdjust="spacingAndGlyphs" stroke="#fff" stroke-width="1.6" stroke-opacity=".55" paint-order="stroke" stroke-linejoin="round">Wien Mitte</text>
<text x="610.5" y="829.2" font-size="10" fill="#5a6db5" text-anchor="start" font-weight="700" textLength="87.5" lengthAdjust="spacingAndGlyphs" stroke="#fff" stroke-width="1.6" stroke-opacity=".55" paint-order="stroke" stroke-linejoin="round">Wien Hauptbahnhof</text>
<text x="662" y="681.6" font-size="10" fill="#5a9a62" text-anchor="start" font-style="italic" textLength="37" lengthAdjust="spacingAndGlyphs" stroke="#fff" stroke-width="1.6" stroke-opacity=".55" paint-order="stroke" stroke-linejoin="round">Belvedere</text>
<text x="1083.4" y="550.3" font-size="10" fill="#5a9a62" text-anchor="start" textLength="47.1" lengthAdjust="spacingAndGlyphs" stroke="#fff" stroke-width="1.6" stroke-opacity=".55" paint-order="stroke" stroke-linejoin="round">Stadionbad</text>
<text x="1010" y="430.8" font-size="10" fill="#4f8f5c" text-anchor="start" font-style="italic" textLength="54.9" lengthAdjust="spacingAndGlyphs" stroke="#fff" stroke-width="1.6" stroke-opacity=".55" paint-order="stroke" stroke-linejoin="round">Trabrennbahn</text>
<text x="1025.2" y="441" font-size="10" fill="#4f8f5c" text-anchor="start" font-style="italic" textLength="24.5" lengthAdjust="spacingAndGlyphs" stroke="#fff" stroke-width="1.6" stroke-opacity=".55" paint-order="stroke" stroke-linejoin="round">Krieau</text>
<text x="960.7" y="358.4" font-size="10" fill="#8e4a50" text-anchor="start" font-style="italic" textLength="43.8" lengthAdjust="spacingAndGlyphs" stroke="#fff" stroke-width="1.6" stroke-opacity=".55" paint-order="stroke" stroke-linejoin="round">Messe Wien</text>
<text x="1040.8" y="406" font-size="10" fill="#8e4a50" text-anchor="start" font-style="italic" textLength="24.7" lengthAdjust="spacingAndGlyphs" stroke="#fff" stroke-width="1.6" stroke-opacity=".55" paint-order="stroke" stroke-linejoin="round">Viertel</text>
<text x="1044.9" y="416.5" font-size="10" fill="#8e4a50" text-anchor="start" font-style="italic" textLength="17.5" lengthAdjust="spacingAndGlyphs" stroke="#fff" stroke-width="1.6" stroke-opacity=".55" paint-order="stroke" stroke-linejoin="round">Zwei</text>
<text x="1165.3" y="554.4" font-size="10" fill="#b8434f" text-anchor="start" font-style="italic" textLength="41.9" lengthAdjust="spacingAndGlyphs" stroke="#fff" stroke-width="1.6" stroke-opacity=".55" paint-order="stroke" stroke-linejoin="round">Handelskai</text>
<text x="1194" y="522.7" font-size="10" fill="#b8434f" text-anchor="start" font-style="italic" textLength="41.9" lengthAdjust="spacingAndGlyphs" stroke="#fff" stroke-width="1.6" stroke-opacity=".55" paint-order="stroke" stroke-linejoin="round">Handelskai</text>
<text x="995.3" y="649.2" font-size="10" fill="#b8434f" text-anchor="start" font-style="italic" textLength="29.7" lengthAdjust="spacingAndGlyphs" stroke="#fff" stroke-width="1.6" stroke-opacity=".55" paint-order="stroke" stroke-linejoin="round">Erdberg</text>
<text x="1008.5" y="661" font-size="10" fill="#b8434f" text-anchor="start" font-style="italic" stroke="#fff" stroke-width="1.6" stroke-opacity=".55" paint-order="stroke" stroke-linejoin="round">0</text>
<text x="1053.7" y="661.1" font-size="10" fill="#b8434f" text-anchor="start" font-style="italic" textLength="52.2" lengthAdjust="spacingAndGlyphs" stroke="#fff" stroke-width="1.6" stroke-opacity=".55" paint-order="stroke" stroke-linejoin="round">Knoten Prater</text>
<text x="990.2" y="671.8" font-size="10" fill="#b8434f" text-anchor="start" font-style="italic" textLength="52.2" lengthAdjust="spacingAndGlyphs" stroke="#fff" stroke-width="1.6" stroke-opacity=".55" paint-order="stroke" stroke-linejoin="round">Knoten Prater</text>
<text x="1014.5" y="683" font-size="10" fill="#b8434f" text-anchor="start" font-style="italic" stroke="#fff" stroke-width="1.6" stroke-opacity=".55" paint-order="stroke" stroke-linejoin="round">0</text>
<text x="1055.7" y="712.1" font-size="10" fill="#b8434f" text-anchor="start" font-style="italic" textLength="53.3" lengthAdjust="spacingAndGlyphs" stroke="#fff" stroke-width="1.6" stroke-opacity=".55" paint-order="stroke" stroke-linejoin="round">Knoten Prater</text>
<text x="1080.5" y="723" font-size="10" fill="#b8434f" text-anchor="start" font-style="italic" stroke="#fff" stroke-width="1.6" stroke-opacity=".55" paint-order="stroke" stroke-linejoin="round">0</text>
<text x="988.2" y="730" font-size="10" fill="#8a4a4a" text-anchor="start" font-style="italic" textLength="52.2" lengthAdjust="spacingAndGlyphs" stroke="#fff" stroke-width="1.6" stroke-opacity=".55" paint-order="stroke" stroke-linejoin="round">Knoten Prater</text>
<text x="981" y="747" font-size="10" fill="#8a4a4a" text-anchor="start" font-style="italic" textLength="30.7" lengthAdjust="spacingAndGlyphs" stroke="#fff" stroke-width="1.6" stroke-opacity=".55" paint-order="stroke" stroke-linejoin="round">St. Marx</text>
<text x="919.3" y="817.4" font-size="10" fill="#8a4a4a" text-anchor="start" font-style="italic" textLength="30.7" lengthAdjust="spacingAndGlyphs" stroke="#fff" stroke-width="1.6" stroke-opacity=".55" paint-order="stroke" stroke-linejoin="round">St. Marx</text>
<text x="882.4" y="863" font-size="10" fill="#b8434f" text-anchor="start" font-style="italic" textLength="70.6" lengthAdjust="spacingAndGlyphs" stroke="#fff" stroke-width="1.6" stroke-opacity=".55" paint-order="stroke" stroke-linejoin="round">Gürtel/Landstraße</text>
<text x="1139.7" y="757.6" font-size="10" fill="#6e2f2f" text-anchor="start" font-weight="700" transform="rotate(26.0 1139.7 757.6)" textLength="51.2" lengthAdjust="spacingAndGlyphs" stroke="#fff" stroke-width="1.6" stroke-opacity=".55" paint-order="stroke" stroke-linejoin="round">Ost Autobahn</text>
<text x="1133.5" y="787.9" font-size="10" fill="#9a5050" text-anchor="start" font-style="italic" textLength="54.3" lengthAdjust="spacingAndGlyphs" stroke="#fff" stroke-width="1.6" stroke-opacity=".55" paint-order="stroke" stroke-linejoin="round">Alt Simmering</text>
<text x="1056.8" y="738" font-size="10" fill="#7d8f7d" text-anchor="start" font-style="italic" textLength="28.6" lengthAdjust="spacingAndGlyphs" stroke="#fff" stroke-width="1.6" stroke-opacity=".55" paint-order="stroke" stroke-linejoin="round">U-Bahn-</text>
<text x="1040.4" y="748" font-size="10" fill="#7d8f7d" text-anchor="start" font-style="italic" textLength="63.5" lengthAdjust="spacingAndGlyphs" stroke="#fff" stroke-width="1.6" stroke-opacity=".55" paint-order="stroke" stroke-linejoin="round">Betriebsbahnhof</text>
<text x="1056.8" y="758.6" font-size="10" fill="#7d8f7d" text-anchor="start" font-style="italic" textLength="29.7" lengthAdjust="spacingAndGlyphs" stroke="#fff" stroke-width="1.6" stroke-opacity=".55" paint-order="stroke" stroke-linejoin="round">Erdberg</text>
<text x="1117.2" y="843.2" font-size="10" fill="#777" text-anchor="start" font-style="italic" textLength="31.7" lengthAdjust="spacingAndGlyphs" stroke="#fff" stroke-width="1.6" stroke-opacity=".55" paint-order="stroke" stroke-linejoin="round">Gaswerk</text>
<text x="1112" y="853.4" font-size="10" fill="#777" text-anchor="start" font-style="italic" textLength="42" lengthAdjust="spacingAndGlyphs" stroke="#fff" stroke-width="1.6" stroke-opacity=".55" paint-order="stroke" stroke-linejoin="round">Simmering</text>
<text x="1117.2" y="604.8" font-size="11" fill="#444" text-anchor="start" textLength="26.6" lengthAdjust="spacingAndGlyphs" stroke="#fff" stroke-width="1.6" stroke-opacity=".55" paint-order="stroke" stroke-linejoin="round">Prater</text>
<text x="1104.9" y="616.5" font-size="11" fill="#444" text-anchor="start" textLength="51.1" lengthAdjust="spacingAndGlyphs" stroke="#fff" stroke-width="1.6" stroke-opacity=".55" paint-order="stroke" stroke-linejoin="round">Hochstraße</text>
<text x="1068" y="513" font-size="13" fill="#4a90c9" text-anchor="start" font-weight="700" stroke="#fff" stroke-width="1.6" stroke-opacity=".55" paint-order="stroke" stroke-linejoin="round">P</text>
<rect x="946.9" y="593.5" width="28.3" height="12.7" rx="2" fill="#f4ead0" stroke="#cbb98f" stroke-width=".6"/>
<text x="949.5" y="603.3" font-size="9" fill="#7a6a4a" text-anchor="start" textLength="23" lengthAdjust="spacingAndGlyphs">B227</text>
</g>
<path d="M634.5 583L656 561.2L680 527L703.6 489L720 455L726 424L737 405L757.9 387.5L786.6 384.3L810.7 393.6L827.8 414.6L837.6 438.1L843.5 461.9L845.5 486L847.5 511.5L859.5 530.2L881 543.3L907.7 555.7L933.9 569.7L953.3 585.3L967 604.6L977.1 627.1L987.9 645.2L1012 660L1036.3 690L1048.6 702.3L1073.1 720.7L1095.7 737.1L1124.3 757.6L1155 776L1185.7 796.5L1187.8 801L1177.6 810.8L1155 812.9L1124.3 814.9L1095.7 825.1L1062.9 817L1032.2 810.8L986 805L944.8 803L926.4 825L914 850L731.7 848.7L691 765.4L725 765.4L723 700L718 657L690.7 637L645.7 608.3Z" fill="rgb(90,150,80)" fill-opacity=".38"/>
<circle cx="767.7" cy="415.3" r="13.1" fill="#2b8328"/>
<text x="767.7" y="422.1" font-size="19.5" font-weight="700" fill="#fff" text-anchor="middle">1</text>
<circle cx="737.7" cy="434.2" r="13.1" fill="#2b8328"/>
<text x="737.7" y="441" font-size="19.5" font-weight="700" fill="#fff" text-anchor="middle">1</text>
<circle cx="784.1" cy="446.7" r="13.1" fill="#2b8328"/>
<text x="784.1" y="453.5" font-size="19.5" font-weight="700" fill="#fff" text-anchor="middle">1</text>
<circle cx="827.5" cy="457.5" r="12.4" fill="#2b8328" stroke="#d3131b" stroke-width="1.8"/>
<text x="827.5" y="464.3" font-size="19.5" font-weight="700" fill="#fff" text-anchor="middle">0</text>
<circle cx="743.2" cy="562.2" r="13.1" fill="#2b8328"/>
<text x="743.2" y="569" font-size="19.5" font-weight="700" fill="#fff" text-anchor="middle">2</text>
<circle cx="704.1" cy="591.5" r="13.1" fill="#2b8328"/>
<text x="704.1" y="598.3" font-size="19.5" font-weight="700" fill="#fff" text-anchor="middle">2</text>
<circle cx="794" cy="548.9" r="12.4" fill="#2b8328" stroke="#d3131b" stroke-width="1.8"/>
<text x="794" y="555.7" font-size="19.5" font-weight="700" fill="#fff" text-anchor="middle">0</text>
<circle cx="844.5" cy="546.9" r="12.4" fill="#2b8328" stroke="#d3131b" stroke-width="1.8"/>
<text x="844.5" y="553.7" font-size="19.5" font-weight="700" fill="#fff" text-anchor="middle">0</text>
<circle cx="864" cy="555.5" r="12.4" fill="#2b8328" stroke="#d3131b" stroke-width="1.8"/>
<text x="864" y="562.3" font-size="19.5" font-weight="700" fill="#fff" text-anchor="middle">0</text>
<circle cx="906.4" cy="566.9" r="12.4" fill="#2b8328" stroke="#d3131b" stroke-width="1.8"/>
<text x="906.4" y="573.7" font-size="19.5" font-weight="700" fill="#fff" text-anchor="middle">0</text>
<circle cx="854.3" cy="618.1" r="13.1" fill="#2b8328"/>
<text x="854.3" y="624.9" font-size="19.5" font-weight="700" fill="#fff" text-anchor="middle">1</text>
<circle cx="952.4" cy="639" r="12.4" fill="#2b8328" stroke="#d3131b" stroke-width="1.8"/>
<text x="952.4" y="645.8" font-size="19.5" font-weight="700" fill="#fff" text-anchor="middle">0</text>
<circle cx="956.1" cy="686.1" r="12.4" fill="#2b8328" stroke="#d3131b" stroke-width="1.8"/>
<text x="956.1" y="692.9" font-size="19.5" font-weight="700" fill="#fff" text-anchor="middle">0</text>
<circle cx="756.5" cy="659.5" r="13.1" fill="#2b8328"/>
<text x="756.5" y="666.3" font-size="19.5" font-weight="700" fill="#fff" text-anchor="middle">1</text>
<circle cx="828.1" cy="668.3" r="13.1" fill="#2b8328"/>
<text x="828.1" y="675.1" font-size="19.5" font-weight="700" fill="#fff" text-anchor="middle">1</text>
<circle cx="841.4" cy="705.4" r="13.1" fill="#2b8328"/>
<text x="841.4" y="712.2" font-size="19.5" font-weight="700" fill="#fff" text-anchor="middle">1</text>
<path d="M755.9 503.6Q746.1 479.3 738.5 460.1A18.8 18.8 0 1 1 773.3 460.1Q765.7 479.3 755.9 503.6Z" fill="#5d49e0"/>
<circle cx="755.9" cy="453.5" r="9.8" fill="#fff"/>
<path d="M671.9 612.4Q662.2 588.5 654.5 569.7A18.8 18.8 0 1 1 689.3 569.7Q681.6 588.5 671.9 612.4Z" fill="#5d49e0"/>
<circle cx="671.9" cy="563" r="9.8" fill="#fff"/>
<path d="M792.3 676.9Q782.5 652.8 774.9 633.7A18.8 18.8 0 1 1 809.7 633.7Q802.1 652.8 792.3 676.9Z" fill="#5d49e0"/>
<circle cx="792.3" cy="627.1" r="9.8" fill="#fff"/>
</svg>
</div>
<div class="b" style="left:231.8px;top:106.8px;width:135.4px;height:50.4px;background:#294650;border-radius:7px;"></div>
<div class="sel" style="left:503.4px;top:115.4px;width:136.6px;height:36.1px;border-radius:6px"><i style="left:105.1px"></i></div>
<div class="sel" style="left:861.0px;top:115.7px;width:161.9px;height:35.5px;border-radius:6px"><i style="left:132.2px"></i></div>
<div class="sel" style="left:1053.9px;top:115.7px;width:161.5px;height:35.5px;border-radius:6px"><i style="left:131.8px"></i></div>
<div class="b" style="left:19.1px;top:174.1px;width:1205.9px;height:156.6px;background:#294650;border-radius:0;"></div>
<div class="b" style="left:27.9px;top:180.1px;width:347.7px;height:54.7px;background:#604ae0;border-radius:8px;"></div>
<div class="sel" style="left:103.0px;top:188.7px;width:263.9px;height:35.9px;border-radius:6px"><i style="left:229.0px"></i></div>
<div class="sel" style="left:478.0px;top:188.6px;width:259.2px;height:35.7px;border-radius:6px"><i style="left:225.0px"></i></div>
<div class="b" style="left:857.2px;top:182.0px;width:112.1px;height:53.3px;background:#fff;border-radius:0;"></div>
<div class="b" style="left:978.5px;top:182.7px;width:117.5px;height:53.7px;background:#fff;border-radius:0;"></div>
<div class="b" style="left:1104.9px;top:182.7px;width:112.5px;height:53.7px;background:#fff;border-radius:0;"></div>
<div class="sel" style="left:271.3px;top:284.6px;width:103.4px;height:34.8px;border-radius:6px"><i style="left:68.4px"></i></div>
<div class="b" style="left:966.1px;top:266.9px;width:250.6px;height:41.9px;background:#fff;border-radius:21px;"></div>
<div class="b" style="left:27.2px;top:341.4px;width:459.5px;height:124.6px;background:#294650;border-radius:9px 9px 0 0;"></div>
<div class="b" style="left:27.2px;top:464.7px;width:459.2px;height:264.5px;background:#fff;border-radius:0 0 8px 8px;box-shadow:0 1px 3px rgba(0,0,0,.22)"></div>
<div class="b" style="left:33.7px;top:346.4px;width:113.2px;height:39.6px;background:#4ca247;border-radius:8px;"></div>
<div class="sel" style="left:179.6px;top:348.3px;width:200.7px;height:35.5px;border-radius:6px"><i style="left:165.9px"></i></div>
<div class="b" style="left:31.5px;top:467.8px;width:492.8px;height:64.2px;background:#4ca247;border-radius:6px;"></div>
<div class="b" style="left:43.6px;top:654.2px;width:422.4px;height:1.2px;background:#999;border-radius:0;"></div>
<div class="b" style="left:28.0px;top:740.0px;width:459.2px;height:122.2px;background:#294650;border-radius:9px 9px 0 0;"></div>
<div class="b" style="left:31.7px;top:743.8px;width:90.7px;height:39.7px;background:#1c9190;border-radius:8px;"></div>
<div class="sel" style="left:157.0px;top:745.1px;width:201.7px;height:35.2px;border-radius:6px"><i style="left:166.3px"></i></div>
<svg class="ic" style="left:0;top:0" width="1231" height="879" viewBox="0 0 1231 879"><g><path d="M42.1 72.5L48.54 50.56A8.3 8.3 0 1 1 61.11 59.8Q53 67.6 42.1 72.5Z" fill="#5e7983"/><path d="M42.1 72.6Q35.3 61.5 33.72 53.02A8.9 8.9 0 1 1 50.14 52.87Q48.4 62 42.1 72.6Z" fill="#2a4755"/><circle cx="41.86" cy="49.47" r="4.8" fill="#fff"/></g>
<path d="M375.0 132.6H388.3" stroke="#000" stroke-width="2.0" fill="none"/><path d="M397.0 132.6l-9.7 -5.7v11.4z" fill="#000"/>
<path d="M473.8 132.6H486.9" stroke="#000" stroke-width="2.0" fill="none"/><path d="M495.6 132.6l-9.7 -5.7v11.4z" fill="#000"/>
<polygon points="619.3,131.7 628.3,131.7 623.8,139.2" fill="#000"/>
<polygon points="1003.5,131.7 1012.5,131.7 1008.0,139.2" fill="#000"/>
<path d="M1029.0 132.6H1041.0" stroke="#000" stroke-width="2.0" fill="none"/><path d="M1049.7 132.6l-9.7 -5.7v11.4z" fill="#000"/>
<polygon points="1196.3,131.7 1205.3,131.7 1200.8,139.2" fill="#000"/>
<defs><clipPath id="av"><circle cx="1187.9" cy="58.3" r="17.2"/></clipPath><radialGradient id="avs" cx=".5" cy=".35" r=".7"><stop offset="0" stop-color="#d2bb92"/><stop offset=".7" stop-color="#c2a983"/><stop offset="1" stop-color="#8d7a60"/></radialGradient></defs><g clip-path="url(#av)"><rect x="1170" y="40" width="36" height="36" fill="#1d1f1c"/><path d="M1170 44h10v26l-4 6h-6z" fill="#5c6e4e"/><path d="M1170 52h5v16h-5z" fill="#b9cfa2"/><path d="M1176 62q5-6 8 0v14h-8z" fill="#23231f"/><ellipse cx="1188.6" cy="57.5" rx="10.6" ry="16.5" fill="url(#avs)"/><path d="M1182 70h13v7h-13z" fill="#b49d78"/><ellipse cx="1183.6" cy="59.5" rx="3" ry="2.8" fill="#dba3a0" opacity=".8"/><ellipse cx="1194.300" cy="59.5" rx="3" ry="2.8" fill="#dba3a0" opacity=".8"/><ellipse cx="1189" cy="47" rx="4.5" ry="4" fill="#dcaaa0" opacity=".5"/><path d="M1181 53.300h5M1191.500 53.300h5" stroke="#4a4034" stroke-width="1.3"/><path d="M1185.500 64.300h7" stroke="#c9706a" stroke-width="1.200"/><path d="M1188.200 54v6.500" stroke="#d9b9a0" stroke-width="1.800" opacity=".7"/><path d="M1201 52h5v3h-5z" fill="#8aa37e"/></g>
<polygon points="345.2,204.8 354.2,204.8 349.7,212.3" fill="#000"/>
<polygon points="716.9,205.2 725.9,205.2 721.4,212.8" fill="#000"/>
<path d="M748.9 206.6H770.0" stroke="#fff" stroke-width="1.6" fill="none"/><path d="M778.2 206.6l-9.2 -4.9v9.8z" fill="#fff"/>
<path transform="matrix(1.4154 0 0 1.4186 864.91 190.77)" d="M13.5 5.5c1.1 0 2-.9 2-2s-.9-2-2-2-2 .9-2 2 .9 2 2 2zM9.8 8.9L7 23h2.1l1.8-8 2.1 2v6h2v-7.5l-2.1-2 .6-3C14.8 12 16.8 13 19 13v-2c-1.9 0-3.5-1-4.3-2.4l-1-1.6c-.4-.6-1-1-1.7-1-.3 0-.5.1-.8.1L6 8.3V13h2V9.600l1.800-.7" fill="#000"/>
<path transform="matrix(1.4500 0 0 1.4211 991.40 192.56)" d="M4 16c0 .88.39 1.67 1 2.220V20c0 .55.45 1 1 1h1c.55 0 1-.45 1-1v-1h8v1c0 .55.45 1 1 1h1c.55 0 1-.45 1-1v-1.780c.61-.55 1-1.340 1-2.220V6c0-3.500-3.580-4-8-4s-8 .5-8 4v10zm3.500 1c-.83 0-1.500-.67-1.500-1.500S6.670 14 7.500 14s1.500.67 1.500 1.500S8.330 17 7.500 17zm9 0c-.83 0-1.500-.67-1.500-1.500s.67-1.500 1.500-1.500 1.500.67 1.500 1.500-.67 1.500-1.500 1.500zm1.500-6H6V6h12v5z" fill="#000"/>
<path transform="matrix(1.3250 0 0 1.3171 1119.50 195.02)" d="M15.5 5.5c1.1 0 2-.9 2-2s-.9-2-2-2-2 .9-2 2 .9 2 2 2zM5 12c-2.800 0-5 2.200-5 5s2.200 5 5 5 5-2.200 5-5-2.200-5-5-5zm0 8.500c-1.900 0-3.500-1.600-3.500-3.500s1.600-3.500 3.500-3.500 3.500 1.600 3.500 3.500-1.600 3.500-3.500 3.500zm5.800-10l2.400-2.400.8.800c1.300 1.300 3 2.100 5.100 2.100V9c-1.500 0-2.700-.6-3.600-1.500l-1.900-1.900c-.5-.4-1-.6-1.600-.6s-1.100.2-1.400.6L7.800 8.400c-.4.400-.6.900-.6 1.400 0 .6.200 1.100.6 1.400L11 14v5h2v-6.200l-2.200-2.300zM19 12c-2.800 0-5 2.200-5 5s2.200 5 5 5 5-2.200 5-5-2.200-5-5-5zm0 8.500c-1.900 0-3.500-1.600-3.500-3.500s1.600-3.500 3.500-3.500 3.500 1.600 3.500 3.500-1.600 3.500-3.500 3.500z" fill="#000"/>
<polygon points="950.4,201.0 960.2,201.0 955.3,193.6" fill="#000"/>
<polygon points="950.4,216.4 960.2,216.4 955.3,223.8" fill="#000"/>
<polygon points="1075.6,201.0 1085.4,201.0 1080.5,193.6" fill="#000"/>
<polygon points="1075.6,216.4 1085.4,216.4 1080.5,223.8" fill="#000"/>
<polygon points="1196.3,201.0 1206.1,201.0 1201.2,193.6" fill="#000"/>
<polygon points="1196.3,216.4 1206.1,216.4 1201.2,223.8" fill="#000"/>
<polygon points="351.3,300.0 364.1,300.0 357.7,307.8" fill="#000"/>
<path transform="matrix(1.0000 0 0 1.0000 279.30 289.90)" d="M13.5 5.5c1.1 0 2-.9 2-2s-.9-2-2-2-2 .9-2 2 .9 2 2 2zM9.8 8.9L7 23h2.1l1.8-8 2.1 2v6h2v-7.5l-2.1-2 .6-3C14.8 12 16.8 13 19 13v-2c-1.9 0-3.5-1-4.3-2.4l-1-1.6c-.4-.6-1-1-1.7-1-.3 0-.5.1-.8.1L6 8.3V13h2V9.600l1.800-.7" fill="#000"/>
<path d="M614.1 311.2V300.6" stroke="#fff" stroke-width="2.0" fill="none"/><path d="M614.1 293.6l-5.9 8.0h11.8z" fill="#fff"/>
<path d="M755.8 311.2V300.6" stroke="#fff" stroke-width="2.0" fill="none"/><path d="M755.8 293.6l-5.9 8.0h11.8z" fill="#fff"/>
<path transform="matrix(1.0278 0 0 1.0000 1164.72 276.00)" d="M19 19H5V5h7V3H5c-1.110 0-2 .9-2 2v14c0 1.100.89 2 2 2h14c1.100 0 2-.9 2-2v-7h-2v7zM14 3v2h3.590l-9.830 9.830 1.410 1.410L19 6.410V10h2V3h-7z" fill="#000"/>
<path d="M148.9 366.4H162.1" stroke="#fff" stroke-width="1.7" fill="none"/><path d="M170.6 366.4l-9.5 -5.2v10.5z" fill="#fff"/>
<polygon points="357.5,364.3 370.2,364.3 363.9,372.1" fill="#000"/>
<path transform="matrix(1.3231 0 0 1.2977 35.66 480.95)" d="M13.5 5.5c1.1 0 2-.9 2-2s-.9-2-2-2-2 .9-2 2 .9 2 2 2zM9.8 8.9L7 23h2.1l1.8-8 2.1 2v6h2v-7.5l-2.1-2 .6-3C14.8 12 16.8 13 19 13v-2c-1.9 0-3.5-1-4.3-2.4l-1-1.6c-.4-.6-1-1-1.7-1-.3 0-.5.1-.8.1L6 8.3V13h2V9.600l1.800-.7" fill="#fff"/>
<path d="M309.7 487.7V496.8" stroke="#ecefe4" stroke-width="1.3" fill="none"/><path d="M309.7 506.3l-5.8 -10.5h11.7z" fill="#ecefe4"/>
<path d="M482.5 499.2H504.1" stroke="#fff" stroke-width="1.7" fill="none"/><path d="M512.6 499.2l-9.5 -5.5v11.0z" fill="#fff"/>
<path transform="matrix(1.3923 0 0 1.3209 33.95 540.42)" d="M13.5 5.5c1.1 0 2-.9 2-2s-.9-2-2-2-2 .9-2 2 .9 2 2 2zM9.8 8.9L7 23h2.1l1.8-8 2.1 2v6h2v-7.5l-2.1-2 .6-3C14.8 12 16.8 13 19 13v-2c-1.9 0-3.5-1-4.3-2.4l-1-1.6c-.4-.6-1-1-1.7-1-.3 0-.5.1-.8.1L6 8.3V13h2V9.600l1.800-.7" fill="#000"/>
<path transform="matrix(1.3438 0 0 1.2421 82.12 542.52)" d="M4 16c0 .88.39 1.67 1 2.220V20c0 .55.45 1 1 1h1c.55 0 1-.45 1-1v-1h8v1c0 .55.45 1 1 1h1c.55 0 1-.45 1-1v-1.780c.61-.55 1-1.340 1-2.220V6c0-3.500-3.580-4-8-4s-8 .5-8 4v10zm3.500 1c-.83 0-1.500-.67-1.500-1.500S6.670 14 7.500 14s1.500.67 1.500 1.500S8.330 17 7.500 17zm9 0c-.83 0-1.500-.67-1.500-1.500s.67-1.500 1.500-1.500 1.500.67 1.500 1.500-.67 1.500-1.500 1.500zm1.500-6H6V6h12v5z" fill="#000"/>
<path d="M313.8 549.2V559.9" stroke="#000" stroke-width="2" fill="none"/><path d="M313.8 566.9l-5.9 -8.0h11.8z" fill="#000"/>
<path transform="matrix(1.5250 0 0 1.5561 42.30 605.07)" d="M15.5 5.5c1.1 0 2-.9 2-2s-.9-2-2-2-2 .9-2 2 .9 2 2 2zM5 12c-2.800 0-5 2.200-5 5s2.200 5 5 5 5-2.200 5-5-2.200-5-5-5zm0 8.500c-1.900 0-3.500-1.600-3.500-3.500s1.600-3.500 3.500-3.500 3.500 1.600 3.500 3.500-1.600 3.500-3.500 3.500zm5.800-10l2.400-2.400.8.800c1.300 1.300 3 2.100 5.100 2.100V9c-1.500 0-2.700-.6-3.600-1.500l-1.900-1.900c-.5-.4-1-.6-1.600-.6s-1.100.2-1.400.6L7.800 8.400c-.4.400-.6.900-.6 1.400 0 .6.200 1.100.6 1.400L11 14v5h2v-6.200l-2.200-2.300zM19 12c-2.800 0-5 2.200-5 5s2.200 5 5 5 5-2.200 5-5-2.200-5-5-5zm0 8.500c-1.900 0-3.500-1.600-3.500-3.500s1.600-3.500 3.500-3.500 3.500 1.600 3.500 3.500-1.600 3.500-3.500 3.500z" fill="#000"/>
<path d="M312.7 612.5V624.0" stroke="#000" stroke-width="2" fill="none"/><path d="M312.7 631.0l-5.9 -8.0h11.8z" fill="#000"/>
<path d="M319.5 683.5H329.9" stroke="#000" stroke-width="2" fill="none"/><path d="M338.4 683.5l-9.5 -5.8v11.5z" fill="#000"/>
<path d="M126.3 763.2H139.3" stroke="#fff" stroke-width="1.7" fill="none"/><path d="M147.8 763.2l-9.5 -5.2v10.5z" fill="#fff"/>
<polygon points="335.1,760.8 347.6,760.8 341.4,768.6" fill="#000"/></svg>
<div id="txt">
<span class="t" style="left:73.0px;top:48.0px;font-size:21px;color:#294650;transform:scaleX(0.972);"><b>Near</b>my<b>dear</b></span>
<span class="t" style="left:31.7px;top:122.0px;font-size:20px;color:#000;-webkit-text-stroke:0.84px #000;transform:scaleX(1.020);">Proximity Analytics</span>
<span class="t" style="left:241.0px;top:121.8px;font-size:20px;color:#fff;-webkit-text-stroke:0.7px #fff;transform:scaleX(1.016);">Food &amp; More</span>
<span class="t" style="left:404.6px;top:121.9px;font-size:20.3px;color:#000;-webkit-text-stroke:0.77px #000;transform:scaleX(0.964);">Vienna</span>
<span class="t" style="left:519.2px;top:122.3px;font-size:20px;color:#000;-webkit-text-stroke:0.7px #000;transform:scaleX(1.010);">1030</span>
<span class="t" style="left:769.3px;top:122.8px;font-size:20px;color:#000;-webkit-text-stroke:0.84px #000;transform:scaleX(0.972);">Compare</span>
<span class="t" style="left:870.0px;top:124.3px;font-size:20px;color:#000;-webkit-text-stroke:0.7px #000;transform:scaleX(1.025);">March 2024</span>
<span class="t" style="left:1062.5px;top:124.3px;font-size:20px;color:#000;-webkit-text-stroke:0.7px #000;transform:scaleX(1.025);">March 2025</span>
<span class="t" style="left:1137.8px;top:51.9px;font-size:12.5px;color:#000;transform:scaleX(1.023);">DE</span>
<span class="t" style="left:35.8px;top:195.0px;font-size:21px;color:#fff;-webkit-text-stroke:0.91px #fff;transform:scaleX(0.939);">Sector</span>
<span class="t" style="left:117.4px;top:198.0px;font-size:20px;color:#000;-webkit-text-stroke:0.77px #000;transform:scaleX(0.982);">Retail</span>
<span class="t" style="left:384.1px;top:195.7px;font-size:21px;color:#fff;-webkit-text-stroke:0.91px #fff;transform:scaleX(0.950);">Category</span>
<span class="t" style="left:492.7px;top:196.6px;font-size:20px;color:#000;-webkit-text-stroke:0.77px #000;transform:scaleX(0.988);">Supermarket</span>
<span class="t" style="left:788.3px;top:196.8px;font-size:21px;color:#fff;-webkit-text-stroke:0.91px #fff;transform:scaleX(0.953);">Target</span>
<span class="t" style="left:35.8px;top:264.4px;font-size:15px;color:#fff;-webkit-text-stroke:0.56px #fff;transform:scaleX(1.121);">In District</span>
<span class="t" style="left:136.9px;top:245.8px;font-size:15px;color:#fff;-webkit-text-stroke:0.56px #fff;transform:scaleX(1.022);">Reachable</span>
<span class="t" style="left:139.0px;top:264.4px;font-size:15px;color:#fff;-webkit-text-stroke:0.56px #fff;transform:scaleX(1.098);">within target</span>
<span class="t" style="left:270.9px;top:245.8px;font-size:15px;color:#fff;-webkit-text-stroke:0.56px #fff;transform:scaleX(1.092);">Mode of</span>
<span class="t" style="left:272.0px;top:264.4px;font-size:15px;color:#fff;-webkit-text-stroke:0.56px #fff;transform:scaleX(1.086);">transport</span>
<span class="t" style="left:413.8px;top:245.8px;font-size:15px;color:#fff;-webkit-text-stroke:0.56px #fff;transform:scaleX(1.063);">Time target</span>
<span class="t" style="left:412.7px;top:264.4px;font-size:15px;color:#fff;-webkit-text-stroke:0.56px #fff;transform:scaleX(1.089);">March 2024</span>
<span class="t" style="left:552.7px;top:245.8px;font-size:15px;color:#fff;-webkit-text-stroke:0.56px #fff;transform:scaleX(1.063);">Time target</span>
<span class="t" style="left:551.6px;top:264.4px;font-size:15px;color:#fff;-webkit-text-stroke:0.56px #fff;transform:scaleX(1.089);">March 2024</span>
<span class="t" style="left:694.4px;top:245.9px;font-size:15px;color:#fff;-webkit-text-stroke:0.56px #fff;transform:scaleX(1.089);">Popularity</span>
<span class="t" style="left:694.3px;top:264.4px;font-size:15px;color:#fff;-webkit-text-stroke:0.56px #fff;transform:scaleX(1.063);">index</span>
<span class="t" style="left:35.8px;top:290.4px;font-size:24.5px;color:#fff;font-weight:700;transform:scaleX(1.108);">3</span>
<span class="t" style="left:142.0px;top:290.4px;font-size:24.5px;color:#fff;font-weight:700;transform:scaleX(1.077);">3</span>
<span class="t" style="left:413.8px;top:290.4px;font-size:24.5px;color:#fff;font-weight:700;transform:scaleX(1.027);">85%</span>
<span class="t" style="left:551.7px;top:290.4px;font-size:24.5px;color:#fff;font-weight:700;transform:scaleX(0.997);">89%</span>
<span class="t" style="left:694.0px;top:290.4px;font-size:24.5px;color:#fff;font-weight:700;">98%</span>
<span class="t" style="left:909.4px;top:188.4px;font-size:24px;color:#000;-webkit-text-stroke:0.98px #000;transform:scaleX(1.077);">10</span>
<span class="t" style="left:911.4px;top:211.8px;font-size:15px;color:#000;-webkit-text-stroke:0.42px #000;transform:scaleX(1.029);">min</span>
<span class="t" style="left:1032.7px;top:188.4px;font-size:24px;color:#000;-webkit-text-stroke:0.98px #000;transform:scaleX(1.089);">10</span>
<span class="t" style="left:1033.6px;top:211.8px;font-size:15px;color:#000;-webkit-text-stroke:0.42px #000;transform:scaleX(1.073);">min</span>
<span class="t" style="left:1166.2px;top:188.4px;font-size:24px;color:#000;-webkit-text-stroke:0.98px #000;transform:scaleX(1.008);">5</span>
<span class="t" style="left:1159.1px;top:211.8px;font-size:15px;color:#000;-webkit-text-stroke:0.42px #000;transform:scaleX(1.073);">min</span>
<span class="t" style="left:1002.7px;top:277.1px;font-size:20.5px;color:#000;-webkit-text-stroke:0.84px #000;transform:scaleX(0.941);">Run ad campaign</span>
<span class="t" style="left:41.7px;top:354.3px;font-size:20px;color:#fff;-webkit-text-stroke:0.77px #fff;transform:scaleX(1.017);">Properties</span>
<span class="t" style="left:194.3px;top:355.2px;font-size:20px;color:#000;-webkit-text-stroke:0.77px #000;transform:scaleX(0.992);">To rent</span>
<span class="t" style="left:440.8px;top:355.1px;font-size:25px;color:#fff;font-weight:700;transform:scaleX(1.033);">15</span>
<span class="t" style="left:137.9px;top:417.2px;font-size:15px;color:#fff;-webkit-text-stroke:0.56px #fff;transform:scaleX(1.063);">Time target</span>
<span class="t" style="left:136.8px;top:435.9px;font-size:15px;color:#fff;-webkit-text-stroke:0.56px #fff;transform:scaleX(1.104);">March 2024</span>
<span class="t" style="left:249.0px;top:417.2px;font-size:15px;color:#fff;-webkit-text-stroke:0.56px #fff;transform:scaleX(1.063);">Time target</span>
<span class="t" style="left:247.9px;top:435.9px;font-size:15px;color:#fff;-webkit-text-stroke:0.56px #fff;transform:scaleX(1.104);">March 2025</span>
<span class="t" style="left:367.1px;top:417.2px;font-size:15px;color:#fff;-webkit-text-stroke:0.56px #fff;transform:scaleX(1.092);">Popularity</span>
<span class="t" style="left:367.1px;top:435.9px;font-size:15px;color:#fff;-webkit-text-stroke:0.56px #fff;transform:scaleX(1.063);">index</span>
<span class="t" style="left:139.0px;top:485.1px;font-size:25px;color:#fff;transform:scaleX(1.024);">60%</span>
<span class="t" style="left:245.8px;top:485.1px;font-size:25px;color:#fff;font-weight:700;">56%</span>
<span class="t" style="left:367.9px;top:485.1px;font-size:25px;color:#fff;font-weight:700;transform:scaleX(1.014);">98%</span>
<span class="t" style="left:68.2px;top:547.5px;font-size:23px;color:#000;font-weight:700;transform:scaleX(0.808);">+</span>
<span class="t" style="left:141.3px;top:545.4px;font-size:25px;color:#000;transform:scaleX(0.994);">32%</span>
<span class="t" style="left:246.4px;top:545.4px;font-size:25px;color:#000;font-weight:700;transform:scaleX(1.014);">31%</span>
<span class="t" style="left:368.8px;top:545.4px;font-size:25px;color:#000;font-weight:700;transform:scaleX(1.022);">12%</span>
<span class="t" style="left:139.5px;top:609.4px;font-size:25px;color:#000;transform:scaleX(1.014);">92%</span>
<span class="t" style="left:245.0px;top:609.4px;font-size:25px;color:#000;font-weight:700;transform:scaleX(1.014);">88%</span>
<span class="t" style="left:367.9px;top:609.4px;font-size:25px;color:#000;font-weight:700;transform:scaleX(1.014);">64%</span>
<span class="t" style="left:43.2px;top:673.5px;font-size:25px;color:#000;font-weight:700;transform:scaleX(0.984);">All</span>
<span class="t" style="left:139.5px;top:673.4px;font-size:25px;color:#000;transform:scaleX(1.014);">96%</span>
<span class="t" style="left:245.0px;top:673.4px;font-size:25px;color:#000;font-weight:700;transform:scaleX(1.014);">96%</span>
<span class="t" style="left:44.0px;top:752.6px;font-size:20px;color:#fff;-webkit-text-stroke:0.77px #fff;transform:scaleX(0.947);">Travel</span>
<span class="t" style="left:171.3px;top:751.7px;font-size:20px;color:#000;-webkit-text-stroke:0.77px #000;transform:scaleX(1.015);">Hotels</span>
<span class="t" style="left:441.3px;top:753.5px;font-size:25px;color:#fff;font-weight:700;transform:scaleX(1.048);">69</span>
<span class="t" style="left:139.2px;top:805.0px;font-size:14px;color:#fff;-webkit-text-stroke:0.49px #fff;transform:scaleX(0.926);">Access</span>
<span class="t" style="left:139.2px;top:820.1px;font-size:14px;color:#fff;-webkit-text-stroke:0.49px #fff;transform:scaleX(1.026);">time target</span>
<span class="t" style="left:138.2px;top:835.1px;font-size:14px;color:#fff;-webkit-text-stroke:0.49px #fff;transform:scaleX(1.019);">March 2024</span>
<span class="t" style="left:243.8px;top:805.0px;font-size:14px;color:#fff;-webkit-text-stroke:0.49px #fff;transform:scaleX(0.926);">Access</span>
<span class="t" style="left:243.8px;top:820.1px;font-size:14px;color:#fff;-webkit-text-stroke:0.49px #fff;transform:scaleX(1.026);">time target</span>
<span class="t" style="left:242.8px;top:835.1px;font-size:14px;color:#fff;-webkit-text-stroke:0.49px #fff;transform:scaleX(1.019);">March 2025</span>
<span class="t" style="left:366.5px;top:822.2px;font-size:14px;color:#fff;-webkit-text-stroke:0.49px #fff;transform:scaleX(1.027);">Connection</span>
<span class="t" style="left:366.5px;top:837.3px;font-size:14px;color:#fff;-webkit-text-stroke:0.49px #fff;transform:scaleX(1.024);">quality index</span>
</div>
</div>
<div id="bezel"></div>
</body></html>
